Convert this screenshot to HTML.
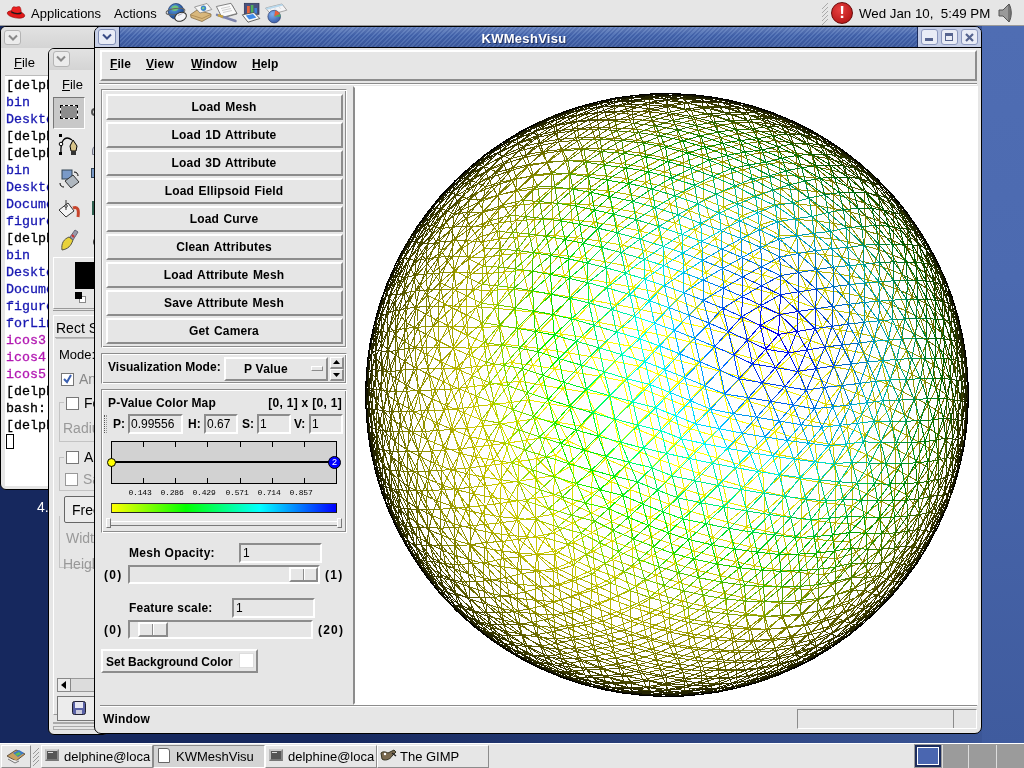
<!DOCTYPE html>
<html><head><meta charset="utf-8"><title>KWMeshVisu</title><style>
*{box-sizing:border-box;margin:0;padding:0}
html,body{width:1024px;height:768px;overflow:hidden}
body{position:relative;background:#16285e;font-family:"Liberation Sans",sans-serif;font-size:12px;color:#000}
.a{position:absolute}
.t{position:absolute;white-space:nowrap;line-height:1}
.b{font-weight:bold}
.raised{border:2px solid;border-color:#fff #8c8c8c #8c8c8c #fff;background:#e6e6e6}
.sunken{border:2px solid;border-color:#8c8c8c #fff #fff #8c8c8c;background:#e6e6e6}
.groove{border:1px solid;border-color:#8c8c8c #fff #fff #8c8c8c;box-shadow:inset 1px 1px 0 #fff, inset -1px -1px 0 #8c8c8c}
.btn{position:absolute;left:106px;width:237px;height:26px;border:2px solid;border-color:#fff #8c8c8c #8c8c8c #fff;background:#e6e6e6;text-align:center;font-weight:bold;font-size:12px;line-height:23px;letter-spacing:0.15px;word-spacing:1px;padding-right:1px}
.mono{font-family:"Liberation Mono",monospace}
</style></head><body>
<div id="w" style="position:absolute;left:0;top:0;width:1024px;height:768px;will-change:transform">
<div class="a" style="left:0;top:0;width:1024px;height:768px;background:linear-gradient(95deg,#16285e 0%,#16285e 36%,#3d5899 98%)"></div>
<div class="a" style="left:982px;top:26px;width:42px;height:718px;background:linear-gradient(180deg,#4f6db3 0%,#4c6ab0 35%,#3f5b9e 100%)"></div>
<div class="a" style="left:0;top:26px;width:110px;height:464px;background:#e6e6e6;border:1px solid #000;border-radius:6px 0 6px 6px"></div>
<div class="a" style="left:1px;top:27px;width:110px;height:21px;background:linear-gradient(180deg,#e2e2e2,#d4d4d4);border-radius:5px 0 0 0"></div>
<div class="a" style="left:4px;top:30px;width:17px;height:15px;border:1px solid #b4b4b4;border-radius:3px;background:#ececec"></div>
<svg class="a" style="left:8px;top:34px" width="10" height="8"><path d="M1 1.5L5 5.5L9 1.5" fill="none" stroke="#8a8a8a" stroke-width="2"/></svg>
<div class="t" style="left:14px;top:56px;font-size:13px"><u>F</u>ile</div>
<div class="a" style="left:5px;top:75px;width:56px;height:411px;background:#fff;border-top:1px solid #bbb"></div>

<div class="t mono" style="left:6px;top:79px;font-size:13.33px;color:#000;-webkit-text-stroke:.3px #000">[delph</div>
<div class="t mono" style="left:6px;top:96px;font-size:13.33px;color:#1818b2;-webkit-text-stroke:.3px #1818b2">bin</div>
<div class="t mono" style="left:6px;top:113px;font-size:13.33px;color:#1818b2;-webkit-text-stroke:.3px #1818b2">Deskto</div>
<div class="t mono" style="left:6px;top:130px;font-size:13.33px;color:#000;-webkit-text-stroke:.3px #000">[delph</div>
<div class="t mono" style="left:6px;top:147px;font-size:13.33px;color:#000;-webkit-text-stroke:.3px #000">[delph</div>
<div class="t mono" style="left:6px;top:164px;font-size:13.33px;color:#1818b2;-webkit-text-stroke:.3px #1818b2">bin</div>
<div class="t mono" style="left:6px;top:181px;font-size:13.33px;color:#1818b2;-webkit-text-stroke:.3px #1818b2">Deskto</div>
<div class="t mono" style="left:6px;top:198px;font-size:13.33px;color:#1818b2;-webkit-text-stroke:.3px #1818b2">Docume</div>
<div class="t mono" style="left:6px;top:215px;font-size:13.33px;color:#1818b2;-webkit-text-stroke:.3px #1818b2">figure</div>
<div class="t mono" style="left:6px;top:232px;font-size:13.33px;color:#000;-webkit-text-stroke:.3px #000">[delph</div>
<div class="t mono" style="left:6px;top:249px;font-size:13.33px;color:#1818b2;-webkit-text-stroke:.3px #1818b2">bin</div>
<div class="t mono" style="left:6px;top:266px;font-size:13.33px;color:#1818b2;-webkit-text-stroke:.3px #1818b2">Deskto</div>
<div class="t mono" style="left:6px;top:283px;font-size:13.33px;color:#1818b2;-webkit-text-stroke:.3px #1818b2">Docume</div>
<div class="t mono" style="left:6px;top:300px;font-size:13.33px;color:#1818b2;-webkit-text-stroke:.3px #1818b2">figure</div>
<div class="t mono" style="left:6px;top:317px;font-size:13.33px;color:#1818b2;-webkit-text-stroke:.3px #1818b2">forLin</div>
<div class="t mono" style="left:6px;top:334px;font-size:13.33px;color:#b218b2;-webkit-text-stroke:.3px #b218b2">icos3</div>
<div class="t mono" style="left:6px;top:351px;font-size:13.33px;color:#b218b2;-webkit-text-stroke:.3px #b218b2">icos4</div>
<div class="t mono" style="left:6px;top:368px;font-size:13.33px;color:#b218b2;-webkit-text-stroke:.3px #b218b2">icos5</div>
<div class="t mono" style="left:6px;top:385px;font-size:13.33px;color:#000;-webkit-text-stroke:.3px #000">[delph</div>
<div class="t mono" style="left:6px;top:402px;font-size:13.33px;color:#000;-webkit-text-stroke:.3px #000">bash:</div>
<div class="t mono" style="left:6px;top:419px;font-size:13.33px;color:#000;-webkit-text-stroke:.3px #000">[delph</div>
<div class="a" style="left:6px;top:434px;width:8px;height:15px;border:1px solid #000"></div>
<div class="t" style="left:37px;top:500px;font-size:14px;color:#fff">4.</div>
<div class="a" style="left:48px;top:48px;width:61px;height:687px;background:#e6e6e6;border:1px solid #000;border-radius:6px 0 6px 6px"></div>
<div class="a" style="left:49px;top:49px;width:50px;height:21px;background:linear-gradient(180deg,#e2e2e2,#d4d4d4);border-radius:5px 0 0 0"></div>
<div class="a" style="left:53px;top:51px;width:17px;height:16px;border:1px solid #b4b4b4;border-radius:3px;background:#ececec"></div>
<svg class="a" style="left:56px;top:55px" width="10" height="8"><path d="M1 1.5L5 5.5L9 1.5" fill="none" stroke="#8a8a8a" stroke-width="2"/></svg>
<div class="t" style="left:62px;top:78px;font-size:13px"><u>F</u>ile</div>
<div class="a" style="left:53px;top:97px;width:32px;height:32px;background:#c8c8c8;border:1px solid;border-color:#777 #fff #fff #777"></div>
<div class="a" style="left:60px;top:105px;width:18px;height:14px;background:#8c8c8c;border:1px dashed #000;outline:1px solid #fff;outline-offset:-1px"></div>
<div class="a" style="left:60px;top:105px;width:18px;height:14px;border:1px dashed #000"></div>

<svg class="a" style="left:56px;top:132px" width="28" height="26" viewBox="0 0 28 26"><path d="M5 22C4 8 9 3 16 8" fill="none" stroke="#000" stroke-width="1.3"/><rect x="3" y="2" width="3" height="3"/><rect x="3" y="20" width="3" height="3"/><circle cx="5" cy="12" r="1.8" fill="#fff" stroke="#000"/><path d="M14 14l3-6 4 6-1 5h-5z" fill="#d8c48a" stroke="#000"/><rect x="15" y="19" width="5" height="4" fill="#333"/></svg>
<svg class="a" style="left:57px;top:167px" width="26" height="26" viewBox="0 0 26 26"><rect x="5" y="3" width="10" height="9" fill="#7a9ac8" stroke="#345"/><path d="M8 14l8-6 6 7-8 6z" fill="#b0b8c0" stroke="#333"/><path d="M17 5c3 0 4 2 4 4M3 16c0 3 2 4 4 4" fill="none" stroke="#000"/></svg>
<svg class="a" style="left:56px;top:196px" width="26" height="26" viewBox="0 0 26 26"><path d="M3 14l9-7 6 8-8 6z" fill="#f4f4f4" stroke="#333"/><path d="M10 4v10" stroke="#333"/><circle cx="10" cy="10" r="1.3" fill="#fff" stroke="#333"/><path d="M17 12c5-2 6 2 5 9" fill="none" stroke="#c8452c" stroke-width="3"/></svg>
<svg class="a" style="left:58px;top:228px" width="24" height="26" viewBox="0 0 24 26"><path d="M4 22c-1-7 2-11 7-13l4 3c-2 6-5 9-11 10z" fill="#e8d23a" stroke="#554"/><path d="M12 9l5-7 3 2-5 8z" fill="#99a" stroke="#667"/><path d="M14 7l2 2" stroke="#c33" stroke-width="2"/></svg>
<div class="a" style="left:88px;top:98px;width:8px;height:160px;overflow:hidden"><div class="a" style="left:3px;top:10px;width:8px;height:8px;border-radius:4px;border:2px solid #555"></div><div class="a" style="left:3px;top:70px;width:8px;height:10px;background:#7a9ac8;border:1px solid #345"></div><div class="a" style="left:4px;top:48px;width:8px;height:9px;background:#c8d0dc;border:1px solid #778;border-radius:4px 0 0 0"></div><div class="a" style="left:4px;top:103px;width:6px;height:14px;background:#2f5f4f"></div><div class="a" style="left:5px;top:140px;width:8px;height:8px;border-radius:4px;background:#444"></div></div>

<div class="a" style="left:53px;top:257px;width:50px;height:52px;border:1px solid;border-color:#fff #999 #999 #fff"></div>
<div class="a" style="left:75px;top:262px;width:24px;height:27px;background:#000"></div>
<div class="a" style="left:79px;top:296px;width:7px;height:7px;background:#fff;border:1px solid #888"></div>
<div class="a" style="left:75px;top:292px;width:7px;height:7px;background:#000"></div>
<div class="a" style="left:53px;top:310px;width:50px;height:1px;background:#999"></div>
<div class="a" style="left:53px;top:315px;width:50px;height:400px;border:1px solid;border-color:#fff #999 #999 #fff"></div>
<div class="t" style="left:56px;top:321px;font-size:14px">Rect S</div>
<div class="a" style="left:55px;top:337px;width:50px;height:1px;background:#aaa"></div>
<div class="t" style="left:59px;top:348px;font-size:13px">Mode:</div>
<div class="a" style="left:61px;top:373px;width:13px;height:13px;background:#fff;border:1px solid #777"></div>
<svg class="a" style="left:62px;top:374px" width="11" height="11"><path d="M2 5l3 3 4-7" fill="none" stroke="#3a5fb0" stroke-width="2"/></svg>
<div class="t" style="left:79px;top:372px;font-size:14px;color:#888">An</div>
<div class="a" style="left:66px;top:397px;width:13px;height:13px;background:#fff;border:1px solid #777"></div>
<div class="t" style="left:84px;top:396px;font-size:14px">Fe</div>
<div class="t" style="left:63px;top:421px;font-size:14px;color:#999">Radiu</div>
<div class="a" style="left:59px;top:402px;width:50px;height:40px;border:1px solid #c4c4c4;border-right:none;border-top:none"></div><div class="a" style="left:59px;top:402px;width:5px;height:1px;background:#c4c4c4"></div>
<div class="a" style="left:59px;top:457px;width:50px;height:34px;border:1px solid #c4c4c4;border-right:none;border-top:none"></div><div class="a" style="left:59px;top:457px;width:5px;height:1px;background:#c4c4c4"></div>
<div class="a" style="left:59px;top:516px;width:50px;height:52px;border:1px solid #c4c4c4;border-right:none;border-top:none"></div>
<div class="a" style="left:56px;top:338px;width:50px;height:1px;background:#bbb"></div>
<div class="a" style="left:66px;top:451px;width:13px;height:13px;background:#fff;border:1px solid #777"></div>
<div class="t" style="left:84px;top:450px;font-size:14px">A</div>
<div class="a" style="left:65px;top:473px;width:13px;height:13px;background:#fff;border:1px solid #999"></div>
<div class="t" style="left:83px;top:472px;font-size:14px;color:#999">Sa</div>
<div class="a" style="left:64px;top:496px;width:40px;height:27px;background:#ececec;border:1px solid #666;border-radius:2px"></div>
<div class="t" style="left:72px;top:503px;font-size:14px">Free</div>
<div class="t" style="left:66px;top:531px;font-size:14px;color:#999">Widt</div>
<div class="t" style="left:63px;top:557px;font-size:14px;color:#999">Heigh</div>
<div class="a" style="left:57px;top:678px;width:50px;height:14px;background:#dcdcdc;border:1px solid #999"></div>
<div class="a" style="left:57px;top:678px;width:14px;height:14px;background:#ececec;border:1px solid #888"></div>
<svg class="a" style="left:60px;top:681px" width="8" height="8"><path d="M6 0L1 4l5 4z" fill="#000"/></svg>
<div class="a" style="left:57px;top:696px;width:50px;height:25px;background:#ececec;border:1px solid #777"></div>
<svg class="a" style="left:72px;top:701px" width="14" height="14"><rect x=".5" y=".5" width="13" height="13" rx="2" fill="#5a62a6" stroke="#223"/><rect x="3" y="1" width="8" height="6" fill="#e8e8f4"/><rect x="4" y="9" width="6" height="4" fill="#ccd"/></svg>
<div class="a" style="left:53px;top:722px;width:50px;height:2px;background:#aaa"></div><div class="a" style="left:53px;top:726px;width:50px;height:4px;border:1px solid #aaa;border-right:none"></div>

<div class="a" style="left:94px;top:26px;width:888px;height:708px;background:#e6e6e6;border:1px solid #000;border-radius:7px 7px 7px 7px"></div>
<div class="a" style="left:95px;top:27px;width:886px;height:21px;border-radius:6px 6px 0 0;background:repeating-linear-gradient(135deg,#5575b8 0,#5575b8 1.5px,#4060a8 1.5px,#4060a8 3.2px);border-bottom:1px solid #000"></div>
<div class="a" style="left:95px;top:27px;width:886px;height:21px;border-radius:6px 6px 0 0;background:linear-gradient(180deg,rgba(255,255,255,.18),rgba(255,255,255,0) 40%,rgba(0,0,30,.12))"></div>
<div class="a" style="left:95px;top:27px;width:25px;height:20px;background:#c8d0e6;border-radius:6px 0 0 0;border-right:1px solid #1c2c5c"></div>
<div class="a" style="left:98px;top:29px;width:18px;height:16px;border:1px solid #7f8db5;border-radius:3px;background:#e9ecf6"></div>
<svg class="a" style="left:102px;top:33px" width="10" height="8"><path d="M1 1.5L5 5.5L9 1.5" fill="none" stroke="#3a4c86" stroke-width="2"/></svg>
<div class="t b" style="left:424px;top:32px;width:200px;text-align:center;font-size:13px;color:#fff;text-shadow:1px 1px 0 #22315f;letter-spacing:.3px">KWMeshVisu</div>
<div class="a" style="left:917px;top:27px;width:64px;height:20px;background:#c4cde6;border-radius:0 6px 0 0;border-left:1px solid #1c2c5c"></div>

<div class="a" style="left:921px;top:29px;width:17px;height:16px;border:1px solid #8a96bd;border-radius:3px;background:#e9ecf6"></div>
<div class="a" style="left:941px;top:29px;width:17px;height:16px;border:1px solid #8a96bd;border-radius:3px;background:#e9ecf6"></div>
<div class="a" style="left:961px;top:29px;width:17px;height:16px;border:1px solid #8a96bd;border-radius:3px;background:#e9ecf6"></div>
<div class="a" style="left:925px;top:38px;width:8px;height:3px;background:#56648f"></div>
<div class="a" style="left:945px;top:33px;width:8px;height:8px;border:1px solid #56648f;border-top-width:3px"></div>
<svg class="a" style="left:965px;top:33px" width="9" height="9"><path d="M1 1l7 7M8 1l-7 7" stroke="#56648f" stroke-width="2.2"/></svg>

<div class="a" style="left:100px;top:50px;width:877px;height:31px;border:2px solid;border-color:#fff #8c8c8c #8c8c8c #fff"></div>
<div class="t b" style="left:110px;top:58px;font-size:12px;letter-spacing:.1px"><u>F</u>ile</div>
<div class="t b" style="left:146px;top:58px;font-size:12px;letter-spacing:.2px"><u>V</u>iew</div>
<div class="t b" style="left:191px;top:58px;font-size:12px;letter-spacing:0px"><u>W</u>indow</div>
<div class="t b" style="left:252px;top:58px;font-size:12px;letter-spacing:.1px"><u>H</u>elp</div>
<div class="a" style="left:99px;top:83px;width:878px;height:2px;border-top:1px solid #8c8c8c;border-bottom:1px solid #fff"></div>

<div class="a groove" style="left:101px;top:89px;width:246px;height:259px"></div>
<div class="btn" style="top:94px">Load Mesh</div>
<div class="btn" style="top:122px">Load 1D Attribute</div>
<div class="btn" style="top:150px">Load 3D Attribute</div>
<div class="btn" style="top:178px">Load Ellipsoid Field</div>
<div class="btn" style="top:206px">Load Curve</div>
<div class="btn" style="top:234px">Clean Attributes</div>
<div class="btn" style="top:262px">Load Attribute Mesh</div>
<div class="btn" style="top:290px">Save Attribute Mesh</div>
<div class="btn" style="top:318px">Get Camera</div>
<div class="a groove" style="left:101px;top:353px;width:246px;height:31px"></div>
<div class="t b" style="left:108px;top:361px;letter-spacing:.05px">Visualization Mode:</div>
<div class="a raised" style="left:224px;top:357px;width:104px;height:24px"></div>
<div class="t b" style="left:226px;top:363px;width:80px;text-align:center;letter-spacing:.2px">P Value</div>
<div class="a" style="left:311px;top:366px;width:12px;height:5px;border:1px solid;border-color:#fff #8c8c8c #8c8c8c #fff;background:#e6e6e6"></div>
<div class="a raised" style="left:330px;top:357px;width:14px;height:12px;border-width:1px 2px 2px 1px"></div>
<div class="a raised" style="left:330px;top:369px;width:14px;height:12px;border-width:1px 2px 2px 1px"></div>
<svg class="a" style="left:332px;top:359px" width="9" height="20"><path d="M4.5 1L8 5H1zM4.5 18L8 14H1z" fill="#000"/></svg>

<div class="a groove" style="left:101px;top:389px;width:246px;height:144px"></div>
<div class="t b" style="left:108px;top:397px;letter-spacing:.15px">P-Value Color Map</div>
<div class="t b" style="left:242px;top:397px;width:100px;text-align:right;letter-spacing:.3px">[0, 1] x [0, 1]</div>
<div class="a" style="left:104px;top:415px;width:3px;height:18px;border-left:1px dotted #555;border-right:1px dotted #999"></div>
<div class="t b" style="left:113px;top:418px">P:</div>
<div class="a sunken" style="left:128px;top:414px;width:55px;height:20px"></div><div class="t" style="left:131px;top:418px">0.99556</div>
<div class="t b" style="left:188px;top:418px">H:</div>
<div class="a sunken" style="left:204px;top:414px;width:34px;height:20px"></div><div class="t" style="left:207px;top:418px">0.67</div>
<div class="t b" style="left:242px;top:418px">S:</div>
<div class="a sunken" style="left:257px;top:414px;width:34px;height:20px"></div><div class="t" style="left:260px;top:418px">1</div>
<div class="t b" style="left:294px;top:418px">V:</div>
<div class="a sunken" style="left:309px;top:414px;width:34px;height:20px"></div><div class="t" style="left:312px;top:418px">1</div>
<div class="a" style="left:111px;top:441px;width:226px;height:43px;background:#d2d2d2;border:1px solid #000"></div>
<div class="a" style="left:111px;top:461px;width:226px;height:2px;background:#000"></div>

<div class="a" style="left:143px;top:442px;width:1px;height:5px;background:#000"></div><div class="a" style="left:143px;top:478px;width:1px;height:5px;background:#000"></div>
<div class="a" style="left:175px;top:442px;width:1px;height:5px;background:#000"></div><div class="a" style="left:175px;top:478px;width:1px;height:5px;background:#000"></div>
<div class="a" style="left:207px;top:442px;width:1px;height:5px;background:#000"></div><div class="a" style="left:207px;top:478px;width:1px;height:5px;background:#000"></div>
<div class="a" style="left:240px;top:442px;width:1px;height:5px;background:#000"></div><div class="a" style="left:240px;top:478px;width:1px;height:5px;background:#000"></div>
<div class="a" style="left:272px;top:442px;width:1px;height:5px;background:#000"></div><div class="a" style="left:272px;top:478px;width:1px;height:5px;background:#000"></div>
<div class="a" style="left:304px;top:442px;width:1px;height:5px;background:#000"></div><div class="a" style="left:304px;top:478px;width:1px;height:5px;background:#000"></div>
<div class="t mono" style="left:120px;top:489px;width:40px;text-align:center;font-size:8px;letter-spacing:-.2px;color:#000">0.143</div>
<div class="t mono" style="left:152px;top:489px;width:40px;text-align:center;font-size:8px;letter-spacing:-.2px;color:#000">0.286</div>
<div class="t mono" style="left:184px;top:489px;width:40px;text-align:center;font-size:8px;letter-spacing:-.2px;color:#000">0.429</div>
<div class="t mono" style="left:217px;top:489px;width:40px;text-align:center;font-size:8px;letter-spacing:-.2px;color:#000">0.571</div>
<div class="t mono" style="left:249px;top:489px;width:40px;text-align:center;font-size:8px;letter-spacing:-.2px;color:#000">0.714</div>
<div class="t mono" style="left:281px;top:489px;width:40px;text-align:center;font-size:8px;letter-spacing:-.2px;color:#000">0.857</div>
<div class="a" style="left:107px;top:458px;width:9px;height:9px;border-radius:50%;background:#ffff00;border:1px solid #000"></div>
<div class="a" style="left:328px;top:456px;width:13px;height:13px;border-radius:50%;background:#0000ff;border:1px solid #000"></div>
<div class="t" style="left:328px;top:458px;width:13px;text-align:center;font-size:9px;color:#fff">2</div>
<div class="a" style="left:111px;top:503px;width:226px;height:10px;background:linear-gradient(90deg,#ffff00 0%,#00ff00 33%,#00ffff 66%,#0000ff 100%);border:1px solid;border-color:#333 #111 #222 #443"></div>
<div class="a" style="left:107px;top:521px;width:234px;height:5px;border-top:1px solid #fff;border-bottom:1px solid #7a7a7a;background:#e6e6e6"></div>
<div class="a" style="left:106px;top:518px;width:5px;height:10px;border:1px solid;border-color:#fff #777 #777 #fff;background:#e6e6e6"></div>
<div class="a" style="left:337px;top:518px;width:5px;height:10px;border:1px solid;border-color:#fff #777 #777 #fff;background:#e6e6e6"></div>

<div class="t b" style="left:129px;top:547px;letter-spacing:.3px">Mesh Opacity:</div>
<div class="a sunken" style="left:239px;top:543px;width:83px;height:20px"></div><div class="t" style="left:243px;top:547px">1</div>
<div class="t b" style="left:104px;top:569px;letter-spacing:1.3px">(0)</div>
<div class="a sunken" style="left:128px;top:565px;width:192px;height:19px"></div>
<div class="a raised" style="left:289px;top:567px;width:29px;height:15px"></div>
<div class="a" style="left:303px;top:569px;width:2px;height:11px;border-left:1px solid #8c8c8c;border-right:1px solid #fff"></div>
<div class="t b" style="left:325px;top:569px;letter-spacing:1.3px">(1)</div>
<div class="t b" style="left:129px;top:602px;letter-spacing:.2px">Feature scale:</div>
<div class="a sunken" style="left:232px;top:598px;width:83px;height:20px"></div><div class="t" style="left:236px;top:602px">1</div>
<div class="t b" style="left:104px;top:624px;letter-spacing:1.3px">(0)</div>
<div class="a sunken" style="left:128px;top:620px;width:185px;height:19px"></div>
<div class="a raised" style="left:138px;top:622px;width:30px;height:15px"></div>
<div class="a" style="left:152px;top:624px;width:2px;height:11px;border-left:1px solid #8c8c8c;border-right:1px solid #fff"></div>
<div class="t b" style="left:318px;top:624px;letter-spacing:1.2px">(20)</div>
<div class="a raised" style="left:101px;top:649px;width:157px;height:24px"></div>
<div class="t b" style="left:106px;top:656px;letter-spacing:0px">Set Background Color</div>
<div class="a" style="left:239px;top:653px;width:15px;height:15px;background:#fff;border:1px solid #ddd"></div>

<div class="a" style="left:100px;top:705px;width:877px;height:2px;border-top:1px solid #8c8c8c;border-bottom:1px solid #fff"></div>
<div class="t b" style="left:103px;top:713px;letter-spacing:.2px">Window</div>
<div class="a" style="left:797px;top:709px;width:180px;height:20px;border:1px solid;border-color:#8c8c8c #fff #fff #8c8c8c"></div>
<div class="a" style="left:953px;top:710px;width:1px;height:18px;background:#8c8c8c"></div>

<div class="a" style="left:353px;top:86px;width:625px;height:619px;background:#fff;border:2px solid;border-color:#fff #fff #fff #8c8c8c"></div>
<svg class="a" style="left:0;top:0" width="1024" height="768" fill="none" stroke-width="1" shape-rendering="crispEdges">
<path stroke="#b6b600" d="M779 235l18.5 0.6M779 235l1.1-16.4M494.6 308.2l-18.1-1.3M626 178.6l19.4 3.7M626 178.6l-18.5 12.5M626 178.6l4.6 16.2M851.5 467.2l0.7 19.4M851.5 467.2l15.9 7.8M851.5 467.2l14.9-12.7M723.9 593.4l15.4-13.4M723.9 593.4l3 16.4M723.9 593.4l18.8 4.2M723.9 593.4l-22.5-4.8M723.9 593.4l-19.1 13.1M485.4 465.9l-15.6 1.8M485.4 465.9l-1.2 20M451.3 389.3l15.6-2.1M451.3 389.3l9-20.6M451.3 389.3l-7.7 20.7M451.3 389.3l7 19.4M451.3 389.3l-7.7-21.2M703.9 199.3l19.8-8.1M703.9 199.3l-0.4-15.8M703.9 199.3l-19.4-6.7M554.8 235.6l-19.1 0.3M554.8 235.6l-1.8-16.8M815.4 237l-17.9-1.4M815.4 237l-16.9-17.5M815.4 237l-8.1 16.1M815.4 237l9.8 17.8M780.8 203.1l17.8 16.3M780.8 203.1l-0.6 15.5M780.8 203.1l-19 5.5M834.2 273.3l-17.6-1.8M834.2 273.3l-9-18.5M834.2 273.3l8-16.1M834.2 273.3l8.8 19.7M834.2 273.3l17.4 3M863.9 353.2l-6-20.2M863.9 353.2l10.2-16.7M863.9 353.2l6.2 23.9M863.9 353.2l17.2 6.9M851 313.1l16.6 3.3M851 313.1l6.9 19.9M851 313.1l-7.9-20.2M851 313.1l9.2-16.9M852 505.5l-1 18.4M852 505.5l0.2-18.9M852 505.5l15.4-11.4M852 505.5l-16.7 17.4M852 505.5l-16-1.4M880.3 441.5l-13.9 13M880.3 441.5l-15.8-6.9M880.3 441.5l-2.2-20.1M874.8 401.1l-13.2 13.2M874.8 401.1l-16.9-7M874.8 401.1l15.6 7M874.8 401.1l3.2 20.3M874.8 401.1l-4.8-24M874.8 401.1l11.8-17M817.5 539.5l17.8-16.6M817.5 539.5l16.1 1.4M817.5 539.5l-16.9-2.1M817.5 539.5l1.2-18.3M817.5 539.5l3.8 18.1M817.5 539.5l-12.8 16.4M791.4 571.6l-3.7-18M791.4 571.6l13.4-15.7M791.4 571.6l-18.2-2.5M791.4 571.6l-14.9 15.1M754.4 565.7l3.6 18.2M761.1 600.8l-18.4-3.2M761.1 600.8l-3-16.9M596.4 585.6l-17.8 7.7M596.4 585.6l-20.1-8.3M596.4 585.6l3.1 18.5M596.4 585.6l21.4 10.1M556.6 568.1l19.6 9.3M556.6 568.1l2.1 16.4M556.6 568.1l-17.6 3.2M556.6 568.1l-19.4-13.9M639.5 604.7l3.4 16.9M639.5 604.7l-18.3 9M639.5 604.7l-21.7-8.9M639.5 604.7l-3.2-18.3M639.5 604.7l19.6-10.4M639.5 604.7l23 7.5M685.5 618.2l19.4-11.7M685.5 618.2l-23-6M685.5 618.2l-3.3-17.1M484 505.4l0.7 18.9M484 505.4l-14.9 1.7M484 505.4l-15-17.8M484 505.4l0.2-19.5M484 505.4l16.5-2M484 505.4l16.8 17.3M455.2 469.2l14.6-1.4M455.2 469.2l13.8 18.4M455.2 469.2l4.9-20.4M518.7 539.3l17.4-2.8M518.7 539.3l18.6 14.9M518.7 539.3l1.3 17.5M518.7 539.3l-16.6 2.1M518.7 539.3l-17.9-16.5M518.7 539.3l-0.8-18.9M470.6 348.2l-10.3 20.5M470.6 348.2l-6.2-21.2M470.6 348.2l-17.2-0.7M466.3 428l9.1 19.1M466.3 428l-6.2 20.8M466.3 428l-15 1.4M466.3 428l-8-19.3M487.1 273.8l3.4 17M487.1 273.8l-14.3 15.9M487.1 273.8l17.5-2M487.1 273.8l14.6-18.8M459.6 306.1l16.9 0.8M459.6 306.1l4.8 20.8M743.1 184.4l-0.3 15M743.1 184.4l-19.4 6.8M742.2 215.5l19.6-6.8M742.2 215.5l0.7-16M665 187l-19.5-4.7M665 187l-0.7-15.2M665 187l19-9.8M665 187l19.5 5.7M665 187l-14.8 12.1M665 187l5 17.5M517.4 237l18.4-1.1M517.4 237l2.4 16.3M517.4 237l-15.7 17.9M517.4 237l16.8-17.6M551.9 203l18.6 0.4M551.9 203l1.2 15.9M589.5 204.8l-1-15.7M589.5 204.8l18.1-13.7M589.5 204.8l-17.6 14.9M589.5 204.8l-19-1.3M589.5 204.8l22.8 3.1M797.5 235.6l1-16.1M797.5 235.6l-17.4-17M797.5 235.6l9.8 17.5M798.5 219.5l-18.4-0.8M780.2 218.6l-18.4-10M780.2 218.6l-19.3 6.2M832.6 239.1l-7.4 15.7M807.3 253.1l17.9 1.7M816.6 271.4l8.6-16.7M825.2 254.8l17 2.4M842.2 257.2l9.5 19.1M867.5 316.5l-9.7 16.5M867.5 316.5l6.6 20M867.5 316.5l-7.4-20.3M857.9 333l16.2 3.5M874.1 336.5l7 23.6M843 292.9l17.1 3.3M843 292.9l8.6-16.7M860.2 296.2l-8.5-19.9M851 523.9l-15.6-1M852.2 486.5l15.3 7.6M852.2 486.5l15.2-11.6M852.2 486.5l-16.1 17.6M867.5 494.1l-0.1-19.1M867.3 475l-1-20.5M867.3 475l14.3-12.9M861.6 414.4l16.5 7M866.4 454.5l-1.9-19.9M866.4 454.5l15.3 7.6M864.4 434.6l13.6-13.2M890.5 408.1l-12.4 13.3M878.1 421.4l15 6.9M870.1 377.1l16.5 7M870.1 377.1l11-17M886.6 384.1l-5.5-24.1M835.3 522.9l-1.6 18M835.3 522.9l0.7-18.8M835.3 522.9l-16.5-1.7M800.7 537.3l4.1 18.6M821.4 557.6l-16.6-1.6M787.7 553.6l17.1 2.4M787.7 553.6l-14.5 15.5M804.8 555.9l3.3 17.6M739.4 580l3.3 17.6M739.4 580l18.7 3.9M727 609.7l15.7-12.1M727 609.7l-22.1-3.3M742.7 597.6l15.4-13.7M773.2 569.1l-15.1 14.8M773.2 569.1l3.3 17.6M758.1 583.9l18.5 2.8M578.5 593.4l-2.3-16M578.5 593.4l-19.9-9M578.5 593.4l21 10.8M576.2 577.3l-17.6 7.1M558.7 584.4l-19.7-13.2M701.4 588.6l3.4 17.9M701.4 588.6l-19.3 12.5M599.5 604.2l21.7 9.5M599.5 604.2l18.3-8.4M621.2 613.6l-3.4-17.9M617.8 595.8l18.5-9.5M704.8 606.5l-22.7-5.4M659.1 594.3l3.4 17.9M659.1 594.3l23.1 6.8M662.5 612.2l19.7-11.1M484.7 524.4l16.1-1.6M469.8 467.7l-0.8 19.9M469.8 467.7l14.4 18.2M469.8 467.7l5.5-20.6M469.8 467.7l-9.7-19M469 487.6l15.2-1.7M484.2 485.9l16.2 17.5M539 571.2l-1.7-17.1M539 571.2l-19-14.5M537.2 554.2l-17.3 2.6M520 556.8l-17.9-15.4M502.1 541.3l-1.3-18.6M500.5 503.4l0.3 19.4M500.8 522.8l17.1-2.4M482 328l-5.5-21.1M482 328l-17.6-1.1M466.9 387.2l-6.6-18.6M466.9 387.2l-8.6 21.4M476.6 366.6l-16.3 2M460.3 368.7l-7-21.1M460.3 368.7l-16.7-0.5M445.7 450l14.4-1.3M475.4 447.1l-15.2 1.6M460.1 448.7l-8.8-19.4M443.7 410l7.7 19.4M443.7 410l14.6-1.3M451.3 429.3l7-20.7M458.3 408.7l16-2M490.4 290.7l-17.6-1.1M490.4 290.7l-13.9 16.2M490.4 290.7l14.2-19M472.8 289.7l3.7 17.2M476.5 306.9l-12.1 20M464.4 326.9l-11.1 20.6M606.8 175.9l0.8 15.1M761.8 208.7l-1 16.1M761.8 208.7l0.4-15.4M761.8 208.7l-18.9-9.2M762.2 193.3l-19.3 6.2M723.2 207l19.6-7.5M723.2 207l0.5-15.7M742.8 199.5l-19.1-8.2M723.7 191.2l-20.2-7.7M723.7 191.2l-0.5-15.2M645.4 182.3l18.8-10.5M645.4 182.3l-0.7-14.8M645.4 182.3l-14.8 12.5M645.4 182.3l4.7 16.8M664.3 171.8l19.7 5.4M703.5 183.5l-19.5-6.3M703.5 183.5l-19 9.2M703.5 183.5l19.7-7.5M684 177.2l0.5 15.5M504.6 271.8l15.2-18.4M504.6 271.8l-2.9-16.8M535.8 235.9l-16 17.4M535.8 235.9l17.3-17.1M535.8 235.9l-1.6-16.5M519.8 253.3l-18.1 1.6M588.5 189l19.1 2M588.5 189l-18 14.4M607.6 191l23 3.8M607.6 191l4.7 16.8M571.9 219.6l-1.4-16.2M571.9 219.6l-18.8-0.8M570.4 203.4l-17.4 15.4M553.1 218.8l-18.9 0.6M630.6 194.8l19.5 4.3"/>
<path stroke="#c8c800" d="M779 235l9.9 17.3M779 235l-12.8 10.6M779 235l-18.2-10.2M839.8 387.2l12.6-17.1M839.8 387.2l4.2 20.2M839.8 387.2l18.1 7M494.6 308.2l-12.6 19.8M494.6 308.2l5 17.9M494.6 308.2l-4.2-17.5M494.6 308.2l13.7-19.2M494.6 308.2l19.2 1.8M815.1 307.8l10.1-17.6M815.1 307.8l-8-19M815.1 307.8l18.4 2.5M851.5 467.2l-1.6-19.7M851.5 467.2l-15.5 17.8M851.5 467.2l-16.8-2.5M783.2 534.5l17.5 2.8M783.2 534.5l18.5-15.7M783.2 534.5l0-19.1M783.2 534.5l-18.1-3.5M783.2 534.5l4.5 19M783.2 534.5l-14.1 16M723.9 593.4l-3.4-17.6M554.1 532.9l1 17.9M554.1 532.9l19.2 9.6M554.1 532.9l-18.6-15.7M554.1 532.9l-18 3.5M633.2 566.7l-20.3-7.2M633.2 566.7l-18.6 10M633.2 566.7l22.7 8.5M633.2 566.7l3 19.6M485.4 465.9l15.7 17.7M485.4 465.9l16.4-2.1M485.4 465.9l6.9-20.8M485.4 465.9l-10-18.9M703.9 199.3l19.3 7.6M703.9 199.3l5.8 18.9M703.9 199.3l-14.5 11.4M554.8 235.6l-16.3 16.9M554.8 235.6l17-16M554.8 235.6l4.4 19.5M554.8 235.6l21.9 2.2M798.3 270.2l-9.3-17.9M798.3 270.2l9-17.1M798.3 270.2l18.3 1.2M798.3 270.2l8.7 18.5M798.3 270.2l-22.3-7.1M798.3 270.2l-13.1 11.3M834.2 273.3l-9.1 16.9M863.9 353.2l-11.5 16.9M863.9 353.2l-17-3.2M851 313.1l-10.4 16.7M851 313.1l-17.5-2.9M829 347l17.9 3M829 347l11.5-17.1M847.4 427.5l-3.3-20.1M847.4 427.5l14.2-13.1M847.4 427.5l17.1 7.2M847.4 427.5l2.5 20M847.4 427.5l-17.5-3M847.4 427.5l-14.6 17.3M819.3 502.2l16.6-17.2M819.3 502.2l16.8 1.9M819.3 502.2l-0.5 18.9M819.3 502.2l-17.6 16.5M819.3 502.2l-0.7-20M819.3 502.2l-18-3M817.1 461.7l17.6 2.9M716.8 557.1l19 4.7M716.8 557.1l3.7 18.7M716.8 557.1l-18.9 13.3M754.4 565.7l-15.1 14.3M754.4 565.7l-18.7-3.9M754.4 565.7l-3.7-18.9M754.4 565.7l14.6-15.2M754.4 565.7l18.7 3.4M596.4 585.6l-1.9-16.7M596.4 585.6l18.3-8.9M592.9 551.4l20 8.1M592.9 551.4l1.6 17.5M592.9 551.4l-18.4 8.8M592.9 551.4l-19.6-8.9M556.6 568.1l-1.5-17.2M556.6 568.1l17.8-7.8M678.7 582.5l-22.8-7.3M678.7 582.5l-3.9-18.9M678.7 582.5l19.1-12.2M678.7 582.5l22.7 6.1M678.7 582.5l-19.6 11.7M678.7 582.5l3.4 18.5M517.8 500.8l-16.7-17.1M517.8 500.8l0.3-19.5M517.8 500.8l17.6-2.6M517.8 500.8l17.7 16.5M517.8 500.8l-17.3 2.6M517.8 500.8l0.1 19.6M500.3 424l-8 21.1M500.3 424l-8.8-19.4M500.3 424l-17.5 2.1M470.6 348.2l11.5-20.2M470.6 348.2l17-2.1M470.6 348.2l6 18.5M483.5 385.2l-16.6 2M483.5 385.2l-6.9-18.6M483.5 385.2l10.5-20.6M483.5 385.2l17.5-2M483.5 385.2l7.9 19.4M483.5 385.2l-9.2 21.4M505.5 344.3l-17.9 1.8M505.5 344.3l-5.8-18.2M505.5 344.3l-11.5 20.4M466.3 428l8-21.3M466.3 428l16.5-1.9M742.2 215.5l18.6 9.4M742.2 215.5l-19-8.5M742.2 215.5l5.7 20.2M742.2 215.5l-13.3 11M523 270.4l-14.7 18.6M523 270.4l-18.4 1.4M523 270.4l-3.2-17M523 270.4l15.5-17.8M523 270.4l5 20.7M523 270.4l20.3 2.2M589.5 204.8l4.7 17.6M715.3 238.4l-5.5-20.1M635.4 212.3l-4.8-17.5M635.4 212.3l14.7-13.2M635.4 212.3l19.7 5M635.4 212.3l5 18.6M635.4 212.3l-23.2-4.4M635.4 212.3l-18.2 13.8M674.8 223.2l-19.7-5.9M674.8 223.2l-4.9-18.7M674.8 223.2l14.6-12.4M599.3 241l-22.5-3.2M599.3 241l-5.2-18.7M797.5 235.6l-8.6 16.7M788.9 252.2l18.4 0.9M788.9 252.2l-22.7-6.7M788.9 252.2l-12.9 10.9M807.3 253.1l9.3 18.3M825.1 290.2l-8.5-18.7M825.1 290.2l-18.1-1.5M825.1 290.2l8.3 20.1M825.1 290.2l17.9 2.8M816.6 271.4l-9.6 17.3M852.4 370.1l-5.5-20.1M852.4 370.1l-17.6-3.1M852.4 370.1l5.5 24.1M852.4 370.1l17.6 7M846.9 350l-12.1 17.1M846.9 350l11-17M846.9 350l-6.4-20.1M857.9 333l-17.4-3.1M822.4 327.2l18.1 2.6M822.4 327.2l11-17M840.5 329.9l-7.1-19.6M833.4 310.2l9.6-17.3M852.2 486.5l-16.3-1.5M844 407.3l17.6 7M844 407.3l13.9-13.2M861.6 414.4l-3.7-20.2M861.6 414.4l2.8 20.3M857.9 394.1l12.1-17.1M866.4 454.5l-16.5-7.1M864.4 434.6l-14.6 12.8M849.9 447.4l-17.1-2.7M849.9 447.4l-15.1 17.2M766.2 245.6l9.8 17.5M766.2 245.6l-5.4-20.8M766.2 245.6l-18.4-9.9M835.9 485l0.1 19.1M835.9 485l-1.2-20.4M835.9 485l-17.3-2.8M836.1 504.1l-17.3 17M800.7 537.3l18.1-16.2M800.7 537.3l1-18.6M800.7 537.3l-13 16.2M818.8 521.2l-17.1-2.4M801.7 518.8l-18.5-3.3M801.7 518.8l-0.4-19.5M832.8 444.8l2 19.9M834.7 464.6l-16.1 17.6M765.1 531l4 19.5M818.6 482.2l-17.3 17.1M787.7 553.6l-18.6-3.1M739.4 580l-3.6-18.2M739.4 580l-18.8-4.2M735.8 561.8l-15.3 14M735.8 561.8l15-15M720.5 575.8l-22.7-5.4M720.5 575.8l-19.1 12.8M750.8 546.8l18.3 3.7M769.1 550.5l4.1 18.6M553.6 514.3l-18.1 2.9M576.2 577.3l18.2-8.4M576.2 577.3l-1.8-17.1M612.9 559.5l-18.5 9.5M612.9 559.5l1.7 17.2M594.4 569l20.2 7.8M594.4 569l-20-8.7M614.6 576.7l3.2 19M614.6 576.7l21.6 9.6M555.1 550.9l19.4 9.4M555.1 550.9l18.2-8.3M555.1 550.9l-19-14.4M555.1 550.9l-17.8 3.3M574.5 560.3l-1.2-17.7M655.9 575.2l18.9-11.6M655.9 575.2l-19.7 11.1M655.9 575.2l3.2 19M674.8 563.6l23 6.8M697.9 570.3l3.6 18.2M636.2 586.3l22.8 7.9M501.1 483.7l17-2.4M501.1 483.7l0.8-19.9M501.1 483.7l-16.8 2.3M501.1 483.7l-0.6 19.7M518.1 481.3l-16.2-17.5M501.8 463.8l-9.6-18.7M535.4 498.2l0.1 19M535.5 517.3l0.5 19.2M535.5 517.3l-17.7 3.1M536 536.5l1.2 17.7M536 536.5l-18.2-16.1M500.5 503.4l17.4 17M509.3 442.8l-17 2.3M492.3 445.1l-16.9 1.9M492.3 445.1l-9.5-19.1M482 328l5.5 18.1M482 328l17.6-1.9M487.6 346.1l12.1-20M487.6 346.1l-11 20.5M487.6 346.1l6.4 18.6M499.7 326.1l14.2-16M466.9 387.2l9.7-20.6M466.9 387.2l7.4 19.4M476.6 366.6l17.4-2M475.4 447.1l7.4-21M491.4 404.6l-17.2 2M491.4 404.6l-8.6 21.4M474.3 406.6l8.5 19.4M490.4 290.7l17.9-1.8M760.8 224.8l-13 10.8M723.2 207l-13.4 11.3M723.2 207l5.7 19.5M684.5 192.7l-14.6 11.8M684.5 192.7l5 18.1M508.3 289l-3.7-17.2M508.3 289l5.5 21.1M508.3 289l19.7 2.1M535.8 235.9l2.7 16.6M519.8 253.3l18.7-0.8M538.5 252.5l4.8 20M538.5 252.5l20.7 2.6M571.9 219.6l4.9 18.1M571.9 219.6l22.3 2.7M513.8 310l14.2-19M747.9 235.6l-19-9.2M709.7 218.3l19.1 8.2M709.7 218.3l-20.3-7.5M709.7 218.3l-14.6 12M630.6 194.8l-18.3 13.1M650.1 199.1l5 18.2M650.1 199.1l19.8 5.3M655.1 217.3l-14.7 13.6M655.1 217.3l14.8-12.8M669.9 204.5l19.5 6.3M689.4 210.8l5.7 19.5M528 291l15.3-18.5M543.3 272.6l16-17.5M559.2 255.1l17.6-17.3M612.3 207.9l-18.1 14.4M612.3 207.9l5 18.2M576.8 237.8l17.4-15.4M594.2 222.3l23 3.8"/>
<path stroke="#a4a400" d="M849 541.7l15.9-10.7M849 541.7l1.9-17.8M849 541.7l-15.3-0.7M849 541.7l-12 16.8M561.3 599.9l17.3-6.5M561.3 599.9l-2.6-15.5M561.3 599.9l3.1 14.5M561.3 599.9l20.7 11.4M561.3 599.9l-16.6 5.2M561.3 599.9l-20-12.6M626 178.6l-4.3-14.9M626 178.6l-19.2-2.6M626 178.6l18.7-11.1M849 241.9l-15.7-18.5M849 241.9l-16.4-2.9M849 241.9l-6.8 15.2M849 241.9l10 18.6M883.1 320.2l-15.6-3.7M883.1 320.2l-9 16.3M883.1 320.2l7.6-15.8M883.1 320.2l-6.9-20.4M883.1 320.2l16.4 6.4M883.1 320.2l7.7 23.3M904.7 415l-14.3-6.9M904.7 415l-11.6 13.4M904.7 415l-3.1-23.9M796.3 604.1l-2.1-15.6M646.5 637l-3.6-15.4M646.5 637l19.5-8.7M486.3 542.6l-1.6-18.3M486.3 542.6l-16.2-16.8M486.3 542.6l17.3 15.9M486.3 542.6l15.8-1.3M486.3 542.6l1.6 19.4M451.3 389.3l-16.5 0.6M483 241.7l1.6 15.7M483 241.7l16.8-2.7M815.4 237l1-15.9M815.4 237l17.2 2.1M816.6 206l-0.2 15.1M816.6 206l-17.6-1.9M780.8 203.1l0.1-14.6M780.8 203.1l18.3 1M780.8 203.1l-18.6-9.9M868.1 279.9l-9.1-19.3M868.1 279.9l6.2-15.4M868.1 279.9l15 4.3M868.1 279.9l8 19.9M868.1 279.9l-7.9 16.3M868.1 279.9l-16.5-3.6M880 519.6l-13.3-6.6M881.9 482.2l13.2 6.7M881.9 482.2l-0.5 18.9M881.9 482.2l-14.5 11.9M881.9 482.2l-14.6-7.3M881.9 482.2l13.8-13.1M881.9 482.2l-0.3-20.2M852 505.5l14.6 7.4M880.3 441.5l12.8-13.2M880.3 441.5l14.7 7.2M880.3 441.5l1.4 20.5M897 367.2l4.7 23.9M897 367.2l-10.4 16.9M897 367.2l-15.9-7.1M897 367.2l-6.2-23.7M897 367.2l9.5-17M897 367.2l15 7.1M824.2 574.6l12.8-16.1M824.2 574.6l-2.8-17M824.2 574.6l-16.1-1.1M791.4 571.6l16.8 1.9M791.4 571.6l2.9 16.9M761.1 600.8l17.9 2.2M761.1 600.8l2.8 15M761.1 600.8l-15.5 12.5M761.1 600.8l15.4-14.1M729.6 624.8l-2.7-15M729.6 624.8l15.9-11.4M729.6 624.8l-22-2.6M603.1 621.2l-21.2-10M603.1 621.2l21.6 8.6M603.1 621.2l-3.6-17.1M603.1 621.2l18.1-7.6M685.5 618.2l22.2 4M685.5 618.2l2.6 15.1M685.5 618.2l-19.5 10.2M455.1 508.2l-0.5-19.3M455.1 508.2l14-1.1M455.1 508.2l15 17.6M455.2 469.2l-0.6 19.8M455.2 469.2l-13.6 1.1M455.2 469.2l-9.5-19.1M522 573.5l17-2.2M522 573.5l19.2 13.8M522 573.5l-18.3-14.9M522 573.5l-2-16.7M522 573.5l2.9 18.5M522 573.5l-16.2 4M437.4 430.6l8.3 19.4M437.4 430.6l-4.9 20.4M437.4 430.6l6.3-20.6M437.4 430.6l13.9-1.2M437.4 430.6l-9.5-20M487.1 273.8l-17.1-0.9M487.1 273.8l-2.5-16.4M454.1 272.7l15.9 0.1M459.6 306.1l13.2-16.5M459.6 306.1l-15.7-0.2M459.6 306.1l-3.2-17M459.6 306.1l-11.8 20.3M437.4 347.2l-4.7-20.7M437.4 347.2l10.4-20.7M437.4 347.2l15.9 0.4M437.4 347.2l6.2 21M437.4 347.2l-9.5 21.6M587.9 174.3l14.7-12.7M587.9 174.3l18.9 1.6M587.9 174.3l-18.6-0.5M587.9 174.3l0.6 14.7M587.9 174.3l-18.3 13.7M743.1 184.4l18.9-5.4M743.1 184.4l19.1 8.9M743.1 184.4l-0.6-14.6M743.1 184.4l-19.9-8.4M702.9 168.7l0.6 14.8M702.9 168.7l-18.9 8.4M702.9 168.7l-19.6-6.1M702.9 168.7l-0.8-13.6M702.9 168.7l19.5-6.9M702.9 168.7l20.2 7.3M663.6 157.8l0.7 14M663.6 157.8l-18.8 9.7M663.6 157.8l19.7 4.9M515.1 205.5l0.7 15.3M515.1 205.5l18-1.8M517.4 237l-17.6 1.9M517.4 237l-1.5-16.2M551.9 203l-0.6-14.9M551.9 203l17.7-15M551.9 203l-17.7 16.4M551.9 203l-18.7 0.8M798.5 219.5l17.9 1.6M798.5 219.5l0.5-15.4M833.4 223.4l-17-2.4M833.4 223.4l-0.7 15.7M816.4 221.1l16.2 18M816.4 221.1l-17.4-17M832.6 239.1l9.6 18.1M780.8 188.5l18.2 15.6M780.8 188.5l-18.8-9.6M780.8 188.5l-18.7 4.7M799 204.1l-0.1-14.3M842.2 257.2l16.9 3.4M867.5 316.5l8.6-16.7M874.1 336.5l16.6 7M859.1 260.6l-7.4 15.7M890.7 304.4l-14.6-4.6M883.1 284.2l-6.9 15.6M876.1 299.8l-16-3.6M865 530.9l1.7-18M865 530.9l-14-7.1M866.7 512.9l-15.7 11M866.7 512.9l14.8-11.7M866.7 512.9l0.8-18.8M851 523.9l-17.3 17M881.5 501.2l-14-7.1M907.1 435.4l-14-7.1M907.1 435.4l-12.1 13.4M890.5 408.1l2.6 20.2M890.5 408.1l11.2-17M890.5 408.1l-3.9-24M893.1 428.3l1.9 20.4M895.7 469.1l-0.7-20.4M895.7 469.1l-14-7.1M895 448.8l-13.3 13.3M899.5 326.6l-8.7 16.9M901.6 391.1l-15-6.9M881.1 360.1l9.7-16.5M890.8 343.5l15.7 6.7M833.7 540.9l3.3 17.6M833.7 540.9l-12.3 16.6M837 558.5l-15.6-1M810.6 589.8l-2.5-16.3M810.6 589.8l-16.3-1.3M821.4 557.6l-13.3 16M808.1 573.5l-13.9 14.9M794.3 588.4l-15.3 14.5M794.3 588.4l-17.8-1.7M748 627.8l-2.5-14.4M779 603l-15.1 12.9M779 603l-2.5-16.3M763.9 615.9l-18.3-2.5M727 609.7l18.6 3.6M727 609.7l-19.3 12.5M745.5 613.3l-2.9-15.7M578.5 593.4l3.4 17.9M558.7 584.4l-17.4 2.8M564.3 614.3l17.6-3.1M585.3 625.1l-3.4-13.9M581.9 611.2l17.6-7.1M624.7 629.9l18.2-8.3M624.7 629.9l-3.5-16.2M642.9 621.6l-21.8-8M642.9 621.6l23.1 6.8M642.9 621.6l19.5-9.5M710.2 636.6l-2.5-14.5M704.8 606.5l2.9 15.7M707.7 622.2l-19.7 11.1M688 633.3l-22-4.9M666 628.4l-3.5-16.2M544.6 605.1l-3.4-17.9M441.4 489.9l13.2-1M454.6 488.9l-13-18.7M454.6 488.9l14.5 18.2M454.6 488.9l14.4-1.3M441.6 470.2l4.1-20.2M441.6 470.2l-9.1-19.3M484.7 524.4l-15.6-17.3M484.7 524.4l-14.6 1.5M484.7 524.4l17.4 17M469.1 507.1l1 18.7M469.1 507.1l-0.1-19.5M539 571.2l2.3 16M541.2 587.3l-16.3 4.7M503.7 558.6l16.3-1.8M503.7 558.6l-1.6-17.2M503.7 558.6l-15.8 3.5M503.7 558.6l2.2 18.9M445.7 450l-13.2 0.9M445.7 450l5.6-20.7M443.7 410l-8.8-20.1M443.7 410l-15.7 0.6M472.8 289.7l-2.8-16.8M472.8 289.7l-16.5-0.5M468 256.9l2 16M468 256.9l16.6 0.6M470 272.9l14.6-15.5M470 272.9l-13.6 16.3M484.6 257.4l17.1-2.4M484.6 257.4l15.2-18.5M443.9 305.9l12.4-16.8M443.9 305.9l3.9 20.5M434.9 389.9l-6.9 20.7M434.9 389.9l8.8-21.8M434.9 389.9l-7-21.1M464.4 326.9l-16.6-0.5M432.7 326.5l15.1-0.1M447.8 326.4l5.5 21.1M453.3 347.5l-9.7 20.6M443.6 368.1l-15.7 0.6M621.7 163.7l-19.1-2M621.7 163.7l-14.9 12.2M621.7 163.7l23 3.8M621.7 163.7l18.8-10.5M602.6 161.7l4.2 14.3M606.8 175.9l-18.3 13.1M569.3 173.8l-18.1 14.3M569.3 173.8l0.2 14.2M762 179l0.1 14.3M762 179l-19.5-9.1M664.3 171.8l-19.5-4.3M664.3 171.8l19-9.1M644.7 167.5l-4.2-14.3M684 177.2l-0.7-14.5M683.3 162.7l18.9-7.5M742.5 169.8l-20.1-8M742.5 169.8l-19.4 6.2M722.4 161.8l0.8 14.2M498.5 223l1.2 15.9M498.5 223l17.4-2.2M501.7 255l-2-16M499.7 239l16.1-18.1M588.5 189l-18.9-1M551.3 188.1l18.3-0.1M551.3 188.1l-18.1 15.6M569.6 188l0.9 15.4M515.9 220.8l18.3-1.4M515.9 220.8l17.3-17.1M534.2 219.4l-1-15.7"/>
<path stroke="#929200" d="M849 541.7l7.3 10.7M429.1 471l12.3 18.9M429.1 471l12.5-0.7M429.1 471l-2 19.6M429.1 471l-10.8-19.4M429.1 471l3.4-20M849 241.9l15.5 3.6M849 241.9l1.1-15.4M780.3 174.9l0.5 13.6M780.3 174.9l18.6 14.9M780.3 174.9l18 1.1M780.3 174.9l-1-12.5M780.3 174.9l-18.3 4M780.3 174.9l-19.2-9.9M906.8 495l-11.7-6.1M904.7 415l2.4 20.4M904.7 415l12.8 6.7M904.7 415l11.1-16.7M796.3 604.1l20.7-4.1M796.3 604.1l14.3-14.3M796.3 604.1l-14.9 13.3M796.3 604.1l5.6 10.5M796.3 604.1l-17.3-1.1M646.5 637l4.8 12.1M646.5 637l22 5.7M646.5 637l-21.8-7.2M646.5 637l-17.9 5.5M486.3 542.6l-16.1 2.1M429.6 306.3l14.3-0.3M429.6 306.3l11.7-17M429.6 306.3l3.1 20.2M483 241.7l-0.7-15M483 241.7l-15.9-0.9M483 241.7l-14.9 15.2M483 241.7l15.5-18.6M551.2 174.3l-17.5 1.6M551.2 174.3l18.1-0.5M551.2 174.3l14.1-13.5M551.2 174.3l-18.5 14.9M551.2 174.3l0 13.8M701.2 142.8l20.3 6.2M701.2 142.8l-18.8 6.7M701.2 142.8l1 12.4M816.6 206l16.7 17.4M816.6 206l-17.7-16.2M816.6 206l17.3 2.5M816.6 206l-0.1-14.4M850.4 212l-0.2 14.5M879.1 249.9l-14.6-4.3M879.1 249.9l-4.9 14.6M897 289.1l-8.3-19.9M897 289.1l-6.3 15.3M897 289.1l-13.9-4.9M897 289.1l9.5 21.9M880 519.6l-15 11.4M880 519.6l1.5-18.4M880 519.6l14-12M880 519.6l-7.9 21.8M880 519.6l6.9 10.2M908.2 455.6l-1.1-20.2M908.2 455.6l10.9-13.6M908.2 455.6l-0.1 19.9M908.2 455.6l-12.6 13.5M908.2 455.6l-13.2-6.9M914.4 333.5l-14.9-6.9M914.4 333.5l-7.9-22.5M914.4 333.5l-7.9 16.7M925.3 381.5l-9.5 16.7M925.3 381.5l-13.4-7.2M862.8 562.3l-6.4-9.9M862.8 562.3l-18.7 6.7M824.2 574.6l19.9-5.6M824.2 574.6l6.7 10.4M824.2 574.6l-13.6 15.2M766 629.5l15.4-12.2M766 629.5l-18-1.8M766 629.5l-2.2-13.7M729.6 624.8l18.4 3M729.6 624.8l2.3 13.6M729.6 624.8l-19.4 11.9M690.4 646.9l-22-4.2M690.4 646.9l19.7-10.2M690.4 646.9l-2.4-13.6M567.9 627.8l-3.6-13.4M567.9 627.8l17.4-2.7M567.9 627.8l21.3 10.2M567.9 627.8l-19.9-8.8M610.9 646.7l-4.1-12.1M610.9 646.7l17.7-4.2M603.1 621.2l-17.8 3.9M603.1 621.2l3.8 13.3M528.7 609l15.9-3.9M528.7 609l19.3 9.9M528.7 609l-3.9-17.1M455.1 508.2l-13.7-18.3M455.1 508.2l-15 1M455.1 508.2l-0.5 19.3M490.7 580.3l-2.8-18.3M490.7 580.3l15.2-2.8M455.4 545.9l14.8-1.1M409 431.9l13.4-0.5M437.4 430.6l-15 0.8M454.1 272.7l13.9-15.9M454.1 272.7l2.2 16.5M454.1 272.7l-12.8 16.5M454.1 272.7l-14.8 0.2M454.1 272.7l-1.4-16.3M420 390.5l14.9-0.6M420 390.5l8 20.1M420 390.5l-6.3 20.7M420 390.5l-13.3 0.7M420 390.5l7.9-21.8M420 390.5l-6.4-21.1M437.4 347.2l-15.1 0.5M617.6 150.2l4.1 13.5M617.6 150.2l-15 11.4M617.6 150.2l-19-1.4M617.6 150.2l22.9 2.9M617.6 150.2l18.9-10M587.9 174.3l-4.2-13.6M741.5 156.4l-20-7.5M741.5 156.4l19.6 8.7M741.5 156.4l1 13.4M741.5 156.4l-19.1 5.4M663.6 157.8l18.9-8.3M663.6 157.8l-23.1-4.6M663.6 157.8l-4-13.8M515.1 205.5l-16.6 17.5M515.1 205.5l-16.8 3M515.1 205.5l0.5-14M515.1 205.5l17.6-16.3M833.4 223.4l16.8 3.1M833.4 223.4l0.6-14.9M780.8 188.5l18.1 1.3M798.9 189.8l-0.6-13.8M798.9 189.8l17.6 1.8M864.6 245.5l0.8-15.1M864.6 245.5l-14.4-19M864.6 245.5l-5.5 15M864.6 245.5l9.7 18.9M865.4 230.4l-15.2-3.9M850.2 226.6l-16.2-18M798.3 176l18.2 15.6M779.3 162.4l-18.1 2.7M833.9 208.5l-17.4-17M888.6 269.1l-14.4-4.7M888.6 269.1l-5.6 15.1M859.1 260.6l15.2 3.9M874.3 264.5l8.8 19.7M890.7 304.4l-7.6-20.1M890.7 304.4l8.8 22.3M890.7 304.4l15.7 6.7M865 530.9l-8.6 21.4M865 530.9l7.1 10.5M895.1 488.9l-13.6 12.2M895.1 488.9l-1.2 18.6M895.1 488.9l13-13.4M895.1 488.9l0.6-19.8M881.5 501.2l12.5 6.4M907.1 435.4l12 6.7M907.1 435.4l10.4-13.7M919.1 442.1l-1.6-20.4M917.5 421.7l-1.7-23.5M908.2 475.5l-12.5-6.4M899.5 326.6l6.9-15.6M899.5 326.6l7 23.6M901.6 391.1l14.2 7.2M901.6 391.1l10.4-16.8M915.9 398.2l-3.9-24M906.5 350.2l5.5 24.1M906.5 350.2l14.2 7.2M912 374.3l8.7-16.9M856.4 552.3l15.7-11M856.4 552.3l-19.3 6.2M856.4 552.3l-12.3 16.7M837 558.5l7 10.5M844.1 569l-13.2 16M844.1 569l6.1 9.8M817 599.9l13.8-14.9M817 599.9l-6.4-10.1M830.9 585l-20.3 4.8M750.1 640.6l-2.1-12.9M781.4 617.3l20.5-2.8M781.4 617.3l-2.4-14.4M781.4 617.3l-17.6-1.5M748 627.8l-16.1 10.6M748 627.8l15.8-11.9M731.9 638.4l-21.7-1.8M712.3 649.5l-2.1-12.8M651.3 649.2l17.2-6.4M651.3 649.2l-22.7-6.7M673.3 654.1l-4.9-11.3M668.5 642.7l19.5-9.5M668.5 642.7l-2.5-14.3M564.3 614.3l21 10.8M564.3 614.3l-19.7-9.2M564.3 614.3l-16.3 4.6M585.3 625.1l3.9 12.9M585.3 625.1l21.6 9.5M589.2 638l17.7-3.4M624.7 629.9l-17.8 4.7M624.7 629.9l3.9 12.6M606.9 634.6l21.8 8M710.2 636.6l-22.2-3.4M544.6 605.1l3.4 13.9M544.6 605.1l-19.7-13.2M441.4 489.9l0.2-19.6M441.4 489.9l-14.3 0.6M441.4 489.9l-1.3 19.4M470.1 525.8l-15.5 1.7M470.1 525.8l0.1 19M524.9 591.9l-19.1-14.5M524.9 591.9l-15.7 3.4M487.9 562l17.9 15.4M487.9 562l-17.7-17.2M487.9 562l-15.5 1.7M505.8 577.4l3.4 17.9M440.1 509.2l14.5 18.2M454.6 527.5l15.6 17.3M470.2 544.8l2.2 18.9M418.3 451.6l14.3-0.6M418.3 451.6l4.1-20.2M432.5 450.9l-10.2-19.6M482.2 226.7l-15.2 14.1M482.2 226.7l16.3-3.6M482.2 226.7l16.1-18.1M467 240.8l1 16M467 240.8l-14.3 15.7M468 256.9l-15.3-0.4M443.9 305.9l-2.6-16.7M443.9 305.9l-11.2 20.6M456.3 289.2l-15 0.1M441.3 289.2l-2-16.3M422.3 431.3l5.6-20.7M422.3 431.3l-8.7-20.1M427.9 410.6l-14.3 0.6M432.7 326.5l-14.3 0.6M432.7 326.5l-10.4 21.2M418.5 327.1l3.9 20.5M427.9 368.7l-5.5-21.1M427.9 368.7l-14.3 0.6M422.4 347.6l-8.8 21.8M533.7 175.9l-1 13.4M602.6 161.7l-4-12.9M602.6 161.7l-18.9-0.9M598.6 148.8l-15 11.9M569.3 173.8l14.3-13.1M569.3 173.8l-4-13M583.7 160.7l-18.3 0.1M762 179l-0.9-13.9M721.5 149l-19.4 6.2M721.5 149l0.9 12.8M759.9 152.9l1.2 12.2M761.2 165.1l-18.7 4.7M682.4 149.5l0.9 13.2M682.4 149.5l19.7 5.6M682.4 149.5l-4-13.1M682.4 149.5l-22.8-5.5M702.2 155.1l20.3 6.7M640.5 153.2l19.1-9.2M640.5 153.2l-4-12.9M659.6 144l-23-3.8M498.5 223l-0.2-14.5M498.3 208.6l17.3-17M515.6 191.5l17.1-2.3M532.7 189.3l18.5-1.1M532.7 189.3l0.4 14.5"/>
<path stroke="#242400" d="M598.6 683l16.6 5.4M598.6 683l-6.1 1.7M880.8 603.6l13.5-17.1M880.8 603.6l-0.5-4.5M880.8 603.6l13.5-12.2M880.8 603.6l-14.9 15.8M880.8 603.6l-14.8 10.9M454.4 604.7l9.5 11.9M454.4 604.7l15.3 13.9M454.4 604.7l-14.3-14.9M454.4 604.7l9.5 4.1M454.4 604.7l-8.1-13.2M600.4 103.3l-21.1 4.6M600.4 103.3l-16.3 6M600.4 103.3l21.6-2.8M600.4 103.3l1.9 3.5M757.7 108.4l4.5 3.8M834.5 146.3l-14-6M834.5 146.3l5.1 7.5M834.5 146.3l19.4 14.7M904 214.1l8.4 7.8M904 214.1l-4-9M904 214.1l11.8 17.7M904 214.1l-15.3-19.1M943.2 289.4l6.3 8.6M943.2 289.4l-0.7-11M964.6 383.1l1-14.5M964.6 383.1l-2.5-23.9M964.6 383.1l2.9 4.7M964.6 383.1l1.3 19.9M737.1 682.7l-17.5 5.7M737.1 682.7l-0.2 3.7M737.1 682.7l20.4-3.4M521 653.7l12.6 9.6M521 653.7l18.6 9.3M521 653.7l-17.9-10.5M521 653.7l-6.6-0.5M404.1 539.7l-5.9-16.2M404.1 539.7l4.6 2.5M369.5 388.1l-3 4.7M369.5 388.1l-1.1 19.1M369.5 388.1l2.5-19M369.5 388.1l-1.3-15.3M461.4 178.4l-10.7 14.6M461.4 178.4l4.6 0.6M461.4 178.4l-15.2 14.5M461.4 178.4l17.4-13.1M461.4 178.4l13.1-13.4M797.4 124.6l4.4 5M797.4 124.6l-15.2-4.5M766.3 117.4l-4.1-5.2M926.3 250.2l-10.5-18.5M926.3 250.2l-2.5-10.4M926.3 250.2l7.6 8.6M872 177.3l-18.1-16.3M872 177.3l16.7 17.7M872 177.3l4.1 9.3M872 177.3l-13.5-7.9M957.7 335.5l-0.9-14.4M957.7 335.5l4.5 9.3M957.7 335.5l4.4 23.7M957.1 452.2l5-14.5M957.1 452.2l2.7 5.2M965.7 422.9l-3.6 14.7M965.7 422.9l-2.8-5.3M965.7 422.9l0.2-19.9M906.5 568.3l0.8 5.4M906.5 568.3l12.4-13.6M947.2 496.8l-9.6 16.4M947.2 496.8l5.8-22.1M947.2 496.8l7.7-17M947.2 496.8l-7.8 22.1M947.2 496.8l0.9 5.2M929.7 540.2l-10.8 14.6M929.7 540.2l-0.8-5.2M929.7 540.2l9.7-21.3M849.9 633.7l0.6-4M632 692.5l-16.8-4M632 692.5l-0.1-3.8M632 692.5l17-0.2M666.1 690.8l-0 3.8M666.1 690.8l-17.1 1.6M666.1 690.8l18 1.7M702 692.5l17.7-4.2M702 692.5l-17.9-0.1M702 692.5l0.1-3.8M816.5 651.9l17.2-8.3M816.5 651.9l-0.5 3.9M816.5 651.9l-19.2 12M777.2 674l-19.8 5.3M777.2 674l0.4-3.9M777.2 674l20.1-10.2M558.7 671l13.7 8M558.7 671l-6.1 0.8M486 631.5l-6.2-1.6M486 631.5l-16.2-12.8M486 631.5l17.1 11.7M486 631.5l10.8 10.7M427 573.9l13.2 15.9M427 573.9l-12-16.7M427 573.9l5.7 2.1M427 573.9l-7-14.5M394 506.4l-4.5-1.6M379.6 467.7l2.4 17.8M379.6 467.7l-3.6-1.8M379.6 467.7l-6.4-20.5M368.8 426.2l-0.4-19M368.8 426.2l4.4 20.9M368.8 426.2l3.1 1.8M377 319.5l4.5-3.5M377 319.5l-1.3 15.2M377 319.5l7.8-22M375.9 350.2l-4.7 3.6M432.2 208.4l14-15.5M432.2 208.4l4-0.3M432.2 208.4l-9.4 16.1M415 241.7l-4.3-0.1M394.5 276.2l5.9-17.4M394.5 276.2l9.6-17.6M394.5 276.2l-9.7 21.3M394.5 276.2l-4.7 3.3M497.5 153.7l-4.9-1.1M527.3 130.9l15.4-9M527.3 130.9l20.1-8M527.3 130.9l5 1.5M527.3 130.9l-15.3 10.7M527.3 130.9l-19.9 10.1M568.2 116.6l-5.1-1.9M643.8 99.6l-21.8 0.9M643.8 99.6l-5-2.8M643.8 99.6l17.1-2.9M678 95.4l4.9 3.2M678 95.4l-17.1 1.4M678 95.4l22.8 2.7M723.3 102.8l17.4 2M723.3 102.8l21.8 6.4M723.3 102.8l-22.6-4.7M723.3 102.8l-4.8-3.6M816.4 134.8l-14.6-5.2M816.4 134.8l4.1 5.5M801.8 129.5l18.7 10.7M801.8 129.5l-19.6-9.4M820.5 140.2l19.2 13.6M762.2 112.2l20 7.9M762.2 112.2l15.6 3.6M762.2 112.2l-21.6-7.3M762.2 112.2l-17.2-3M782.2 120.1l-4.4-4.3M949.5 297.9l-7-19.5M949.5 297.9l1.9 14.2M949.5 297.9l7.3 23.1M942.6 278.4l-7.1-8.9M942.6 278.4l-8.7-19.5M912.4 221.8l3.4 9.9M900 205.1l-11.3-10.1M935.4 269.5l-1.5-10.6M915.8 231.7l8 8.1M839.6 153.8l14.2 7.2M892.1 205.1l-3.4-10.1M853.9 161l4.6 8.4M888.7 195l-12.6-8.4M951.4 312.2l5.4 8.9M956.8 321l5.4 23.7M965.7 368.6l-3.5-23.9M965.7 368.6l-3.5-9.5M962.2 344.7l-0.1 14.4M962.2 397.6l3.8 5.4M963.9 442.7l-1.8-5M962.1 437.7l-2.3 19.7M962.1 437.7l0.8-20.1M959.8 457.4l-6.7 17.4M959.8 457.4l-4.9 22.4M962.9 417.6l3-14.6M894.4 586.5l-0 4.8M894.4 586.5l12.9-12.8M937.6 513.2l1.7 5.7M953 474.7l1.8 5M907.3 573.7l11.6-19M918.9 554.7l10-19.8M928.9 534.9l10.5-16M866 619.3l0-4.8M866 619.3l-15.4 10.4M866 614.5l-15.5 15.2M615.2 688.5l16.7 0.3M615.2 688.5l-22.7-3.7M615.2 688.5l-6 1.3M631.9 688.8l17.1 3.6M666.1 694.5l-17.1-2.1M666.1 694.5l18-2.1M649 692.4l-0 2.8M719.7 688.4l-0.5 2.8M719.7 688.4l17.2-2M719.7 688.4l-17.6 0.4M736.9 686.4l20.6-7.1M684.1 695.2l0-2.8M684.1 692.4l18-3.7M850.5 629.7l-16.8 9.1M850.5 629.7l-16.8 13.9M833.7 638.8l-0 4.8M815.9 655.8l-18.6 8.1M757.5 679.3l20.2-9.1M797.3 659.1l-0 4.8M777.6 670.2l19.7-6.3M592.5 684.8l-14-7.1M592.5 684.8l-20.1-5.8M578.4 677.7l-6.1 1.3M572.4 679l-19.8-7.2M533.6 663.4l19 8.5M533.6 663.4l6-0.3M552.6 671.8l-13.1-8.8M463.9 616.6l5.8 2.1M479.8 629.9l-10.1-11.3M469.7 618.6l-5.8-9.9M503.1 643.2l-6.3-1M503.1 643.2l11.3 10M394.5 521.6l3.6 1.9M394.5 521.6l-5.1-16.7M440.2 589.8l6.1 1.8M440.2 589.8l-7.5-13.8M414.9 557.2l5.1 2.3M414.9 557.2l-6.3-15M382 485.5l-6-19.6M382 485.5l7.4 19.3M382 485.5l4.1 1.8M376 465.9l-2.8-18.8M398.2 523.5l-8.7-18.6M398.2 523.5l10.5 18.7M389.4 504.9l-3.3-17.6M420 559.5l-11.3-17.2M370.6 445.1l2.7 2M366.5 392.8l1.9 14.4M368.4 407.2l3.5 20.8M368.4 407.2l3.6 1.7M381.5 316l-5.9 18.6M381.5 316l3.2-18.5M375.7 334.7l-3.7 3.7M375.7 334.7l-4.5 19.1M372 338.4l-0.8 15.3M372 369.1l-0.8-15.3M372 369.1l-3.8 3.7M371.2 353.8l-3 19.1M450.7 193l-4.5-0.1M419.4 224.9l-8.6 16.7M419.4 224.9l3.4-0.4M446.2 192.9l-10 15.3M390.3 294.3l-5.5 3.2M400.3 258.8l3.8-0.2M400.3 258.8l10.5-17.2M404.1 258.6l6.7-17M410.8 241.6l12-17.1M436.2 208.2l-13.4 16.3M384.8 297.5l5-18M373.2 447.1l4.1 1.7M373.2 447.1l-1.3-19.1M478.8 165.3l-4.3-0.3M478.8 165.3l13.8-12.7M579.3 107.9l-16.1 6.8M579.3 107.9l4.9 1.4M563.2 114.7l20.9-5.4M563.2 114.7l-20.5 7.2M563.2 114.7l-15.8 8.2M542.7 121.9l4.7 1M474.5 165l18.1-12.4M512 141.6l-4.5-0.6M512 141.6l-19.4 10.9M507.5 141l-14.9 11.6M617 98.8l4.9 1.8M621.9 100.6l16.8-3.7M621.9 100.6l-19.6 6.3M638.7 96.9l22.1-0.1M682.9 98.5l-22-1.8M682.9 98.5l17.8-0.4M660.9 96.8l-5-2.2M740.7 104.9l4.4 4.3M705.6 102.3l-4.9-4.1M700.7 98.1l17.8 1.1"/>
<path stroke="#373700" d="M598.6 683l16.6 0.7M598.6 683l-6.1-6M598.6 683l-20.1-5.3M387.8 313l-6.3 3M387.8 313l2.5-18.7M904 214.1l2.5 10.1M904 214.1l-11.8-9M943.2 289.4l-7.8-19.9M943.2 289.4l-7.6-8.1M943.2 289.4l8.2 22.8M943.2 289.4l1.1 14.1M964.6 383.1l-4.2-8.9M964.6 383.1l-2.5 14.5M926.3 528.7l-9.1 20.3M926.3 528.7l11.4-15.6M926.3 528.7l2.6 6.2M737.1 682.7l-0.2-5.5M737.1 682.7l-17.4 0.9M737.1 682.7l20.4-8.2M521 653.7l12.7 1.9M521 653.7l-6.5-8.3M369.5 388.1l2.5 20.8M369.5 388.1l4.2 0.9M537.9 135.2l-5.6-2.8M687.7 103.2l-4.9-4.7M687.7 103.2l-22-2.7M687.7 103.2l17.9-1M805.5 135.8l-19.3-9.9M805.5 135.8l-3.7-6.2M805.5 135.8l15 4.5M805.5 135.8l19.5 12.8M766.3 117.4l19.9 8.5M766.3 117.4l3.6 6.5M766.3 117.4l15.9 2.7M766.3 117.4l-17.4-2.4M766.3 117.4l-21.3-8.2M926.3 250.2l9.2 19.2M926.3 250.2l1 11.4M926.3 250.2l-8.7-7.8M843.6 163l-18.6-14.4M843.6 163l-4-9.2M843.6 163l14.8 6.4M878.8 197.3l13.3 7.7M878.8 197.3l-2.7-10.7M957.7 335.5l-6.3-23.3M957.7 335.5l-6.1-8.9M957.7 335.5l-0.7 14.9M958.3 412.1l3.9-14.5M958.3 412.1l0.2 20.1M958.3 412.1l4.6 5.5M957.1 452.2l-4.5-5.5M957.1 452.2l1.4-19.9M957.1 452.2l-7.7 17.1M957.1 452.2l-4 22.6M906.5 568.3l-12.1 18.2M906.5 568.3l-13.3 13.1M906.5 568.3l-1.7-5.8M906.5 568.3l10.7-19.3M878.8 593.5l1.5 5.5M947.2 496.8l-2.9-5.2M849.9 624.1l15-14.7M849.9 624.1l16.1-9.6M849.9 624.1l0.6 5.6M849.9 624.1l-16.2 14.7M666.1 690.8l-17.1-3.2M666.1 690.8l0-5.7M666.1 690.8l18-3.1M632 683l-0.1 5.7M702 683.1l0.1 5.7M816.5 651.9l-0.5-5.6M816.5 651.9l17.3-13.1M816.5 651.9l-19.1 7.2M777.3 664.4l-19.8 10.1M777.3 664.4l20-5.4M777.3 664.4l0.4 5.7M558.7 671l19.7 6.7M558.7 671l-19.2-8M558.7 671l13.7 0.3M558.7 671l-6.1-6.9M486 631.5l-6.1-9.4M486 631.5l10.8 2.9M474.7 611.5l5.2 10.6M474.7 611.5l-10.7-2.7M394 506.4l4.2 17.1M394 506.4l-7.9-19.2M394 506.4l-2.4-17.8M394 506.4l9.6 19.1M394 506.4l6.3 1.5M379.6 467.7l5 1.4M379.6 467.7l6.5 19.6M379.6 467.7l-2.3-18.9M439.5 577.2l6.8 14.4M439.5 577.2l-6.9-1.2M414.6 544l11.9 17M414.6 544l5.4 15.5M414.6 544l-5.9-1.7M414.6 544l-11-18.4M375.9 350.2l-0.2-15.5M375.9 350.2l5.3-18.7M375.9 350.2l-3.9 18.9M375.9 350.2l5.4 0.8M375.9 350.2l0.8 19.8M471.5 180.6l-5.5-1.6M441.5 208.9l9.3-15.9M441.5 208.9l-5.2-0.7M441.5 208.9l-13.8 15.9M415 241.7l5.6 0.9M415 241.7l-5.8 17.5M415 241.7l-10.9 16.9M415 241.7l7.8-17.2M415 241.7l12.6-16.8M394.5 276.2l4.6 0.3M394.5 276.2l-4.2 18.1M376.4 429.6l0.9 19.2M376.4 429.6l-4.5-1.6M376.4 429.6l-4.4-20.7M497.5 153.7l19.7-10M497.5 153.7l5.9 2M497.5 153.7l-13.4 12.9M497.5 153.7l-18.6 11.6M497.5 153.7l14.5-12M568.2 116.6l15.9-7.3M568.2 116.6l-15.4 8.7M568.2 116.6l-20.8 6.3M568.2 116.6l18-3M568.2 116.6l2.2 5.3M643.8 99.6l22 0.9M643.8 99.6l-19.7 5.3M643.8 99.6l2.5 5.2M723.3 102.8l4.1 4.9M723.3 102.8l-17.7-0.6M604.7 112.1l-2.3-5.3M789.6 132.9l-3.4-7M786.2 125.9l-16.3-2M786.2 125.9l15.6 3.7M786.2 125.9l-4-5.8M820.5 140.2l4.6 8.4M935.4 269.5l-8.1-7.9M935.4 269.5l0.2 11.8M927.3 261.6l8.3 19.7M927.3 261.6l-9.8-19.2M906.5 224.2l11 18.2M906.5 224.2l9.3 7.6M906.5 224.2l-14.4-19.1M917.5 242.4l-1.8-10.7M825 148.6l14.6 5.2M839.6 153.8l18.8 15.5M892.1 205.1l1.7 10.7M892.1 205.1l-16-18.5M861.9 179.4l14.2 7.2M861.9 179.4l-3.4-10.1M876.1 186.6l-17.7-17.2M951.4 312.2l-7.1-8.6M951.4 312.2l0.2 14.5M962.1 359.2l-1.7 15.1M962.1 359.2l-5.1-8.8M944.3 303.5l7.3 23.1M960.5 374.2l-3 14.5M960.5 374.2l1.7 23.4M960.5 374.2l-3.5-23.9M957.4 388.8l4.7 8.8M962.2 397.6l0.8 20M951.6 326.6l5.4 23.7M952.6 446.7l5.8-14.4M958.4 432.2l3.7 5.4M958.4 432.2l4.5-14.7M894.4 586.5l-1.1-5.1M894.4 586.5l-14 12.5M893.2 581.4l-12.9 17.6M893.2 581.4l11.5-18.9M880.3 599l-15.4 10.3M880.3 599l-14.3 15.5M904.8 562.5l12.4-13.5M917.2 549l1.7 5.7M917.2 549l11.7-14.1M933.8 507.7l3.8 5.5M949.3 469.3l-5 22.4M949.3 469.3l3.7 5.5M937.6 513.2l6.7-21.5M937.6 513.2l-8.8 21.8M944.3 491.7l8.7-16.9M864.9 609.4l1.1 5.1M832.7 632.3l1 6.5M615.2 688.5l0-4.8M631.9 688.8l-16.7-5M631.9 688.8l17.1-1.1M615.2 683.7l-22.7-6.7M649 692.4l0-4.8M719.7 688.4l0-4.8M736.9 677.2l-17.2 6.4M736.9 677.2l20.6-2.7M719.7 683.6l-17.6 5.2M684.1 692.4l0-4.8M702.1 688.8l-18-1.1M816 646.3l17.7-7.5M816 646.3l-18.7 12.8M757.5 674.5l-0 4.8M757.5 674.5l20.1-4.3M797.3 659.1l-19.7 11.1M592.5 677.1l-14 0.6M578.4 677.7l-6-6.4M539.5 663l13.1 1.1M539.5 663l-5.9-7.4M469.7 618.6l10.1 3.5M503.1 643.2l11.4 2.2M503.1 643.2l-6.3-8.8M572.4 671.3l-19.8-7.2M552.7 664.1l-19-8.5M533.6 655.6l-19.2-10.2M479.8 622.1l-15.9-13.3M479.8 622.1l17 12.3M463.9 608.8l-17.6-17.2M463.9 608.8l-7.6-13.7M514.4 645.4l-17.6-11M398.2 523.5l5.4 2M384.6 469.1l1.5 18.2M384.6 469.1l-7.3-20.3M386.1 487.3l5.5 1.4M446.3 591.6l-13.7-15.5M446.3 591.6l10.1 3.5M432.6 576l-6.2-15M432.6 576l-12.6-16.6M426.4 561l-6.5-1.5M408.7 542.2l-5.1-16.7M403.6 525.5l-3.3-17.6M381.5 316l-0.4 15.4M381.5 316l8.7-21.7M375.7 334.7l5.5-3.2M372 369.1l1.7 19.9M372 369.1l4.7 0.9M450.7 193l5.2 1.3M450.7 193l15.2-14M450.7 193l-14.5 15.2M456 194.2l10-15.3M466 179l18.1-12.4M466 179l12.9-13.7M399.1 276.5l-8.8 17.8M399.1 276.5l10.2-17.4M399.1 276.5l5-17.9M409.3 259.2l-5.2-0.6M436.2 208.2l-8.6 16.7M422.8 224.5l4.8 0.3M382.8 450.1l-5.4-1.3M377.3 448.8l-5.4-20.8M371.9 428l0.1-19.1M372 408.9l1.7-19.9M372 408.9l5.2 0.9M373.7 389l3-19M517.2 143.6l15.1-11.2M517.2 143.6l-5.2-2M484 166.5l-5.2-1.3M584.1 109.3l2.1 4.3M584.1 109.3l18.2-2.4M552.8 125.3l-5.4-2.4M552.8 125.3l-20.5 7.1M547.4 122.9l-15.1 9.5M532.3 132.4l-20.3 9.2M621.9 100.6l2.1 4.3M682.9 98.5l-17.1 2M682.9 98.5l22.7 3.7M660.9 96.8l4.9 3.7M665.8 100.5l-19.5 4.3M749 114.9l-3.9-5.7M749 114.9l-21.6-7.2M745 109.2l-17.7-1.5M709.6 107.7l17.8-0M709.6 107.7l-4-5.4M727.4 107.7l-21.8-5.4M586.2 113.6l16.1-6.8M602.3 106.8l21.7-1.9M624.1 104.9l22.2-0.1"/>
<path stroke="#000000" d="M373.8 463.7l2.2 9.8M373.8 463.7l-3.2-13.9M960.6 462.2l-0.9 4.4M960.6 462.2l3.3-14.7M960.6 462.2l-5.8 22.4M814.4 658l18.2-11.4M814.4 658l-18.2 8.9M666.1 696.3l17.1-0.3M666.1 696.3l-22.8-0.8M407.8 242.3l-2.6 3.3M519.6 132l3.5-1.2M519.6 132l19.1-9.7M519.6 132l-15.9 9.7M667.9 93.7l5 0.1M825.4 138.7l5 3.2M859.4 162.9l-11.9-9.1M859.4 162.9l6.9 6.5M940.1 268.2l-4.2-9.4M940.1 268.2l4.5 9.2M894.6 197.2l13.1 16.2M919.5 230.5l-11.9-17.1M919.5 230.5l11 18.5M965.3 354.3l-1.8-14.1M965.3 354.3l1 4.6M968.5 392.4l-0.9-19.1M968.5 392.4l-0.6 15.3M878.7 609.6l1.6-2.5M878.7 609.6l14.4-15.4M878.7 609.6l-13.9 12.6M906.4 577.9l-13.3 16.4M906.4 577.9l10.6-14.6M906.4 577.9l-1.7 2.3M947.1 506.4l7.7-21.8M947.1 506.4l-7.8 17.3M947.1 506.4l1-4.5M736.2 688.3l-17.9 3.8M736.2 688.3l19.9-5.3M586.7 685.1l-5.4-1.1M620.6 692.8l5.6 0.6M547.1 671.3l14.3 6.1M547.1 671.3l-5.6-2.2M474.6 627.1l16.6 12.7M474.6 627.1l-18.3-16.4M508.6 651.3l-17.4-11.5M508.6 651.3l13.5 7.9M386.2 502.8l-4.3-9.6M414.5 559.5l-5.9-9.5M414.5 559.5l5.5 7.7M439.4 592.8l-6.8-8.9M439.4 592.8l6.8 6.6M439.4 592.8l16.9 17.9M365.5 397.6l0.9 14.4M365.5 397.6l0.6-20M368.4 357.6l1.7-15M368.4 357.6l-1 4.6M455.3 180.4l2.6-1.5M455.3 180.4l-12.2 13.4M455.3 180.4l16.1-14.5M386.9 283.6l9.6-21.1M558.7 114.2l-1.3-0M488.7 152.7l-2.7 1.2M633.9 95.6l-18.2 2.3M633.9 95.6l-1-0M633.9 95.6l17-1.7M597.8 101.7l1.1-0.1M713.4 97.2l-22.7-2.7M713.4 97.2l17.1 3.1M713.4 97.2l22.4 4.7M772.6 112.6l-19.9-6.7M772.6 112.6l19.9 8.3M752.7 106l-16.9-4.1M847.5 153.9l-4.7-3.7M842.8 150.2l-12.5-8.4M830.4 141.8l-18.5-11.1M792.5 120.9l19.4 9.8M952.1 296.8l6 19.6M952.1 296.8l-4.1-9.5M958.1 316.4l5.4 23.7M935.9 258.8l-5.4-9.8M944.6 277.4l3.4 9.9M925.4 240l5.1 9M877.7 179.4l-11.4-10M877.7 179.4l6.2 7.3M960.8 330.4l2.6 9.7M966.2 358.9l1.4 14.4M963.9 442.7l-0 4.8M963.9 447.4l2.8-19.7M967.9 407.7l-1.2 20.1M967.9 407.7l-0 4.8M917.1 563.3l1.8-3.8M928.8 544.4l10.5-20.7M937.6 527.5l1.8-3.8M864.8 622.3l-16.8 13.8M864.8 622.3l-2.2 1.9M830.3 648.3l2.4-1.7M848 636.1l-15.4 10.5M795.3 667.7l1-0.8M718.3 692.1l0.9-1M718.3 692.1l-17.2 2.3M683.1 696.1l18-1.7M683.1 696.1l0.9-0.9M756.1 683l20.6-7.2M756.1 683l0.9-0.9M603.5 689.7l-22.2-5.6M603.5 689.7l22.7 3.7M581.3 684l-14.7-5.2M626.2 693.4l17.1 2.1M566.6 678.9l-5.3-1.5M527.5 662l-5.4-2.7M527.5 662l14 7.1M375.9 473.6l3.4 9.9M381.9 493.2l-2.6-9.8M381.9 493.2l7.4 19.4M389.4 512.6l8.7 18.6M398.1 531.2l10.5 18.8M432.6 583.8l-6.2-7.3M419.9 567.3l6.4 9.3M370.5 449.9l0-4.8M370.5 449.9l-2.8-18.8M366.4 411.9l-0 4.8M370.1 342.6l4.2-19.1M374.3 323.4l4.9-18M366.2 377.5l1.2-15.3M440.8 195.7l-11.5 14.1M440.8 195.7l2.2-1.9M429.3 209.8l-12.4 16.9M416.9 226.7l-11.7 18.9M396.4 262.5l8.7-16.9M381 301.2l-1.9 4.2M538.7 122.3l18.6-8.1M471.4 165.8l14.6-11.9M486 153.9l17.7-12.2M615.7 97.9l-16.8 3.7M598.9 101.6l-21 5.4M650.9 93.9l22.1-0.2M690.8 94.4l-17.8-0.7M690.8 94.4l5 1M730.5 100.3l5.3 1.5"/>
<path stroke="#121200" d="M373.8 463.7l5.6 19.7M373.8 463.7l2.2 2.1M373.8 463.7l-3.2-18.6M880.8 603.6l-0.5 3.5M454.4 604.7l-8.2-5.3M600.4 103.3l16.6-4.6M600.4 103.3l-1.5-1.7M757.7 108.4l15 4.3M757.7 108.4l-5-2.4M757.7 108.4l20.2 7.4M757.7 108.4l-21.9-6.6M757.7 108.4l-17-3.5M834.5 146.3l-18.2-11.5M834.5 146.3l13 7.6M834.5 146.3l-4.1-4.5M960.6 462.2l3.3-19.5M960.6 462.2l-0.9-4.8M960.6 462.2l-5.8 17.6M814.4 658l1.5-2.2M666.1 696.3l0-1.8M666.1 696.3l-17.1-1.2M666.1 696.3l18-1.1M404.1 539.7l-9.6-18.2M404.1 539.7l-6-8.5M404.1 539.7l4.5 10.3M404.1 539.7l10.8 17.5M461.4 178.4l-3.6 0.5M407.8 242.3l11.6-17.4M407.8 242.3l9.1-15.6M407.8 242.3l-7.5 16.5M407.8 242.3l3-0.7M407.8 242.3l-11.4 20.2M797.4 124.6l18.9 10.2M797.4 124.6l-19.6-8.8M797.4 124.6l-4.9-3.6M797.4 124.6l14.5 6.2M940.1 268.2l7.9 19.1M940.1 268.2l2.5 10.2M940.1 268.2l-9.6-19.2M940.1 268.2l-6.2-9.3M954.5 307l-2.4-10.2M954.5 307l3.6 9.5M954.5 307l-4.9-9M954.5 307l-6.5-19.7M954.5 307l6.4 23.4M954.5 307l2.3 14.1M894.6 197.2l5.4 7.8M894.6 197.2l-10.6-10.6M919.5 230.5l-7.1-8.7M919.5 230.5l4.2 9.4M872 177.3l-5.7-7.9M872 177.3l12 9.3M965.3 354.3l-4.4-23.9M965.3 354.3l0.4 14.3M965.3 354.3l-3.1-9.5M965.3 354.3l2.3 19M968.5 392.4l-1-4.7M965.7 422.9l-1.8 19.8M965.7 422.9l2.2-15.2M965.7 422.9l1 4.9M906.4 577.9l-12.1 13.4M906.4 577.9l0.8-4.2M906.4 577.9l12.4-18.4M929.7 540.2l-0.9 4.3M929.7 540.2l-10.8 19.4M929.7 540.2l9.6-16.4M849.9 633.7l16.1-14.4M849.9 633.7l14.9-11.4M849.9 633.7l-1.8 2.4M849.9 633.7l-17.2 12.9M849.9 633.7l-16.2 9.9M632 692.5l17 2.6M632 692.5l-22.8-2.7M632 692.5l-5.8 0.9M736.2 688.3l-17 2.9M736.2 688.3l0.7-1.9M736.2 688.3l20.8-6.2M702 692.5l17.3-1.4M702 692.5l-0.8 1.8M702 692.5l-17.9 2.7M777.2 674l19-7.1M777.2 674l-0.6 1.8M777.2 674l-20.2 8M586.7 685.1l5.8-0.3M586.7 685.1l22.5 4.7M586.7 685.1l16.8 4.6M586.7 685.1l-14.3-6.1M586.7 685.1l-20-6.2M547.1 671.3l-13.5-7.9M547.1 671.3l5.5 0.6M547.1 671.3l19.6 7.6M547.1 671.3l-19.6-9.3M474.6 627.1l-10.7-10.5M474.6 627.1l5.2 2.8M508.6 651.3l-11.9-9.2M508.6 651.3l5.8 1.9M508.6 651.3l18.9 10.7M386.2 502.8l-6.9-19.3M386.2 502.8l8.3 18.8M386.2 502.8l3.1 9.8M386.2 502.8l-4.3-17.2M386.2 502.8l3.2 2.1M427 573.9l5.6 9.9M427 573.9l-7-6.7M368.8 426.2l1.8 18.9M368.8 426.2l-1 4.9M368.8 426.2l-2.4-14.3M365.5 397.6l1-4.7M377 319.5l-5.1 18.9M377 319.5l-2.7 3.9M377 319.5l4-18.3M368.4 357.6l3.6-19.2M368.4 357.6l2.8-3.8M368.4 357.6l-0.2 15.2M368.4 357.6l-2.2 19.9M432.2 208.4l-12.8 16.5M432.2 208.4l-2.9 1.4M432.2 208.4l10.8-14.7M386.9 283.6l2.9-4.1M386.9 283.6l-5.8 17.7M558.7 114.2l20.6-6.3M558.7 114.2l4.5 0.5M558.7 114.2l-16 7.7M558.7 114.2l-19.9 8.1M558.7 114.2l19.3-7.2M527.3 130.9l-4.2-0.1M488.7 152.7l-14.1 12.2M488.7 152.7l-17.3 13.1M488.7 152.7l15-11M488.7 152.7l18.8-11.7M488.7 152.7l3.9-0.2M633.9 95.6l-16.8 3.1M633.9 95.6l4.9 1.2M633.9 95.6l22-1.1M713.4 97.2l-17.7-1.7M713.4 97.2l5.1 2M678 95.4l-22.1-0.8M678 95.4l-5-1.6M678 95.4l17.8 0.1M772.6 112.6l5.2 3.1M816.4 134.8l14 7.1M816.4 134.8l-4.5-4M777.8 115.8l14.7 5.2M847.5 153.9l-17.1-12M847.5 153.9l6.3 7.1M847.5 153.9l18.8 15.5M958.1 316.4l2.8 14M949.5 297.9l-1.5-10.6M948 287.3l-5.4-8.9M912.4 221.8l-4.7-8.4M912.4 221.8l-12.4-16.8M912.4 221.8l11.4 18M907.6 213.4l-7.6-8.4M900 205.1l-16-18.5M930.5 248.9l-6.8-9.1M930.5 248.9l3.4 9.9M923.7 239.8l10.1 19M853.9 161l12.5 8.4M866.3 169.4l17.6 17.2M884 186.6l4.8 8.4M960.8 330.4l-4.1-9.4M960.8 330.4l1.4 14.3M965.7 368.6l1.9 19.1M965.7 368.6l2 4.7M967.5 387.7l0.1-14.4M967.5 387.7l-1.6 15.3M967.5 387.7l0.3 20M963.9 442.7l-4.2 14.7M963.9 442.7l2.7-14.9M965.9 403l2 4.7M880.3 607.1l12.9-12.8M880.3 607.1l14-15.8M880.3 607.1l-14.3 12.2M880.3 607.1l-15.5 15.2M893.2 594.3l1.2-3M894.3 591.3l13-17.6M954.9 479.8l-0 4.8M954.9 479.8l-6.8 22.2M907.3 573.7l11.6-14.1M928.8 544.4l-9.9 15.1M918.9 559.6l0-4.8M954.8 484.6l-6.7 17.4M939.4 518.9l-0 4.8M939.4 518.9l8.7-16.9M939.3 523.7l8.8-21.8M866 619.3l-1.1 2.9M832.7 646.6l1-3M832.7 646.6l-16.7 9.2M666.1 694.5l-17.1 0.6M666.1 694.5l18 0.7M649 695.1l-22.8-1.7M649 695.1l-5.7 0.4M719.2 691.1l17.7-4.8M719.2 691.1l-18.1 3.3M736.9 686.4l20.1-4.3M701.2 694.4l-17.1 0.8M833.7 643.6l-17.8 12.2M815.9 655.8l-19.7 11.1M796.3 666.9l-19.6 8.9M796.3 666.9l1-3M776.6 675.8l-19.6 6.3M757 682.1l0.5-2.8M592.5 684.8l16.7 5M609.1 689.8l-5.7-0.1M609.1 689.8l17 3.6M572.4 679l-5.8-0.1M533.6 663.4l-19.2-10.2M533.6 663.4l-6.1-1.4M552.6 671.8l14 7.1M463.9 616.6l15.9 13.3M463.9 616.6l-17.6-17.2M463.9 616.6l-7.6-5.9M479.8 629.9l11.4 9.9M479.8 629.9l17 12.3M491.2 639.8l5.6 2.4M496.7 642.2l17.6 11M514.4 653.2l13.1 8.8M379.3 483.5l2.7 2.1M379.3 483.5l-3.3-17.6M394.5 521.6l-5.1-9M394.5 521.6l3.6 9.7M440.2 589.8l-7.6-6M440.2 589.8l6.1 9.6M432.6 583.8l13.7 15.5M432.6 583.8l-12.6-16.6M446.2 599.4l10 11.3M408.6 550l11.3 17.2M408.6 550l6.3 7.2M419.9 567.3l-5-10M376 465.9l-5.4-20.8M370.6 445.1l-2.8-14M367.8 431.1l-1.4-19.2M366.5 392.8l-0.1 19.1M366.5 392.8l1.6-20M366.5 392.8l-0.4-15.3M366.4 411.9l2-4.7M370.1 342.6l1.9-4.2M372 338.4l2.3-15M374.3 323.4l6.8-22.2M368.2 372.8l-2 4.7M419.4 224.9l9.9-15.1M419.4 224.9l-2.5 1.8M429.3 209.8l13.7-16M457.8 178.9l-14.8 14.9M457.8 178.9l-11.6 14M457.8 178.9l16.7-13.9M457.8 178.9l13.5-13M443 193.8l3.2-0.9M400.3 258.8l-3.9 3.7M400.3 258.8l-10.5 20.7M384.8 297.5l-3.7 3.7M396.4 262.5l-6.6 17M389.8 279.5l-8.7 21.7M579.3 107.9l19.6-6.3M579.3 107.9l-1.3-0.9M523.1 130.8l19.6-8.9M523.1 130.8l15.6-8.5M523.1 130.8l-19.4 10.9M523.1 130.8l-15.6 10.2M542.7 121.9l-4 0.4M474.5 165l-3.2 0.9M503.7 141.7l3.8-0.7M617 98.8l-1.3-0.9M617 98.8l-18.1 2.8M617 98.8l21.7-1.9M650.9 93.9l5 0.6M735.8 101.8l4.9 3M735.8 101.8l-17.3-2.6M638.7 96.9l17.1-2.3M655.9 94.6l17.1-0.8M673 93.8l22.8 1.7M740.7 104.9l-22.2-5.6M695.8 95.5l5 2.6M695.8 95.5l22.7 3.7"/>
<path stroke="#5b5b00" d="M485.3 186.8l-7.4-3.6M485.3 186.8l12-14.6M773 131.6l2.6 9M773 131.6l20 11.3M773 131.6l-20.7-9.7M773 131.6l-17.2 0.4M905.2 260.5l1.9-13.1M946.4 440.8l6.6-14.3M946.4 440.8l0.8-23M946.4 440.8l-8-6.1M946.4 440.8l-8 14.1M946.4 440.8l-2.5 22.8M848 185.9l-17.3-15.7M848 185.9l-1.6-12.2M848 185.9l16.1 5.1M939.1 348.4l3.2-15.3M939.1 348.4l8.6 8.4M872.8 579.6l3.5 7.4M872.8 579.6l15.1-11.5M872.8 579.6l-13.2 16.5M814.5 639l-3.5-7M814.5 639l-19.1 5.2M814.5 639l15.9-13.1M666.2 677.5l-17.1 3.4M666.2 677.5l18 3.5M666.2 677.5l17.1-4.8M666.2 677.5l-22.8-3.9M666.2 677.5l-5-8.1M499.7 613l-13-0.1M499.7 613l4.1 12M430.2 545.2l-8.4-0.2M430.2 545.2l3.9 16.5M430.2 545.2l-11.8-17.8M430.2 545.2l15.3 18.7M390.9 470.2l7.8 19.6M390.9 470.2l7.7 0.7M390.9 470.2l-1.1-19.3M427.4 244.2l12.9-15.6M427.4 244.2l-11.8 16.3M427.4 244.2l11.7-2.1M427.4 244.2l-1.3 14.6M610.4 127.9l-3.1-8.7M879.2 221.1l14.9 6.6M879.2 221.1l0.5-12.4M812.3 155.8l-19.2-12.9M812.3 155.8l18.3 14.3M812.3 155.8l-2.9-10.9M812.3 155.8l16.2 2.9M926.7 273.8l-10.2-6.9M926.7 273.8l-0 14.5M907.5 235.3l-0.4 12.1M925.3 303.3l1.4-15M925.3 303.3l10 7.2M944 318.1l-1.7 15M944 318.1l-8.7-7.6M946.2 394.6l6.8 8.8M946.2 394.6l1 23.2M946.2 394.6l-2.7-23.2M946.2 394.6l5-14.6M901.9 555.8l-14 12.3M901.9 555.8l-4-7.9M901.9 555.8l9.4-20.9M919.1 513.1l10.9-13.4M919.1 513.1l4.2 8.1M919.1 513.1l-7.8 21.8M939.7 485.9l-4.6-8.4M939.7 485.9l-9.6 13.9M775.5 647.9l19.9-3.7M775.5 647.9l-19.3 12M775.5 647.9l1.2 9.1M845.5 611.5l14.1-15.4M845.5 611.5l17.3-8.4M845.5 611.5l2.7 6.8M845.5 611.5l-15.1 14.3M845.5 611.5l-18.8 6.9M700.3 666.6l1 9.1M736.3 670l-17.9-1M736.3 670l-1.1-8.9M736.3 670l-17 7.2M736.3 670l19.9-10.2M620.7 667.9l22.6 5.7M620.7 667.9l5.6 8.2M620.7 667.9l-17.1 1.6M586.8 669.8l-5.3-8.6M586.8 669.8l16.8-0.3M547.2 655.9l14.3-1.5M547.2 655.9l-5.5-10M508.7 635.8l-4.9-10.8M508.7 635.8l13.5 0.2M407.9 508.9l-9.2-19.1M407.9 508.9l-1-18.5M407.9 508.9l8.8 0.6M407.9 508.9l10.5 18.5M462.2 581.6l5.6 15.6M462.2 581.6l-12-1.6M462.2 581.6l-16.7-17.6M454.3 213.8l7.9-17.3M454.3 213.8l15-13.9M454.3 213.8l-14 14.8M454.3 213.8l-6.9-2.9M405.1 277.5l-0.5 15.3M405.1 277.5l9.7-2.1M390.2 431.4l1.8-19.7M390.2 431.4l-0.4 19.5M390.2 431.4l-7.6-0.8M390.2 431.4l-6.4-20.7M379.4 389.9l7.2 0.9M388.1 351.9l-1-19.6M388.1 351.9l2.7 19.9M388.1 351.9l-5 19M388.1 351.9l7.8-21.9M388.1 351.9l9.6-1.9M405.5 308.6l-9.7 2M405.5 308.6l-0.9-15.8M510.1 158.8l-12.8 13.5M510.1 158.8l-19.9 10.2M510.1 158.8l13.6-12.4M510.1 158.8l2.9 9.1M510.1 158.8l16.1-4.2M731.2 114l3.6 9.1M543 151.6l-2.9-9M573.2 128.8l-17.9 2.5M573.2 128.8l15.5-9M573.2 128.8l18.4-1.1M573.2 128.8l3.1 9M573.2 128.8l-15.4 10.7M648.8 111.8l-19.3 7.1M648.8 111.8l-22.2-0.7M648.8 111.8l3.4 9.1M648.8 111.8l23 2.8M694.8 119.3l-3.5-9M694.8 119.3l18.3-3.6M694.8 119.3l-23-4.7M892.9 240.3l14.2 7.2M892.9 240.3l1.3-12.7M864.2 202.9l15.5 5.7M864.2 202.9l-0.2-12M775.7 140.7l17.4 2.3M795.4 152.8l-2.3-9.8M793.1 142.9l16.3 2M830.6 170.1l15.7 3.6M830.6 170.1l-2.2-11.5M916.5 266.9l1.2-12.7M916.5 266.9l-9.4-19.4M916.5 266.9l10.1 21.4M917.8 254.2l-10.7-6.7M907.1 247.5l-13-19.9M846.4 173.7l17.7 17.2M894.1 227.6l-14.5-19M879.7 208.6l-15.6-17.7M916 281.6l10.7 6.7M926.7 288.3l8.6 22.2M926.7 288.3l9.5 7.3M942.2 333.1l-6.9-22.6M942.2 333.1l-9.2-7.4M942.2 333.1l5.4 23.7M942.2 333.1l8.1 8.5M935.3 310.5l-2.3 15.1M935.3 310.5l0.9-14.9M953 426.5l-5.9-8.8M953 403.4l-5.8 14.4M953 403.4l-1.8-23.4M947.1 417.8l-8.7 16.9M943.5 371.4l7.7 8.6M943.5 371.4l4.2-14.6M951.2 380l-3.5-23.2M938.4 454.9l-3.3 22.6M938.4 454.9l5.5 8.7M914.7 542.7l-3.4-7.7M876.3 587l11.6-18.9M876.3 587l-16.7 9.1M876.3 587l-13.5 16.1M891.1 575.2l-3.2-7M887.9 568.2l10-20.3M935.1 477.5l8.8-13.9M935.1 477.5l-10.2 13.7M935.1 477.5l-5 22.3M924.9 491.2l5.1 8.6M930 499.8l-6.7 21.5M923.4 521.2l-12 13.7M897.9 547.9l13.4-13M911.3 534.9l-4.8-8.4M811.1 632l-15.7 12.2M811.1 632l19.4-6.2M795.4 644.2l-18.7 12.8M795.4 644.2l0.9 8.4M859.6 596.1l3.1 7.1M848.1 618.4l-17.7 7.5M830.4 625.9l-3.7-7.4M649.1 681l-5.7-7.3M649.1 681l-22.8-4.8M718.4 669l-17.2 6.7M718.4 669l0.8 8.2M684.1 681l17.1-5.3M684.1 681l-0.9-8.3M701.3 675.7l-18-3M701.3 675.7l18 1.5M756.2 659.8l0.9 8.2M756.2 659.8l20.5-2.9M609.2 677.3l-5.6-7.8M643.4 673.6l-17.1 2.5M626.3 676.2l-22.7-6.7M581.4 661.1l22.2 8.4M581.4 661.1l-19.9-6.7M581.4 661.1l-14.7 2.3M603.6 669.5l-5.2-9.1M561.5 654.4l5.2 9.1M561.5 654.4l-19.9-8.5M517.8 624.3l-14.1 0.6M517.8 624.3l4.4 11.6M486.6 612.9l17.1 12.1M486.6 612.9l-6.3-15M486.6 612.9l-18.8-15.7M503.7 625l18.5 11M541.6 645.9l-19.4-9.9M541.6 645.9l-14.1 0.6M522.2 636l5.3 10.5M421.7 545l-3.3-17.6M434.1 561.7l11.3 2.2M398.7 489.8l8.2 0.6M398.7 489.8l-0.1-18.8M406.9 490.4l-8.3-19.4M398.6 470.9l-8.7-20M427.7 527.7l-9.3-0.4M416.7 509.5l1.7 17.9M418.4 527.4l-8-0.5M480.3 597.9l-12.5-0.8M467.8 597.2l-17.6-17.2M450.2 580l-4.7-16M477.9 183.2l-15.7 13.3M477.9 183.2l-8.6 16.7M477.9 183.2l19.4-10.9M477.9 183.2l12.3-14.3M462.2 196.5l7.1 3.3M440.3 228.6l7-17.7M440.3 228.6l-6.6-2.6M440.3 228.6l-1.2 13.5M415.7 260.5l-0.9 14.8M415.7 260.5l10.5-1.8M392 411.7l-5.4-20.8M392 411.7l-8.1-0.9M398 451.5l-8.2-0.6M389.9 451l-7.3-20.3M387.1 332.3l8.7-21.7M387.1 332.3l8.8-2.2M390.8 371.8l-7.7-0.9M390.8 371.8l-4.2 19.1M383 370.9l3.5 20M386.5 390.9l-2.7 19.8M382.6 430.6l1.3-19.9M395.8 310.6l8.8-17.8M395.8 310.6l0 19.5M404.6 292.8l10.2-17.4M414.8 275.4l11.3-16.6M497.3 172.3l-7.1-3.3M497.3 172.3l15.7-4.4M523.7 146.4l2.5 8.2M523.7 146.4l16.4-3.8M752.4 122l3.4 10M752.4 122l-17.6 1.1M526.2 154.6l13.8-12M540 142.6l15.3-11.2M540 142.6l17.8-3M555.3 131.3l2.5 8.2M607.4 119.2l-18.6 0.6M607.4 119.2l-15.7 8.5M607.4 119.2l22.2-0.2M607.4 119.2l19.3-8.1M588.7 119.8l2.9 7.9M755.8 132l-21-8.9M629.5 118.9l-2.9-7.9M668.3 106.5l3.6 8.1M734.8 123.1l-21.7-7.3M691.4 110.3l21.8 5.4M691.4 110.3l-19.5 4.3M713.2 115.8l3.4 10M652.2 120.9l19.7-6.3"/>
<path stroke="#6d6d00" d="M485.3 186.8l-16 13M485.3 186.8l-1.9 12.4M485.3 186.8l15.4-4.7M905.2 260.5l-12.3-20.2M905.2 260.5l-12.5-5.7M905.2 260.5l11.3 6.3M905.2 260.5l10.8 21M905.2 260.5l-3.4 13.9M733.8 650.5l1.5 10.6M848 185.9l1.7 12.6M848 185.9l16.2 17M848 185.9l-15.7-4.4M939.1 348.4l-6.1-22.7M939.1 348.4l4.4 23M939.1 348.4l-11.5-7.6M939.1 348.4l-6 16.5M872.8 579.6l10.7-19.7M872.8 579.6l-4.5-8.3M872.8 579.6l-17.4 8M576.5 651.2l4.9 9.9M576.5 651.2l21.9 9.2M576.5 651.2l17-1.6M576.5 651.2l-4.5-11.1M576.5 651.2l-15 3.2M576.5 651.2l-20.2-7.7M499.7 613l18.2 11.4M499.7 613l14.1-1.3M499.7 613l-5.1-15.7M499.7 613l-19.3-15M430.2 545.2l-2.5-17.4M430.2 545.2l11.9 0.9M395.2 391.9l-3.2 19.8M395.2 391.9l6.1 20.1M395.2 391.9l-4.4-20M395.2 391.9l-8.6-1M395.2 391.9l6-21.8M610.4 127.9l-15.4 9.7M610.4 127.9l3.4 10.4M610.4 127.9l-18.8-0.2M610.4 127.9l19.1-9M610.4 127.9l22.5 1.1M879.2 221.1l13.7 19.3M879.2 221.1l0.5 14M879.2 221.1l-13.9-5M879.2 221.1l-15-18.2M777.8 151l-2.1-10.3M777.8 151l17.6 1.8M777.8 151l-19.6-9.1M815.7 178.2l-1.3-11.7M812.3 155.8l-16.9-3.1M812.3 155.8l2 10.6M925.3 303.3l-9.3-21.7M925.3 303.3l7.7 22.3M925.3 303.3l-13.3-7.5M925.3 303.3l-4.7 14.8M946.2 394.6l-7.8 16.9M946.2 394.6l-9.6-6.6M928.8 428.3l9.6 6.4M928.8 428.3l9.6-16.8M929.1 468.6l0.5-20M929.1 468.6l9.3-13.8M929.1 468.6l-10.5 13.4M929.1 468.6l6 8.8M929.1 468.6l-4.2 22.5M892.7 539.2l-9.3 20.8M892.7 539.2l5.2 8.7M892.7 539.2l13.8-12.7M919.1 513.1l-5.5-8.7M919.1 513.1l5.8-21.9M919.1 513.1l-12.6 13.4M836.8 594.4l4.8 9.1M775.5 647.9l-20.6 2.1M775.5 647.9l-4.5-8.5M775.5 647.9l16-11.4M806.9 623.9l4.2 8.2M806.9 623.9l-15.4 12.6M806.9 623.9l19.8-5.4M845.5 611.5l-3.9-8M700.3 666.6l16.9-7.4M700.3 666.6l18.1 2.4M700.3 666.6l-17 6.1M700.3 666.6l-4.9-9.2M700.3 666.6l-22-2.5M620.7 667.9l-22.3-7.5M620.7 667.9l17.7-3.3M620.7 667.9l-5-9.9M656.2 660l22.1 4.2M656.2 660l5 9.5M656.2 660l-17.8 4.7M536.7 634.5l-18.9-10.2M536.7 634.5l-4.3-12.2M536.7 634.5l15.2-2.6M536.7 634.5l19.6 9M536.7 634.5l4.9 11.3M536.7 634.5l-14.5 1.4M407.5 471.3l8.9 19.3M407.5 471.3l-0.6 19.1M407.5 471.3l-8.9-0.4M407.5 471.3l0-19.6M407.5 471.3l-9.5-19.8M426.7 509.5l-10.2-18.8M426.7 509.5l1 18.3M426.7 509.5l-10-0M462.2 581.6l18.1 16.4M462.2 581.6l-4.1-17.2M462.2 581.6l13.6-0M454.3 213.8l13.4-1.2M454.3 213.8l-1.5 13.2M390.2 431.4l8.7 0.3M390.2 431.4l7.8 20.1M452.4 240.9l-13.2 1.1M452.4 240.9l0.4-14M405.5 308.6l9.7-17.6M405.5 308.6l11.3-1.4M405.5 308.6l-9.6 21.4M405.5 308.6l0.9 19.7M426.1 274l-10.9 17M426.1 274l-11.3 1.4M426.1 274l0.1-15.3M426.1 274l12.6-16.9M409 348.4l-11.3 1.6M516.8 178.5l-3.9-10.6M543 151.6l3.7 10.6M543 151.6l-13.4 12.9M543 151.6l-16.8 3M543 151.6l18.2-2.1M543 151.6l14.8-12.1M579.9 148.6l-3.7-10.7M738 134l17.8-2M738 134l20.1 7.8M738 134l-3.2-10.9M738 134l-21.4-8.2M655.7 131.8l-3.5-11M694.8 119.3l21.7 6.5M694.8 119.3l3.3 10.8M694.8 119.3l-19.6 5.3M892.9 240.3l-13.2-5.3M892.9 240.3l-0.2 14.5M849.6 198.4l15.6 17.7M849.6 198.4l14.5 4.4M849.6 198.4l-17.4-17M865.3 216.1l-1.1-13.2M775.7 140.7l19.7 12.1M775.7 140.7l-19.9-8.7M775.7 140.7l-17.5 1.1M795.4 152.8l1.8 11.1M795.4 152.8l19 13.7M797.1 163.8l17.2 2.6M830.6 170.1l-16.3-3.7M830.6 170.1l1.6 11.3M814.4 166.4l17.9 15M916.5 266.9l-0.5 14.7M916 281.6l-14.2-7.2M916 281.6l-4 14.3M933 325.7l-12.4-7.5M933 325.7l-5.4 15.1M947.1 417.8l-8.7-6.3M943.5 371.4l-10.4-6.6M943.5 371.4l-6.9 16.6M938.4 434.7l-8.8 13.9M938.4 434.7l-0 20.2M938.4 434.7l-0-23.2M929.6 448.6l8.8 6.3M918.6 482l-5 22.3M918.6 482l6.4 9.1M938.4 411.5l-1.8-23.5M933.1 364.8l3.5 23.2M883.4 560l-5.2-8.9M883.4 560l-15.2 11.4M883.4 560l4.5 8.2M883.4 560l14.5-12M868.2 571.4l-12.9 16.3M900.5 517.5l6 9M913.6 504.4l11.3-13.2M913.6 504.4l-7.1 22.1M897.9 547.9l8.6-21.4M855.4 587.7l4.2 8.4M855.4 587.7l-13.8 15.9M754.9 650l16.1-10.6M754.9 650l-19.7 11.1M754.9 650l1.3 9.8M771 639.3l20.5-2.9M811.1 632l-19.6 4.4M811.1 632l15.6-13.6M791.5 636.5l3.9 7.7M859.6 596.1l-18 7.4M822.2 609.7l4.5 8.7M822.2 609.7l19.4-6.2M826.7 618.4l14.9-14.9M717.2 659.2l1.3 9.8M717.2 659.2l18.1 1.9M718.4 669l16.8-7.9M735.3 661.1l20.9-1.2M683.3 672.7l-5-8.6M683.3 672.7l-22.1-3.3M643.4 673.6l17.8-4.2M643.4 673.6l-5-9M581.4 661.1l17-0.7M598.4 660.4l-4.9-10.8M598.4 660.4l17.3-2.4M678.3 664.2l-17.1 5.3M661.2 669.5l-22.8-4.8M572 640.1l-15.6 3.4M638.4 664.7l-22.7-6.7M561.5 654.4l-5.2-10.9M517.8 624.3l14.6-2M517.8 624.3l-4.1-12.7M552 631.9l4.4 11.6M556.3 643.5l-14.7 2.3M416.5 490.7l-9.6-0.3M416.5 490.7l0.2 18.8M406.9 490.4l9.8 19.1M398.6 470.9l-0.6-19.4M427.7 527.7l-11-18.3M427.7 527.7l14.4 18.3M427.7 527.7l12.7 0.4M494.6 597.3l-14.3 0.6M442.1 546.1l3.4 17.9M442.1 546.1l16 18.3M480.3 597.9l-4.5-16.4M445.4 563.9l12.7 0.4M458.1 564.3l17.7 17.2M469.3 199.8l-1.6 12.7M469.3 199.8l14-0.6M440.3 228.6l12.5-1.6M407.6 451.7l-8.6-20M407.6 451.7l-9.5-0.2M392 411.7l6.9 20.1M392 411.7l9.3 0.2M398.9 431.7l2.3-19.8M398.9 431.7l-0.9 19.8M390.8 371.8l10.4-1.7M390.8 371.8l6.9-21.8M467.7 212.5l15.7-13.3M467.7 212.5l-14.8 14.4M483.4 199.2l17.3-17M439.2 242.1l13.7-15.1M439.2 242.1l-13.1 16.7M439.2 242.1l-0.5 15M452.8 227l14-0.6M404.6 292.8l10.5-1.7M427.2 289.9l-12.1 1.2M415.2 291l1.6 16.1M415.2 291l-0.4-15.7M416.8 307.2l-10.4 21.1M426.1 258.8l12.5-1.6M395.9 330l1.8 20M395.9 330l10.6-1.7M401.2 370.1l-3.5-20M397.7 350l8.7-21.7M497.3 172.3l3.4 9.9M500.7 182.2l12.3-14.3M513 167.9l16.6-3.4M513 167.9l13.2-13.3M529.6 164.5l-3.4-9.9M595 137.6l-3.4-9.9M595 137.6l-18.7 0.3M591.6 127.7l-15.4 10.2M561.2 149.4l15.1-11.6M561.2 149.4l-3.4-9.9M576.3 137.8l-18.5 1.7M755.8 132l2.3 9.8M719.8 137.6l-3.2-11.8M629.5 118.9l3.4 10.1M629.5 118.9l22.7 2M632.9 129l19.3-8.1M734.8 123.1l-18.2 2.8M716.6 125.8l-18.4 4.4M698.1 130.2l-22.8-5.5M652.2 120.9l23.1 3.8M675.3 124.7l-3.4-10.1"/>
<path stroke="#eded00" d="M555.5 455.5l18.2 9.1M555.5 455.5l12.8-14.6M555.5 455.5l-1.2 20M555.5 455.5l-9.9-18.3M708.5 516.8l-4.6-21.3M708.5 516.8l-19.4-6M708.5 516.8l19.2 5.4M708.5 516.8l18.5-14.6M708.5 516.8l-18.7 13.8M725.4 281.4l23.4 5.6M725.4 281.4l-14.3 13.1M725.4 281.4l8.7 19M725.4 281.4l-19.7-8.7M758 360.1l-7.6-20.2M758 360.1l-22.2-6.3M758 360.1l21.6 6.5M758 360.1l15.1-13.5M758 360.1l-16.6 17M758 360.1l6.4 23.7M630.6 489.7l-5.8-22.9M630.6 489.7l-19.3-8M630.6 489.7l19.4 7.5M630.6 489.7l14.5-14.8M630.6 489.7l-19.8 11.9M630.6 489.7l0.4 20.2M779.7 454.9l16.3-16.6M779.7 454.9l-17 16.3M779.7 454.9l1.8 20.6M779.7 454.9l-21.9-6.2M779.7 454.9l-4.4-23.5M576.5 318.6l7.6 19M576.5 318.6l22.2 3.8M576.5 318.6l-21.6-3.4M576.5 318.6l-15.2 15.3M576.5 318.6l-6.4-21.9M576.5 318.6l16.6-18.1M645.6 250.5l5.3 20.5M742.5 320l8 19.9M742.5 320l-14.5 13.7M742.5 320l-22.8-6.2M742.5 320l-8.4-19.5M742.5 320l14.8-13.6M742.5 320l23 6.4M696.6 308.1l8.4 19.6M696.6 308.1l-14.6 14M696.6 308.1l14.5-13.6M696.6 308.1l23.1 5.7M696.6 308.1l-20.1-8.2M696.6 308.1l-5.4-22.1M787.8 333.3l6.7 19.9M787.8 333.3l-14.6 13.3M787.8 333.3l-22.3-6.9M800.6 373.4l-20.9-6.7M800.6 373.4l-6.1-20.1M800.6 373.4l-14.8 17.1M592.3 473.4l-18.6-8.8M592.3 473.4l-5.7-23.5M592.3 473.4l13.3-14.8M592.3 473.4l19 8.4M592.3 473.4l-19.6 11.2M592.3 473.4l-0.7 20M581.5 426.1l5.1 23.8M581.5 426.1l-13.3 14.8M581.5 426.1l13.7-15M581.5 426.1l18.7 8.8M581.5 426.1l-23-3.6M581.5 426.1l-9.5-18.7M699.1 473.5l4.8 22M699.1 473.5l-14.7 15.7M699.1 473.5l23.1 7M699.1 473.5l18.2-15.4M669.6 504.3l14.8-15.2M669.6 504.3l19.5 6.5M669.6 504.3l-19.5-7M669.6 504.3l-4.9-22M669.6 504.3l0.7 20M669.6 504.3l-19.1 13M745 487l1 20.3M745 487l-18.1 15.2M745 487l17.6-15.8M745 487l19 4.6M745 487l-22.8-6.5M745 487l-4.7-22.2M735.2 442.2l22.5 6.5M735.2 442.2l5.1 22.6M735.2 442.2l-17.9 15.8M735.2 442.2l17.8-17.2M770.2 407.7l-5.8-23.8M770.2 407.7l15.6-17.2M770.2 407.7l21 6.9M770.2 407.7l5.1 23.7M770.2 407.7l-17.2 17.4M770.2 407.7l-22.7-6.7M591.4 512.9l0.3-19.5M591.4 512.9l19.4-11.2M631.5 529.6l-0.6-19.6M631.5 529.6l19-12.3M536.2 418.6l9.3 18.5M536.2 418.6l22.3 3.8M536.2 418.6l13.1-15M563 388.6l22.8 3.7M563 388.6l9 18.8M563 388.6l-13.7 15M563 388.6l-22.2-3.7M563 388.6l14.3-15.9M563 388.6l-8.4-19.6M621.4 326.7l-14.8 15M621.4 326.7l-22.6-4.3M621.4 326.7l17.4-17.5M621.4 326.7l-5.7-22.1M592.1 356.9l-8-19.3M592.1 356.9l14.5-15.2M592.1 356.9l-14.8 15.8M592.1 356.9l-23-3.9M546.8 349.5l-14 15.8M546.8 349.5l-6.7-18.7M546.8 349.5l14.6-15.6M546.8 349.5l22.3 3.6M546.8 349.5l7.8 19.5M685.7 264.6l19.9 8.1M685.7 264.6l5.5 21.4M685.7 264.6l-14.7 13.5M685.7 264.6l-20-7.4M656.3 292.2l20.2 7.7M656.3 292.2l5.5 21.9M656.3 292.2l-5.4-21.3M656.3 292.2l14.7-14.1M656.3 292.2l-17.6 17M656.3 292.2l-23.1-4.9M610.3 283.1l17.5-16.7M610.3 283.1l22.9 4.2M610.3 283.1l5.4 21.5M610.3 283.1l-17.1 17.5M610.3 283.1l-23.3-4.2M748.7 287l-14.6 13.5M748.7 287l8.5 19.4M705 327.8l23 6M705 327.8l14.7-13.9M682 322.2l-5.5-22.2M750.5 339.9l-22.5-6.2M750.5 339.9l-14.6 13.9M750.5 339.9l22.7 6.7M750.5 339.9l15-13.5M728 333.7l7.8 20.1M728 333.7l-8.3-19.9M711.1 294.5l8.6 19.3M711.1 294.5l23 5.9M711.1 294.5l-5.5-21.8M711.1 294.5l-19.9-8.5M719.7 313.8l14.4-13.3M734.1 300.5l23.2 5.9M779.6 366.7l14.8-13.4M779.6 366.7l-6.5-20.1M779.6 366.7l-15.2 17.2M779.6 366.7l6.1 23.8M794.5 353.2l-21.3-6.6M773.2 346.6l-7.7-20.2M757.3 306.4l8.2 20M757.3 306.4l22.7 6.7M765.4 326.4l14.5-13.4M573.7 464.6l13-14.7M573.7 464.6l-5.4-23.7M573.7 464.6l-19.4 10.9M573.7 464.6l-1 20M586.7 449.9l-18.4-9M586.7 449.9l19 8.7M586.7 449.9l13.6-15M568.3 440.9l-22.7-3.7M568.3 440.9l-9.8-18.4M624.8 466.9l-19.1-8.3M624.8 466.9l-13.5 14.9M624.8 466.9l20.3 8M605.7 458.6l5.7 23.2M605.7 458.6l-5.4-23.7M611.3 481.8l-19.7 11.6M611.3 481.8l-0.5 19.9M595.2 411.1l-23.2-3.7M703.9 495.4l-19.5-6.3M703.9 495.4l-14.8 15.4M703.9 495.4l23 6.8M703.9 495.4l18.4-14.9M684.4 489.1l4.7 21.7M684.4 489.1l-4.9-22.4M684.4 489.1l-19.8-6.9M689.1 510.8l-18.8 13.5M689.1 510.8l0.7 19.8M650 497.3l14.6-15M650 497.3l-4.9-22.4M650 497.3l-19.1 12.7M650 497.3l0.5 20.1M664.6 482.3l-19.5-7.3M796 438.3l-4.7-23.7M796 438.3l-20.7-6.8M727.7 522.1l-0.7-19.9M746 507.2l-19.1-5M726.9 502.2l-4.7-21.7M762.6 471.2l1.4 20.4M762.6 471.2l18.8 4.4M762.6 471.2l-4.9-22.4M762.6 471.2l-22.3-6.4M741.4 377.1l23.1 6.8M722.3 480.5l18.1-15.7M722.3 480.5l-4.9-22.5M757.7 448.7l-17.4 16.1M757.7 448.7l17.6-17.3M757.7 448.7l-4.7-23.7M740.3 464.8l-23-6.8M806.5 397.4l-20.8-6.9M806.5 397.4l-15.3 17.2M764.4 383.9l21.3 6.6M764.4 383.9l-16.9 17.1M785.8 390.5l5.5 24.1M791.3 414.6l-16 16.8M775.3 431.4l-22.3-6.4M753 425.1l-5.5-24.1M554.3 475.5l18.4 9M572.7 484.6l19 8.8M572.3 504.3l19.4-10.9M591.7 493.4l19.1 8.3M610.8 501.7l20.2 8.3M610.8 501.7l0.5 19.9M670.2 524.3l19.5 6.3M670.2 524.3l-19.7-6.9M631 510l19.5 7.4M631 510l-19.7 11.6M650.5 517.3l0.7 19.6M545.6 437.2l12.9-14.7M527.5 400l21.8 3.6M527.5 400l13.3-15.1M558.5 422.4l13.5-15.1M558.5 422.4l-9.2-18.8M585.8 392.3l-13.8 15.1M585.8 392.3l-8.5-19.6M572 407.4l-22.7-3.7M549.3 403.6l-8.5-18.7M540.8 384.9l-8-19.6M540.8 384.9l13.8-15.9M584.1 337.6l22.5 4.1M584.1 337.6l14.6-15.2M584.1 337.6l-22.7-3.7M584.1 337.6l-15 15.5M606.6 341.7l-7.8-19.3M598.7 322.4l16.9-17.8M598.7 322.4l-5.6-21.9M600.5 376.4l-23.2-3.7M532.8 365.3l21.8 3.6M554.9 315.3l6.5 18.6M540.1 330.8l21.3 3.1M561.4 333.9l7.7 19.2M577.3 372.7l-8.2-19.6M577.3 372.7l-22.7-3.7M569.1 353.1l-14.5 15.9M676.5 299.9l-14.7 14.2M676.5 299.9l14.7-13.9M676.5 299.9l-5.5-21.8M661.8 314.1l-23-4.9M705.6 272.7l-14.4 13.3M691.2 286l-20.2-7.9M650.9 271l20.1 7.2M650.9 271l14.7-13.8M650.9 271l-23.1-4.6M650.9 271l-17.7 16.3M671 278.1l-5.4-20.9M570.1 296.7l23.1 3.8M638.7 309.2l-5.5-21.9M638.7 309.2l-23.1-4.6M627.8 266.3l5.4 21M633.2 287.3l-17.5 17.3M615.7 304.6l-22.5-4.1M593.2 300.5l-6.1-21.6"/>
<path stroke="#dbdb00" d="M555.5 455.5l-18.5 3.1M839.8 387.2l-5-20.1M839.8 387.2l-19.2-6.9M839.8 387.2l-13.7 17.1M708.5 516.8l4.3 20.6M815.1 307.8l7.3 19.5M815.1 307.8l-21.3-7.6M815.1 307.8l-13.3 12.6M725.4 281.4l14-12.6M725.4 281.4l-4.9-22M779.7 454.9l19.1 3.6M554.1 532.9l18.3-9.6M554.1 532.9l-0.5-18.6M633.2 566.7l18.8-11.1M633.2 566.7l-0.9-18.2M519.5 381.3l-10.1 21.4M519.5 381.3l8.1 18.7M519.5 381.3l-7.3-18.6M519.5 381.3l-18.4 1.9M519.5 381.3l21.3 3.6M519.5 381.3l13.3-16M645.6 250.5l14.6-14.1M645.6 250.5l-5.2-19.6M645.6 250.5l20 6.7M645.6 250.5l-17.8 15.9M645.6 250.5l-23.3-5.2M829 347l5.8 20M829 347l-6.6-19.8M829 347l-13.8 13.1M829 347l-20.2-7M753 256.9l13.2-11.3M753 256.9l23 6.2M753 256.9l9.5 17.9M753 256.9l-13.6 12M753 256.9l-5.1-21.2M753 256.9l-18.7-9.6M771.6 293.3l-22.8-6.3M771.6 293.3l-9-18.5M771.6 293.3l13.6-11.8M771.6 293.3l22.2 6.9M771.6 293.3l-14.3 13.1M771.6 293.3l8.4 19.8M787.8 333.3l14-13M787.8 333.3l21.1 6.7M787.8 333.3l-7.8-20.2M800.6 373.4l14.6-13.3M800.6 373.4l20.1 6.8M800.6 373.4l6 24M811.5 421.4l14.6-17.1M811.5 421.4l18.3 3.1M811.5 421.4l3.1 20.3M811.5 421.4l-15.5 16.9M811.5 421.4l-5-24M811.5 421.4l-20.3-6.8M817.1 461.7l-18.4-3.2M817.1 461.7l-2.4-20.1M817.1 461.7l15.7-17M817.1 461.7l1.5 20.5M817.1 461.7l-16.8 17.3M746.6 526.9l-18.9-4.8M746.6 526.9l-0.6-19.7M746.6 526.9l18.3-15.2M746.6 526.9l18.5 4.1M746.6 526.9l-14.7 15.5M746.6 526.9l4.2 19.9M782.6 495.7l0.6 19.7M782.6 495.7l-17.7 15.9M782.6 495.7l-18.6-4.2M782.6 495.7l-1.2-20.2M782.6 495.7l17.7-16.7M782.6 495.7l18.7 3.5M716.8 557.1l-4-19.7M716.8 557.1l15.1-14.7M716.8 557.1l-22.9-6.2M553.7 495.2l0.6-19.6M553.7 495.2l19-10.6M553.7 495.2l18.6 9.1M553.7 495.2l-0.1 19.2M553.7 495.2l-17.8-16.6M553.7 495.2l-18.3 3.1M591.4 512.9l-18.9 10.5M591.4 512.9l-19.1-8.6M591.4 512.9l0.6 19.6M591.4 512.9l19.9 8.7M592.9 551.4l-1-18.9M592.9 551.4l19.1-10.4M631.5 529.6l19.6 7.3M631.5 529.6l0.7 19M631.5 529.6l-19.5 11.4M631.5 529.6l-20.2-8M670.9 543.6l-0.7-19.3M670.9 543.6l18.9-13M670.9 543.6l-18.9 12.1M670.9 543.6l-19.7-6.6M670.9 543.6l23.1 7.3M670.9 543.6l3.9 20M519 461.4l17.9-2.8M519 461.4l16.9 17.2M519 461.4l-1 19.9M519 461.4l-17.2 2.5M519 461.4l8.1-21.2M519 461.4l-9.8-18.6M536.2 418.6l-9.1 21.5M536.2 418.6l-18.3 2.7M536.2 418.6l-8.7-18.6M500.3 424l9.1-21.3M500.3 424l17.6-2.6M500.3 424l9 18.8M505.5 344.3l6.6 18.4M505.5 344.3l13.8-16.1M505.5 344.3l20.2 2.5M546.8 349.5l-21.1-2.8M534 312.4l-14.6 15.8M534 312.4l-20.1-2.4M534 312.4l20.9 2.9M534 312.4l6.1 18.4M534 312.4l-6-21.4M534 312.4l14.8-18.8M715.3 238.4l13.6-11.9M715.3 238.4l19 8.9M715.3 238.4l5.2 21.1M715.3 238.4l-20.1-8M715.3 238.4l-14.7 12.8M674.8 223.2l-14.6 13.3M674.8 223.2l20.3 7.2M674.8 223.2l5.5 20.2M685.7 264.6l-5.4-21.2M685.7 264.6l14.9-13.5M564.3 275.5l5.8 21.2M564.3 275.5l-15.6 18.1M564.3 275.5l-21.1-3M564.3 275.5l-5.1-20.4M564.3 275.5l22.7 3.4M564.3 275.5l17.2-17.7M610.3 283.1l-5.7-21.5M599.3 241l17.9-14.9M599.3 241l23 4.2M599.3 241l5.3 20.6M599.3 241l-17.8 16.8M807 288.7l-21.8-7.3M807 288.7l-13.3 11.5M834.8 367l-19.6-6.9M834.8 367l-14.1 13.2M822.4 327.2l-20.6-6.9M822.4 327.2l-13.6 12.8M844 407.3l-17.9-3.1M844 407.3l-14.2 17.1M776 263.1l-13.5 11.7M776 263.1l9.2 18.3M748.7 287l13.8-12.2M748.7 287l-9.4-18.1M762.5 274.8l-23.2-5.9M762.5 274.8l22.7 6.7M739.4 268.9l-5.1-21.6M739.4 268.9l-18.9-9.4M785.2 281.5l8.5 18.8M793.7 300.2l8 20.1M793.7 300.2l-13.8 12.9M815.2 360.1l5.5 20.1M815.2 360.1l-6.3-20.1M815.2 360.1l-20.7-6.9M820.7 380.2l5.5 24.1M820.7 380.2l-14.2 17.1M801.8 320.3l7.1 19.6M801.8 320.3l-21.8-7.3M808.8 340l-14.3 13.3M826.2 404.3l3.7 20.2M826.2 404.3l-19.6-6.9M829.9 424.5l-15.2 17.2M829.9 424.5l2.9 20.3M798.7 458.5l16-16.8M798.7 458.5l-2.7-20.2M798.7 458.5l-17.3 17.1M798.7 458.5l1.6 20.5M814.7 441.6l-18.7-3.4M814.7 441.6l18.1 3.1M727.7 522.1l18.3-14.9M727.7 522.1l-14.9 15.2M727.7 522.1l4.2 20.2M746 507.2l18.9 4.5M746 507.2l18-15.6M783.2 515.4l-18.3-3.8M783.2 515.4l-18.1 15.6M783.2 515.4l18.1-16.2M764.9 511.7l0.2 19.4M764.9 511.7l-0.8-20.1M765.1 531l-14.3 15.7M764 491.6l17.4-16.1M781.4 475.5l18.9 3.5M818.6 482.2l-18.3-3.2M800.3 479l1 20.3M712.8 537.4l19.1 5M712.8 537.4l-23-6.8M712.8 537.4l-18.8 13.5M731.9 542.4l3.9 19.4M731.9 542.4l18.9 4.4M554.3 475.5l-17.4-17M554.3 475.5l-18.4 3M572.7 484.6l-0.4 19.7M572.4 523.3l-0.1-19M572.4 523.3l-18.8-9M572.4 523.3l0.8 19.2M572.4 523.3l19.5 9.2M572.3 504.3l-18.7 10.1M553.6 514.3l-18.2-16.1M612.9 559.5l19.4-10.9M612.9 559.5l-0.9-18.5M573.2 542.6l18.7-10.1M670.2 524.3l-19.1 12.7M689.7 530.6l4.2 20.3M652 555.6l-0.8-18.7M652 555.6l-19.7-7.1M652 555.6l3.9 19.6M652 555.6l22.8 7.9M651.2 536.9l-18.9 11.6M632.3 548.6l-20.3-7.6M591.9 532.5l20.1 8.5M591.9 532.5l19.4-10.9M612 541l-0.7-19.4M693.9 550.8l-19.1 12.7M693.9 550.8l3.9 19.5M537 458.6l-1 20M537 458.6l8.6-21.4M537 458.6l-9.8-18.4M535.9 478.5l-17.9 2.8M535.9 478.5l-0.5 19.7M518.1 481.3l17.4 17M501.8 463.8l7.4-21M545.6 437.2l-18.4 3M527.2 440.1l-9.3-18.8M527.2 440.1l-17.9 2.7M509.3 402.7l8.5 18.7M509.3 402.7l18.2-2.7M509.3 402.7l-8.3-19.5M509.3 402.7l-17.9 1.9M517.9 421.4l9.6-21.4M517.9 421.4l-8.6 21.4M499.7 326.1l19.7 2.1M512.1 362.7l-18.1 1.9M512.1 362.7l-11.1 20.5M512.1 362.7l20.7 2.6M512.1 362.7l13.6-16M494 364.7l7.1 18.6M501.1 383.2l-9.6 21.4M519.3 328.2l-5.5-18.1M519.3 328.2l6.3 18.6M519.3 328.2l20.7 2.6M532.8 365.3l-7.1-18.6M525.7 346.7l14.4-15.9M554.9 315.3l-14.9 15.5M554.9 315.3l15.2-18.5M554.9 315.3l-6.1-21.6M747.9 235.6l-13.6 11.6M728.9 226.5l5.4 20.8M734.3 247.3l-13.8 12.2M720.5 259.5l-14.9 13.3M720.5 259.5l-19.9-8.3M660.2 236.4l-5.1-19.1M660.2 236.4l-19.8-5.5M660.2 236.4l5.4 20.8M660.2 236.4l20.1 7M640.4 230.9l-23.2-4.8M640.4 230.9l-18.1 14.4M705.6 272.7l-5.1-21.6M665.6 257.2l14.7-13.8M695.1 230.3l-14.8 13.1M695.1 230.3l5.4 20.8M680.3 243.4l20.3 7.7M528 291l20.8 2.6M570.1 296.7l-21.3-3.1M570.1 296.7l16.9-17.8M548.8 293.6l-5.5-21.1M559.2 255.1l22.3 2.7M627.8 266.3l-5.5-21.1M627.8 266.3l-23.2-4.8M576.8 237.8l4.8 20M617.2 226.1l5.1 19.1M622.3 245.2l-17.7 16.3M587.1 278.9l17.6-17.3M587.1 278.9l-5.5-21.1M604.6 261.6l-23.1-3.8"/>
<path stroke="#494900" d="M773 131.6l16.6 1.3M773 131.6l-3.1-7.8M946.4 440.8l6.2 5.9M387.8 313l-6.7 18.4M387.8 313l8-18M387.8 313l-0.7 19.2M387.8 313l8-2.5M926.3 528.7l-11.5 13.9M926.3 528.7l7.5-21.1M926.3 528.7l-2.9-7.5M814.5 639l18.2-6.7M814.5 639l1.5 7.3M814.5 639l-18.2 13.6M666.2 677.5l-0 7.6M390.9 470.2l-6.3-1.1M390.9 470.2l0.6 18.4M390.9 470.2l-8.2-20.1M427.4 244.2l6.3-18.2M427.4 244.2l-6.8-1.7M537.9 135.2l-20.7 8.4M537.9 135.2l-14.3 11.2M537.9 135.2l14.9-9.9M537.9 135.2l2.1 7.4M537.9 135.2l17.4-3.9M687.7 103.2l21.9 4.5M687.7 103.2l-19.4 3.3M687.7 103.2l3.6 7.1M805.5 135.8l-15.8-2.9M805.5 135.8l3.9 9.2M926.7 273.8l-8.9-19.6M926.7 273.8l0.6-12.2M926.7 273.8l8.9 7.5M926.7 273.8l9.5 21.8M907.5 235.3l10.2 18.9M907.5 235.3l-1-11.2M907.5 235.3l10 7.1M907.5 235.3l-13.4-7.7M907.5 235.3l-13.7-19.6M843.6 163l2.8 10.7M843.6 163l-15.1-4.3M843.6 163l18.3 16.4M878.8 197.3l15.1 18.4M878.8 197.3l0.9 11.3M878.8 197.3l-14.8-6.4M878.8 197.3l-16.9-17.9M944 318.1l-7.8-22.5M944 318.1l0.3-14.6M944 318.1l7.6 8.5M944 318.1l6.3 23.5M958.3 412.1l-5.3 14.4M958.3 412.1l-5.3-8.7M958.3 412.1l-0.8-23.4M954.8 365.4l5.7 8.8M954.8 365.4l2.6 23.3M954.8 365.4l-3.6 14.5M954.8 365.4l-7.1-8.6M954.8 365.4l-4.5-23.8M954.8 365.4l2.2-15.1M901.9 555.8l12.8-13.2M901.9 555.8l2.9 6.6M901.9 555.8l-10.9 19.4M878.8 593.5l14.4-12.1M878.8 593.5l-2.5-6.5M878.8 593.5l12.3-18.3M878.8 593.5l-13.9 15.9M878.8 593.5l-16.1 9.7M939.7 485.9l4.2-22.3M939.7 485.9l-5.9 21.8M939.7 485.9l9.7-16.6M939.7 485.9l4.6 5.8M849.9 624.1l-17.2 8.2M849.9 624.1l-1.8-5.7M632 683l-16.8 0.7M632 683l17-2.1M632 683l17 4.6M632 683l-22.8-5.7M632 683l-5.8-6.9M702 683.1l-17.9-2M702 683.1l-0.7-7.3M702 683.1l17.3-5.8M702 683.1l17.7 0.5M702 683.1l-17.9 4.6M736.3 670l0.6 7.2M736.3 670l20.8-1.9M777.3 664.4l-20.2 3.6M777.3 664.4l-0.6-7.4M777.3 664.4l19-11.9M586.8 669.8l22.4 7.6M586.8 669.8l5.7 7.3M586.8 669.8l-14.3 1.5M586.8 669.8l-20-6.3M547.2 655.9l19.6 7.6M547.2 655.9l5.5 8.2M547.2 655.9l-13.5-0.2M547.2 655.9l-19.6-9.4M508.7 635.8l5.7 9.6M508.7 635.8l-11.9-1.4M508.7 635.8l-17.4-11.6M508.7 635.8l18.9 10.7M474.7 611.5l11.9 1.4M474.7 611.5l16.6 12.7M474.7 611.5l-18.3-16.5M474.7 611.5l-6.9-14.3M439.5 577.2l-13.1-16.2M439.5 577.2l-5.4-15.5M439.5 577.2l16.9 17.8M439.5 577.2l10.7 2.8M414.6 544l7.2 1M414.6 544l-4.2-17.1M407.9 508.9l2.5 18M407.9 508.9l-7.7-0.9M471.5 180.6l6.4 2.6M471.5 180.6l-9.2 16M471.5 180.6l-15.5 13.7M471.5 180.6l18.7-11.6M471.5 180.6l12.6-14M441.5 208.9l14.5-14.6M441.5 208.9l5.9 2M441.5 208.9l-7.8 17.1M405.1 277.5l-9.3 17.5M405.1 277.5l-6-1M405.1 277.5l4.2-18.3M405.1 277.5l10.6-17M376.4 429.6l6.3 20.5M376.4 429.6l6.1 1M376.4 429.6l0.7-19.8M379.4 389.9l-5.7-0.9M379.4 389.9l-2.7-20M379.4 389.9l3.7-19.1M379.4 389.9l4.5 20.8M379.4 389.9l-2.2 19.9M388.1 351.9l-6.8-1M510.1 158.8l-6.7-3.1M731.2 114l17.8 1M731.2 114l21.2 8M731.2 114l-21.6-6.3M731.2 114l-3.8-6.3M731.2 114l-18 1.8M573.2 128.8l-2.8-7M604.7 112.1l-18.4 1.5M604.7 112.1l2.7 7M604.7 112.1l-15.9 7.7M604.7 112.1l19.4-7.2M604.7 112.1l22-1.1M648.8 111.8l-2.6-7M648.8 111.8l19.4-5.2M789.6 132.9l-19.7-9M789.6 132.9l3.4 10M789.6 132.9l19.7 12M769.9 123.9l-21-8.9M769.9 123.9l-17.5-1.9M917.8 254.2l9.5 7.4M917.8 254.2l-0.3-11.8M935.6 281.3l0.6 14.3M935.6 281.3l8.7 22.2M906.5 224.2l-12.6-8.4M809.4 144.9l19.1 13.7M809.4 144.9l15.7 3.7M846.4 173.7l-17.9-15M846.4 173.7l15.5 5.7M828.5 158.7l-3.4-10M894.1 227.6l-0.3-11.9M893.9 215.8l-14.2-7.2M864 190.9l-2.2-11.5M936.2 295.6l8.1 7.9M953 426.5l-0-23.2M953 426.5l-0.4 20.1M953 426.5l5.4 5.7M953 403.4l4.5-14.6M957.4 388.8l-6.3-8.8M947.7 356.8l2.7-15.2M951.6 326.6l-1.3 15M950.3 341.6l6.7 8.7M952.6 446.7l-8.7 16.9M952.6 446.7l-3.3 22.6M893.2 581.4l-2.2-6.1M914.7 542.7l-9.9 19.8M914.7 542.7l2.4 6.3M914.7 542.7l8.6-21.4M904.8 562.5l-13.7 12.8M876.3 587l14.8-11.8M943.9 463.6l5.5 5.7M933.8 507.7l-3.8-7.9M933.8 507.7l-10.4 13.6M933.8 507.7l10.5-16M864.9 609.4l-2.1-6.2M864.9 609.4l-16.7 9M862.8 603.2l-14.6 15.2M832.7 632.3l15.4-13.9M832.7 632.3l-2.3-6.4M832.7 632.3l-16.7 14M615.2 683.7l-6-6.4M649.1 681l-0 6.6M649.1 681l17.1 4.1M649 687.6l17.1-2.5M666.1 685.1l18-4.1M666.1 685.1l18 2.6M684.1 681l-0 6.6M736.9 677.2l-17.7 0M736.9 677.2l20.1-9.1M719.3 677.2l0.4 6.4M816 646.3l-19.6 6.3M757.5 674.5l-0.4-6.4M757.1 668.1l19.7-11.1M776.7 657l19.6-4.4M796.3 652.6l1 6.5M609.2 677.3l-16.7-0.3M609.2 677.3l17.1-1.2M592.5 677.1l-20.1-5.8M572.4 671.3l-5.7-7.8M566.7 663.5l-14 0.6M533.6 655.6l-6.1-9.2M479.8 622.1l11.4 2.1M514.4 645.4l13.1 1.1M496.8 634.4l-5.5-10.2M486.6 612.9l4.6 11.3M491.2 624.2l12.5 0.8M384.6 469.1l7 19.5M384.6 469.1l-1.8-19M391.6 488.6l7.2 1.2M391.6 488.6l8.7 19.3M421.7 545l4.7 16M421.7 545l12.4 16.7M421.7 545l-11.4-18.1M426.4 561l7.7 0.7M434.1 561.7l16 18.2M398.7 489.8l1.5 18.2M403.6 525.5l6.8 1.3M410.4 526.9l-10.1-18.9M456.4 595l11.4 2.1M456.4 595l-6.2-15.1M381.2 331.5l0.1 19.5M381.2 331.5l5.9 0.8M462.2 196.5l-6.3-2.3M462.2 196.5l-14.9 14.4M456 194.2l-8.6 16.7M447.4 210.9l-13.7 15.1M433.7 226l-13.1 16.6M433.7 226l-6.1-1.2M395.8 295l3.3-18.5M395.8 295l-5.5-0.7M395.8 295l0 15.5M395.8 295l8.8-2.2M420.6 242.5l-11.3 16.6M420.6 242.5l-4.9 18M420.6 242.5l7-17.7M409.3 259.2l6.4 1.4M382.8 450.1l7.1 0.9M382.8 450.1l-0.2-19.5M381.2 350.9l5.9-18.6M381.2 350.9l-4.5 19M381.2 350.9l1.8 19.9M373.7 389l3.5 20.8M376.7 370l6.3 0.9M382.6 430.6l-5.4-20.8M383.9 410.7l-6.7-0.9M490.2 168.9l13.2-13.3M490.2 168.9l-6.2-2.4M517.2 143.6l-13.8 12M517.2 143.6l6.5 2.8M503.4 155.6l20.3-9.2M503.4 155.6l-19.4 10.9M552.8 125.3l2.5 6.1M552.8 125.3l17.6-3.4M665.8 100.5l2.5 6M749 114.9l3.4 7M709.6 107.7l-18.2 2.6M709.6 107.7l3.6 8.1M586.2 113.6l-15.8 8.2M586.2 113.6l2.5 6.2M555.3 131.3l15.1-9.5M570.4 121.9l18.3-2.1M624.1 104.9l2.6 6.2M626.6 111.1l19.6-6.3M646.2 104.8l22 1.7M668.3 106.5l23.1 3.8"/>
<path stroke="#ffff00" d="M667.3 336.5l23 5.5M667.3 336.5l14.7-14.4M667.3 336.5l-14.7 14.6M667.3 336.5l5.5 22.8M667.3 336.5l-23-5.1M667.3 336.5l-5.5-22.4M689 428.3l-14.6 15.8M689 428.3l5.2 22.8M689 428.3l-5.3-23M689 428.3l-20-7.9M689 428.3l17.8-17M689 428.3l23.3 7.1M609.2 396l-14 15.1M609.2 396l4.9 23.8M609.2 396l19.7 8.2M609.2 396l14.3-15.1M609.2 396l-23.4-3.7M609.2 396l-8.7-19.6M713.2 347.7l-22.9-5.8M713.2 347.7l-8.2-20M713.2 347.7l14.8-14M713.2 347.7l22.6 6.1M713.2 347.7l-17.4 17.1M713.2 347.7l5.7 23.1M619.3 443.5l5.5 23.3M619.3 443.5l-13.6 15.1M619.3 443.5l-19-8.6M619.3 443.5l-5.2-23.7M619.3 443.5l20.1 8.2M619.3 443.5l14.7-15.5M699.1 473.5l-19.7-6.7M699.1 473.5l-5-22.4M659.7 459.7l14.6-15.6M659.7 459.7l19.7 7.1M659.7 459.7l4.9 22.6M659.7 459.7l-14.6 15.2M659.7 459.7l-20.3-7.9M659.7 459.7l-5.4-23.5M638 366l14.6-14.8M638 366l20.1 8.1M638 366l5.4 23.1M638 366l-14.5 15M638 366l-8.4-19.8M638 366l-23.1-4.6M648.9 412.3l-19.9-8.1M648.9 412.3l-5.5-23.2M648.9 412.3l14.7-15M648.9 412.3l20 8M648.9 412.3l5.4 23.8M648.9 412.3l-14.9 15.7M678.3 382.2l-20.2-8.2M678.3 382.2l-5.5-23M678.3 382.2l5.4 23M678.3 382.2l-14.7 15.1M678.3 382.2l17.6-17.3M678.3 382.2l23.1 6M724.2 394.2l-17.5 17.1M724.2 394.2l-22.9-6M724.2 394.2l-5.3-23.3M724.2 394.2l17.1-17.1M724.2 394.2l5.7 24.1M724.2 394.2l23.3 6.8M735.2 442.2l-23-6.8M735.2 442.2l-5.3-23.9M621.4 326.7l22.9 4.7M621.4 326.7l8.2 19.5M592.1 356.9l22.8 4.4M592.1 356.9l8.4 19.5M690.3 342l14.7-14.2M690.3 342l-8.3-19.8M690.3 342l-17.5 17.3M690.3 342l5.5 22.9M705 327.8l-23-5.6M682 322.2l-20.2-8M735.8 353.8l-16.9 17.1M735.8 353.8l5.5 23.3M624.8 466.9l14.6-15.1M595.2 411.1l5 23.8M595.2 411.1l18.9 8.8M595.2 411.1l-9.4-18.8M600.2 434.9l13.8-15M614.1 419.9l14.9-15.7M614.1 419.9l19.9 8.2M674.3 444.1l5.1 22.7M674.3 444.1l19.8 7M674.3 444.1l-5.4-23.7M674.3 444.1l-20.1-8M679.4 466.8l14.7-15.7M679.4 466.8l-14.8 15.5M694.1 451.1l23.2 7M694.1 451.1l18.1-15.7M645.1 474.9l-5.7-23.2M652.6 351.2l5.5 22.9M652.6 351.2l20.2 8.1M652.6 351.2l-8.3-19.7M652.6 351.2l-23-4.9M658.1 374.1l14.7-14.8M658.1 374.1l-14.7 15.1M658.1 374.1l5.5 23.2M672.8 359.3l23 5.6M628.9 404.2l14.4-15.1M628.9 404.2l-5.5-23.2M628.9 404.2l5.1 23.8M643.4 389.2l-19.9-8.2M643.4 389.2l20.2 8.1M623.5 381l-8.6-19.6M623.5 381l-23-4.5M683.7 405.3l-20.1-8M683.7 405.3l-14.7 15.1M683.7 405.3l23.1 6M683.7 405.3l17.7-17.1M663.6 397.3l5.4 23.1M668.9 420.4l-14.7 15.8M639.4 451.7l14.8-15.6M639.4 451.7l-5.4-23.7M654.3 436.1l-20.3-8.1M695.8 364.9l5.5 23.3M695.8 364.9l23.1 6M706.7 411.3l-5.4-23.1M706.7 411.3l5.5 24.1M706.7 411.3l23.2 7M701.4 388.2l17.5-17.3M718.9 370.9l22.5 6.2M741.4 377.1l6.1 23.9M717.3 458l-5.1-22.7M712.2 435.4l17.7-17.1M729.9 418.3l23.1 6.8M729.9 418.3l17.6-17.3M585.8 392.3l14.7-15.9M644.3 331.4l-14.7 14.8M644.3 331.4l17.5-17.3M644.3 331.4l-5.5-22.2M629.6 346.2l-23-4.5M629.6 346.2l-14.7 15.1M606.6 341.7l8.3 19.7M614.9 361.4l-14.4 15.1"/>
<path stroke="#7f8000" d="M733.8 650.5l21.1-0.5M733.8 650.5l16.3-9.9M733.8 650.5l-16.6 8.7M733.8 650.5l-1.9-12.1M733.8 650.5l-21.5-1M429.1 471l-11.4 0.4M906.8 495l-12.9 12.5M906.8 495l11.7-13M906.8 495l1.3-19.5M906.8 495l-6.3 22.5M906.8 495l6.8 9.3M395.2 391.9l11.5-0.7M429.6 306.3l-2.4-16.4M429.6 306.3l-12.8 0.9M429.6 306.3l-11.2 20.9M551.2 174.3l-4.5-12.1M701.2 142.8l18.6-5.2M701.2 142.8l-22.7-6.3M701.2 142.8l-3.1-12.6M850.4 212l-0.7-13.6M850.4 212l14.9 4.1M850.4 212l15 18.4M850.4 212l-16.4-3.5M850.4 212l-16.8-17.6M879.1 249.9l0.6-14.8M879.1 249.9l13.6 5M879.1 249.9l-13.8-19.4M879.1 249.9l9.5 19.3M777.8 151l19.4 12.9M777.8 151l1.6 11.4M777.8 151l-17.8 2M815.7 178.2l-17.3-2.2M815.7 178.2l-18.6-14.3M815.7 178.2l16.6 3.3M815.7 178.2l17.9 16.3M815.7 178.2l0.9 13.4M897 289.1l4.8-14.6M897 289.1l15 6.8M928.8 428.3l0.8 20.3M928.8 428.3l-9.6 13.8M928.8 428.3l-11.2-6.6M928.8 428.3l-0.9-23.4M908.2 455.6l11.2 6.7M929.1 468.6l-9.6-6.3M914.4 333.5l6.3-15.3M914.4 333.5l13.2 7.3M914.4 333.5l6.3 23.9M925.3 381.5l7.8-16.7M925.3 381.5l11.3 6.5M925.3 381.5l2.5 23.4M925.3 381.5l-4.6-24.1M862.8 562.3l9.3-20.9M862.8 562.3l15.5-11.1M862.8 562.3l5.5 9.1M862.8 562.3l-12.6 16.5M892.7 539.2l-14.5 11.9M892.7 539.2l-5.8-9.5M892.7 539.2l7.8-21.7M836.8 594.4l-19.7 5.5M836.8 594.4l-5.9-9.5M836.8 594.4l13.5-15.6M836.8 594.4l18.6-6.8M836.8 594.4l-14.5 15.3M806.9 623.9l-20.1 3.6M806.9 623.9l-4.9-9.3M806.9 623.9l15.4-14.2M766 629.5l5 9.8M766 629.5l-15.9 11.1M766 629.5l20.8-2.1M690.4 646.9l21.8 2.6M690.4 646.9l5 10.6M690.4 646.9l-17.1 7.2M656.2 660l-4.9-10.8M656.2 660l17.1-5.9M656.2 660l-22.8-5.8M567.9 627.8l4.1 12.3M567.9 627.8l-16 4.1M610.9 646.7l-17.4 2.9M610.9 646.7l-21.7-8.7M610.9 646.7l22.5 7.5M610.9 646.7l4.8 11.3M528.7 609l3.7 13.3M528.7 609l-15 2.6M528.7 609l-19.5-13.8M407.5 471.3l10.2 0M426.7 509.5l0.5-19M426.7 509.5l13.4-0.3M426.7 509.5l13.7 18.6M490.7 580.3l18.6 15M490.7 580.3l3.9 17M490.7 580.3l-18.3-16.6M490.7 580.3l-14.9 1.3M455.4 545.9l-13.4 0.1M455.4 545.9l-15.1-17.8M455.4 545.9l-0.8-18.4M455.4 545.9l16.9 17.7M455.4 545.9l2.7 18.4M409 431.9l9.3 19.7M409 431.9l-1.4 19.9M409 431.9l-10-0.1M409 431.9l-7.7-20M409 431.9l4.7-20.6M452.4 240.9l14.5-14.6M452.4 240.9l14.6-0.1M452.4 240.9l-13.8 16.2M452.4 240.9l0.3 15.5M482.3 212.5l-14.7 0M482.3 212.5l1-13.3M482.3 212.5l-0.1 14.2M482.3 212.5l-15.5 13.8M482.3 212.5l16.7-17.7M482.3 212.5l16-3.9M426.1 274l1.2 15.9M426.1 274l13.3-1M409 348.4l-7.8 21.6M409 348.4l-2.5-20.1M409 348.4l9.5-21.3M409 348.4l13.4-0.8M409 348.4l4.6 20.9M516.8 178.5l-16.2 3.7M516.8 178.5l12.7-14M516.8 178.5l16.9-2.6M516.8 178.5l-17.8 16.3M516.8 178.5l-1.2 13M617.6 150.2l-3.8-12M579.9 148.6l15.1-11M579.9 148.6l18.7 0.2M579.9 148.6l3.7 12.2M579.9 148.6l-14.6 12.3M579.9 148.6l-18.8 0.9M738 134l1.9 10.6M738 134l-18.2 3.6M741.5 156.4l-1.6-11.8M741.5 156.4l18.4-3.5M655.7 131.8l22.8 4.6M655.7 131.8l3.9 12.2M655.7 131.8l-19.1 8.4M655.7 131.8l-22.7-2.9M655.7 131.8l19.6-7.2M879.7 235l13 19.8M879.7 235l-14.5-18.9M879.7 235l-14.3-4.6M892.7 254.9l-4.1 14.3M892.7 254.9l9.1 19.6M849.6 198.4l-16.1-4M865.3 216.1l0.1 14.3M798.3 176l-1.2-12.2M798.3 176l-19-13.6M797.1 163.8l-17.8-1.5M779.3 162.4l-19.4-9.5M832.3 181.5l1.3 13M833.9 208.5l-0.4-14.1M833.6 194.4l-17-2.9M888.6 269.1l13.2 5.3M901.8 274.4l10.2 21.4M893.9 507.6l-7.1 22.1M893.9 507.6l6.6 10M929.6 448.6l-10.5-6.5M929.6 448.6l-10.2 13.7M919.1 442.1l0.3 20.3M917.5 421.7l10.4-16.8M918.6 482l0.9-19.7M918.6 482l-10.4-6.5M919.5 462.3l-11.3 13.2M912 295.9l-5.5 15.1M912 295.9l8.7 22.3M906.4 311l14.2 7.2M920.6 318.2l7 22.6M927.6 340.8l5.5 24.1M927.6 340.8l-6.9 16.6M938.4 411.5l-10.5-6.6M933.1 364.8l-12.4-7.5M936.6 388l-8.7 16.9M927.9 404.9l-12-6.7M872 541.4l6.2 9.7M872 541.4l14.8-11.7M878.3 551.1l-10 20.3M878.3 551.1l8.6-21.4M868.2 571.4l-18 7.4M886.9 529.7l13.7-12.2M900.5 517.5l13.1-13.2M817 599.9l-15.1 14.6M817 599.9l5.2 9.8M830.9 585l19.3-6.2M850.2 578.8l5.2 8.9M754.9 650l-4.8-9.4M771 639.3l-20.9 1.3M771 639.3l15.8-11.9M750.1 640.6l-18.2-2.2M791.5 636.5l-4.7-9M781.4 617.3l5.4 10.1M786.8 627.4l15.1-12.9M801.9 614.5l20.3-4.8M717.2 659.2l-4.9-9.7M717.2 659.2l-21.7-1.8M731.9 638.4l-19.7 11.1M712.3 649.5l-16.8 8M695.4 657.4l-22.1-3.4M695.4 657.4l-17.1 6.7M651.3 649.2l22 4.9M651.3 649.2l-17.9 5M673.3 654.1l4.9 10.1M593.5 649.6l-4.3-11.6M593.5 649.6l-21.5-9.5M593.5 649.6l22.2 8.4M589.2 638l-17.2 2.1M572 640.1l-20-8.2M628.6 642.5l4.8 11.7M638.4 664.7l-4.9-10.5M633.5 654.2l-17.8 3.8M548 619l-15.6 3.4M548 619l3.9 12.9M532.4 622.3l-18.7-10.7M532.4 622.3l19.6 9.5M513.7 611.7l-4.5-16.4M513.7 611.7l-19.2-14.4M417.7 471.3l-1.3 19.3M417.7 471.3l9.4 19.2M417.7 471.3l0.5-19.7M417.7 471.3l-10.2-19.6M416.5 490.7l10.7-0.1M427.2 490.5l13 18.7M509.2 595.3l-14.6 2M494.6 597.3l-18.8-15.7M440.1 509.2l0.2 18.9M442.1 546.1l-1.7-17.9M440.4 528.1l14.3-0.6M472.4 563.7l-14.3 0.6M472.4 563.7l3.4 17.9M418.3 451.6l-10.7 0.2M401.2 411.9l12.4-0.7M401.2 411.9l5.5-20.7M467.7 212.5l-0.8 13.8M483.4 199.2l15.7-4.4M482.2 226.7l-15.3-0.4M466.9 226.3l0.1 14.5M427.2 289.9l-10.4 17.3M427.2 289.9l14.1-0.6M427.2 289.9l12.1-16.9M416.8 307.2l1.7 20M438.6 257.1l0.7 15.9M438.6 257.1l14.1-0.6M439.3 273l13.4-16.5M413.7 411.2l-7-20.1M406.7 391.2l-5.5-21.1M406.7 391.2l6.9-21.8M401.2 370.1l12.4-0.7M406.4 328.3l12-1.2M500.7 182.2l-1.6 12.7M546.7 162.2l-17.2 2.3M546.7 162.2l-13 13.7M546.7 162.2l18.6-1.4M546.7 162.2l14.5-12.8M529.6 164.5l4.2 11.4M533.7 175.9l-18.1 15.6M595 137.6l3.6 11.2M595 137.6l18.9 0.7M598.6 148.8l15.2-10.5M613.9 138.3l22.7 2M613.9 138.3l19.1-9.3M565.3 160.8l-4.2-11.4M758.1 141.8l-18.2 2.8M758.1 141.8l1.8 11.1M721.5 149l18.4-4.4M721.5 149l-1.7-11.4M739.9 144.6l-20.2-7M739.9 144.6l20 8.3M719.8 137.6l-21.6-7.4M678.5 136.4l-18.9 7.6M678.5 136.4l19.6-6.3M678.5 136.4l-3.2-11.8M636.6 140.2l-3.6-11.3M499 194.8l-0.7 13.7M499 194.8l16.6-3.3"/>
<path stroke="#0500ed" d="M778.5 334.5l1.2-20M778.5 334.5l9.9 18.3M778.5 334.5l-12.8 14.6M778.5 334.5l-18.2-9.1"/>
<path stroke="#0400db" d="M778.5 334.5l18.5-3.1"/>
<path stroke="#373700" d="M735.4 107l20.1 5.3M735.4 107l-16.6-0.7M796.1 654.8l5.6 2.8M646.3 686.8l-17.9 1M646.3 686.8l22 2.7M646.3 686.8l4.9 4.7M390.8 500.6l7.6 8.1M390.8 500.6l7.8 19.9M390.8 500.6l-8.2-22.8M390.8 500.6l-1.1-14.1M430 575.9l-2.5-10.1M430 575.9l11.8 9M369.4 406.9l2.5-14.5M369.4 406.9l4.2 8.9M407.7 261.3l9.1-20.3M407.7 261.3l-11.4 15.6M407.7 261.3l-2.6-6.2M596.9 107.3l17.4-0.9M596.9 107.3l0.2 5.5M596.9 107.3l-20.4 8.2M892.5 581.1l-9.3 15.9M892.5 581.1l13.8-15.9M892.5 581.1l5.2 0.7M862.5 609.4l5.5 1.6M939.5 513.8l4.2-18.1M939.5 513.8l-4.6-0.3M919 548.3l10.9-16.9M919 548.3l5.8-17.5M919 548.3l-5.6-0.9M919 548.3l-12.6 16.8M919 548.3l-7.8 17.2M836.5 636.3l18.6-11.6M836.5 636.3l13.4-12.9M836.5 636.3l-5.9-2M836.5 636.3l-19.7 10M836.5 636.3l-14.5 12M765.8 673.4l-15.9 7.3M765.8 673.4l20.8-6.3M765.8 673.4l15.4-8.7M765.8 673.4l-18 3M765.8 673.4l-2.2-5.3M729.3 677.9l2.3 5.3M610.7 687.2l17.7 0.6M610.7 687.2l-4.1-4.9M567.7 672.6l17.4 2.4M567.7 672.6l-3.6-6.5M567.7 672.6l21.3 8.2M567.7 672.6l-19.9-8.5M567.7 672.6l-15.9-2.7M690.2 690.4l-22-0.9M690.2 690.4l19.7-5.3M690.2 690.4l-2.5-5.2M528.5 654.2l19.3 9.9M528.5 654.2l-15-4.5M528.5 654.2l3.7 6.2M528.5 654.2l-19.5-12.8M407.7 539.8l8.7 7.8M407.7 539.8l-1-11.4M407.7 539.8l-9.2-19.2M490.4 627l4 9.2M490.4 627l18.6 14.4M490.4 627l-14.8-6.4M455.2 592.7l-13.3-7.7M455.2 592.7l2.7 10.7M376.3 454.5l6.3 23.3M376.3 454.5l0.7-14.9M376.3 454.5l6.1 8.9M375.7 377.9l-3.9 14.5M375.7 377.9l-0.2-20.1M375.7 377.9l-4.6-5.5M455.2 196.5l-1.5-5.5M427.5 221.7l13.3-13.1M427.5 221.7l12.1-18.2M427.5 221.7l-10.7 19.3M427.5 221.7l1.7 5.8M376.9 337.8l-1.4 19.9M376.9 337.8l4.5 5.5M376.9 337.8l7.7-17.1M376.9 337.8l4-22.6M386.8 293.2l2.9 5.2M484.1 165.9l-16.1 9.6M484.1 165.9l-15 14.7M484.1 165.9l-0.6-5.6M484.1 165.9l16.2-14.7M667.9 99.2l-0 5.7M667.9 99.2l17.1 3.2M667.9 99.2l-18 3.1M632 106.9l-0.1-5.7M517.5 138.1l-17.3 13.1M517.5 138.1l0.5 5.6M517.5 138.1l19.1-7.2M556.7 125.6l19.8-10.1M556.7 125.6l-0.4-5.7M556.7 125.6l-20 5.4M868 611l10-15.3M868 611l15.2-14M868 611l-12.9 13.7M868 611l-18.1 12.4M878 595.8l5.2 1.3M883.3 597l14.5-15.2M934.9 513.5l-5 17.9M934.9 513.5l-10.2 17.4M929.9 531.4l-5.2-0.6M906.4 565.2l4.8 0.3M906.4 565.2l-8.6 16.7M855.2 624.7l-5.2-1.3M816.8 646.4l-15.1 11.2M816.8 646.4l5.2 2M749.9 680.7l-18.2 2.4M749.9 680.7l-2.1-4.3M801.7 657.6l-15.1 9.5M801.7 657.6l-20.5 7.1M801.7 657.6l20.3-9.2M786.6 667.1l-5.4-2.4M731.7 683.2l16.1-6.8M731.7 683.2l-21.7 1.9M585 675.1l21.6 7.2M585 675.1l3.9 5.7M564.1 666.1l-16.3-2M628.4 687.7l-21.8-5.4M628.4 687.7l-4-5.4M628.4 687.7l22.7 3.7M606.6 682.3l17.8-0M606.6 682.3l-17.7-1.5M712.1 689.4l-2.1-4.3M668.2 689.5l4.9 3.7M668.2 689.5l-17.1 2M668.2 689.5l19.5-4.3M709.9 685.1l-22.2 0.1M547.8 664.1l-3.4-7M547.8 664.1l4 5.8M547.8 664.1l-15.6-3.7M513.5 649.8l-4.6-8.4M418.2 558.3l-1.8-10.7M418.2 558.3l9.3 7.6M416.5 547.6l11 18.2M416.5 547.6l-9.8-19.2M427.5 565.8l14.4 19.1M398.4 508.7l8.3 19.7M398.4 508.7l0.2 11.8M406.7 528.4l-8.1-7.9M494.4 636.2l14.6 5.2M494.4 636.2l-18.8-15.5M440.1 574.2l1.7 10.7M441.9 584.9l16 18.5M475.6 620.6l-17.7-17.2M475.6 620.6l-3.4-10.1M457.9 603.4l14.2 7.2M371.9 430.8l1.7-15.1M371.9 430.8l5.1 8.8M382.6 477.8l7.1 8.6M382.6 477.8l-0.2-14.5M371.8 392.4l4.7 8.8M371.8 392.4l1.7 23.4M371.8 392.4l-0.8-20M376.6 401.2l-3 14.5M373.5 415.8l3.5 23.9M389.7 486.5l-7.3-23.1M377 439.7l5.4 23.7M400.2 282.3l-3.8-5.5M453.7 191l-12.9 17.6M453.7 191l-14 12.5M453.7 191l14.3-15.5M453.7 191l15.4-10.3M440.8 208.6l-1.1-5.1M440.8 208.6l-11.5 18.9M416.8 241l12.4-13.5M416.8 241l-11.7 14.1M416.8 241l-1.7-5.7M375.6 357.8l5.8-14.4M375.6 357.8l-4.5 14.7M375.6 357.8l-3.7-5.4M384.7 320.7l-3.7-5.5M384.7 320.7l5-22.4M381 315.3l8.7-16.9M389.7 298.3l6.7-21.5M396.4 276.8l8.8-21.8M718.8 106.3l-16.7-5M718.8 106.3l0-4.8M468 175.5l1.1 5.1M501.3 157.7l-1-6.5M702.1 101.2l-17.1 1.1M685 102.4l0-4.8M614.3 106.4l-17.2 6.4M614.3 106.4l0-4.8M614.3 106.4l17.6-5.2M597.1 112.8l-20.6 2.7M649.9 102.3l-18-1.1M649.9 102.3l0-4.8M500.3 151.2l17.7-7.5M518 143.7l18.7-12.8M576.5 110.7l-0 4.8M576.5 115.5l-20.1 4.3M556.4 119.8l-19.7 11.1"/>
<path stroke="#313700" d="M735.4 107l6.1 6M775.3 119l-19.7-6.7M775.3 119l19.2 8M958.1 439.8l0.2 15.5M702 107l0.1-5.7M755.6 112.3l-14 0.6M741.5 112.9l-22.7-6.7M952.5 474l-8.7 21.7M943.7 495.7l-8.8 17.8"/>
<path stroke="#242400" d="M735.4 107l6.1-1.7M735.4 107l-16.6-5.4M733.6 686.7l16.3-6M733.6 686.7l21.1-4.6M733.6 686.7l-1.9-3.5M733.6 686.7l-21.6 2.8M453.2 186.4l0.5 4.5M453.2 186.4l-13.5 17.1M453.2 186.4l-13.5 12.2M453.2 186.4l14.8-10.9M453.2 186.4l14.9-15.8M872.6 611.6l-4.6-0.6M872.6 611.6l10.7-14.6M872.6 611.6l15.2-14.5M872.6 611.6l-17.4 13.1M872.6 611.6l-13.1 13.4M576.3 681.6l-4.5-3.8M499.5 643.7l14 6M499.5 643.7l-5.1-7.5M499.5 643.7l-19.4-14.7M390.8 500.6l0.7 11M390.8 500.6l-6.3-8.6M430 575.9l-11.8-17.7M430 575.9l4 9M430 575.9l-8.4-7.8M430 575.9l15.3 19.1M369.4 406.9l2.5 23.9M369.4 406.9l-1 14.5M369.4 406.9l-2.9-4.7M369.4 406.9l-1.3-19.9M596.9 107.3l0.2-3.7M596.9 107.3l17.5-5.7M596.9 107.3l-20.4 3.4M957 470.5l1.3-15.2M957 470.5l-4.5 3.5M957 470.5l-7.8 22M939.5 513.8l-9.6 17.6M939.5 513.8l-5.9 17.4M939.5 513.8l9.7-21.3M939.5 513.8l4.7-3.3M919 548.3l4.3 0.1M901.8 581.6l-14 15.5M901.8 581.6l9.4-16.1M901.8 581.6l-4 0.3M836.5 636.3l4.9 1.1M765.8 673.4l5.1 1.9M806.7 659.1l-5-1.5M806.7 659.1l-20.1 8M806.7 659.1l-15.4 9M806.7 659.1l19.9-10.1M806.7 659.1l15.3-10.7M610.7 687.2l-21.8-6.4M610.7 687.2l-17.4-2M610.7 687.2l4.8 3.6M610.7 687.2l22.6 4.7M567.7 672.6l4.1 5.2M656 694.6l17.1-1.4M656 694.6l-4.9-3.2M656 694.6l-22.8-2.7M690.2 690.4l5 2.8M690.2 690.4l21.8-0.9M690.2 690.4l-17.1 2.9M536.6 665.4l15.2 4.5M536.6 665.4l-4.4-5M407.7 539.8l10.5 18.5M407.7 539.8l-7.6-8.6M407.7 539.8l2.5 10.4M462 612.7l-16.7-17.7M462 612.7l18.1 16.3M462 612.7l13.5 7.9M462 612.7l-4.1-9.3M376.3 454.5l-4.4-23.7M376.3 454.5l-4.5-9.3M376.3 454.5l0.9 14.4M427.5 221.7l-0.8-5.4M427.5 221.7l-12.4 13.6M368.3 367.1l-0.2 19.9M368.3 367.1l2.8 5.3M368.3 367.1l3.6-14.7M376.9 337.8l-2.7-5.2M376.9 337.8l-5 14.5M386.8 293.2l-7.7 17M386.8 293.2l-5.8 22.1M386.8 293.2l9.6-16.4M386.8 293.2l-0.9-5.2M386.8 293.2l7.8-22.1M404.3 249.8l0.8 5.2M404.3 249.8l10.8-14.6M404.3 249.8l-9.7 21.3M484.1 156.3l-0.6 4M667.9 99.2l17.1-1.6M667.9 99.2l0-3.8M667.9 99.2l-18-1.7M702 97.5l0.1 3.8M702 97.5l16.8 4M702 97.5l-17 0.2M632 97.5l-17.7 4.2M632 97.5l-0.1 3.8M632 97.5l17.9 0.1M517.5 138.1l0.5-3.9M517.5 138.1l-17.2 8.3M517.5 138.1l19.2-12M556.8 116l19.8-5.3M556.8 116l-20.1 10.2M556.8 116l-0.4 3.9M755.6 112.3l-14-7.1M755.6 112.3l6.1-1.3M741.5 105.2l20.1 5.8M741.5 105.2l-22.7-3.7M761.6 111l19.8 7.2M781.4 118.2l19 8.5M958.3 455.3l4.5-19.1M958.3 455.3l3.7-3.7M952.5 474l-3.2 18.5M965.8 417.2l-3 19.1M962.8 436.2l-0.8 15.3M883.3 597l4.5 0.1M943.7 495.7l5.5-3.2M923.2 548.4l6.7-17M923.2 548.4l10.5-17.2M923.2 548.4l-8.6 16.7M923.2 548.4l-12 17.1M929.9 531.4l3.8-0.2M887.8 597.1l10-15.3M914.6 565.1l-3.4 0.4M911.2 565.5l-13.4 16.3M949.2 492.5l-5 18M855.2 624.7l4.3 0.3M855.2 624.7l-13.8 12.7M859.5 625l-18.1 12.4M749.9 680.7l20.9-5.4M749.9 680.7l4.9 1.4M770.8 675.3l-16.1 6.8M770.8 675.3l15.8-8.2M770.8 675.3l20.5-7.2M786.6 667.1l4.7 1M841.4 637.4l-14.9 11.6M841.4 637.4l-19.4 10.9M826.5 649l-4.5-0.6M717 691.2l-4.9-1.8M731.7 683.2l-19.6 6.3M628.4 687.7l4.9 4.1M571.8 677.8l17.2 3M571.8 677.8l21.6 7.3M571.8 677.8l-15.6-3.6M571.8 677.8l-20-7.9M589 680.8l4.4 4.3M695.3 693.1l16.8-3.7M695.3 693.1l-22.1 0.1M678.1 695.4l-5-2.2M673.1 693.2l-22-1.8M651.1 691.5l-17.8 0.4M615.5 690.8l17.8 1.1M556.2 674.2l-4.4-4.3M551.8 669.9l-19.6-9.4M513.5 649.8l18.7 10.7M513.5 649.8l4.1 5.5M513.5 649.8l-19.2-13.6M532.2 660.5l-14.6-5.2M391.4 511.6l-7-19.5M391.4 511.6l7.1 8.9M391.4 511.6l8.7 19.5M384.5 492.1l-7.3-23.1M384.5 492.1l-1.9-14.2M418.2 558.3l3.4 9.9M418.2 558.3l-8-8.1M398.6 520.5l1.5 10.6M434 584.9l11.3 10.1M494.4 636.2l-14.2-7.2M445.3 595l-3.4-10.1M445.3 595l12.6 8.4M480.1 629l-4.6-8.4M371.9 430.8l-0.1 14.4M371.9 430.8l-3.5-9.5M371.8 445.3l-3.5-23.9M371.8 445.3l5.4 23.7M377.2 469l5.4 8.9M371.8 392.4l-3.8-5.4M439.6 203.5l0-4.8M439.6 203.5l-12.9 12.8M368.1 387l3-14.6M371.1 372.4l0.8-20.1M374.2 332.6l-2.3 19.7M374.2 332.6l4.9-22.4M374.2 332.6l6.7-17.4M371.9 352.3l-1.8-5M379.1 310.2l1.8 5M396.4 276.8l-1.7-5.7M426.7 216.3l-11.6 19M405.1 255.1l10-19.8M405.1 255.1l-10.5 16M468 175.5l0-4.8M468 175.5l15.5-15.2M468 170.7l15.4-10.4M702.1 101.2l16.7 0.3M702.1 101.2l-17.1-3.6M718.8 101.5l6-1.3M685 94.9l-0 2.8M685 97.6l-17.1-2.1M667.9 95.5l-18 2.1M649.9 94.8l-0 2.8M597.1 103.6l17.2-2M597.1 103.6l-20.6 7.1M614.8 98.9l-0.5 2.8M614.3 101.6l17.6-0.4M631.9 101.2l18-3.7M483.5 160.3l16.8-13.9M483.5 160.3l16.8-9.1M518.1 134.2l18.6-8.1M500.3 146.4l-0 4.8M576.5 110.7l-20.2 9.1M536.7 126.1l19.7-6.3M536.7 126.1l-0 4.8"/>
<path stroke="#101200" d="M960.2 326.3l-2.2-2.1M929.9 250.3l6 8.5M929.9 250.3l-4.5-10.3M947.8 287.2l6.9 19.3M947.8 287.2l-8.3-18.8M947.8 287.2l-3.1-9.8M907 216.1l-5.6-9.9M907 216.1l7 6.7M965.2 363.8l-1.8-18.9M965.2 363.8l1-4.9M965.2 363.8l2.4 14.3M958 324.1l-3.3-17.6M958 324.1l5.4 20.8M939.5 268.4l-3.6-9.7M939.5 268.4l5.1 9M919.1 232.8l-5-10M919.1 232.8l6.3 7.2M854.2 160.1l15.9 13.3M870.1 173.4l17.6 17.2M887.8 190.6l13.7 15.5M965.6 382.8l2-4.7"/>
<path stroke="#121200" d="M960.2 326.3l-5.6-19.7M960.2 326.3l3.2 18.6M733.6 686.7l1.5 1.7M733.6 686.7l-16.6 4.6M453.2 186.4l0.5-3.5M926.2 547.7l-3 0.7M926.2 547.7l7.5-16.5M926.2 547.7l-9.1 15.6M926.2 547.7l-11.6 17.4M926.2 547.7l11.4-20.2M872.6 611.6l3.6-0.5M576.3 681.6l21.9 6.6M576.3 681.6l5 2.4M576.3 681.6l17 3.5M576.3 681.6l-15-4.3M576.3 681.6l-20.2-7.4M499.5 643.7l4.1 4.5M499.5 643.7l-13-7.6M499.5 643.7l18.2 11.5M373.4 327.8l0.9 4.8M373.4 327.8l-3.3 19.5M373.4 327.8l5.8-17.6M519.6 132l-1.5 2.2M667.9 93.7l17.1 1.2M667.9 93.7l-0 1.8M667.9 93.7l-18 1.1M747.3 104.9l-5.8 0.3M747.3 104.9l14.3 6.1M747.3 104.9l20 6.2M747.3 104.9l-22.5-4.7M747.3 104.9l-16.8-4.6M786.9 118.7l-19.6-7.6M786.9 118.7l-5.5-0.6M786.9 118.7l13.5 7.9M786.9 118.7l19.6 9.3M825.4 138.7l-5.8-1.9M825.4 138.7l11.9 9.2M825.4 138.7l-18.9-10.7M859.4 162.9l-5.2-2.8M859.4 162.9l10.7 10.5M968.5 392.4l-1 4.7M965.6 432.4l0.2-15.2M965.6 432.4l-2.8 3.8M965.6 432.4l-3.6 19.2M965.6 432.4l2.2-19.9M957 470.5l2.7-3.9M957 470.5l5.1-18.9M957 470.5l-4 18.3M901.8 581.6l-10.8 14.7M901.8 581.6l2.9-1.4M901.8 581.6l12.8-16.5M947.1 506.4l5.8-17.7M947.1 506.4l-2.9 4.1M845.3 637.3l-15 11M845.3 637.3l17.3-13.1M845.3 637.3l14.1-12.2M845.3 637.3l-3.9 0.2M845.3 637.3l-18.8 11.7M806.7 659.1l4.2 0.1M775.3 675.8l-4.5-0.5M775.3 675.8l-20.6 6.3M775.3 675.8l19.9-8.1M775.3 675.8l16-7.7M775.3 675.8l-19.3 7.2M700.1 694.4l16.8-3.1M700.1 694.4l-4.9-1.2M700.1 694.4l-22 1.1M620.6 692.8l-5.1-2M620.6 692.8l17.7 1.7M656 694.6l5 1.6M656 694.6l22.1 0.8M656 694.6l-17.8-0.1M536.6 665.4l19.6 8.8M536.6 665.4l-18.9-10.2M536.6 665.4l-14.5-6.2M536.6 665.4l4.9 3.6M379.5 483l-3.6-9.5M379.5 483l2.4 10.2M379.5 483l6.5 19.7M379.5 483l4.9 9M379.5 483l-6.4-23.4M379.5 483l-2.3-14.1M393.9 521.8l-2.5-10.2M393.9 521.8l-7.9-19.1M393.9 521.8l6.2 9.3M393.9 521.8l9.6 19.2M414.5 559.5l7.1 8.7M414.5 559.5l-4.2-9.4M439.4 592.8l-5.4-7.8M439.4 592.8l10.6 10.6M462 612.7l-12-9.3M462 612.7l5.7 7.9M368.7 435.7l4.4 23.9M368.7 435.7l3.1 9.5M368.7 435.7l-0.4-14.3M368.7 435.7l-2.3-19M365.5 397.6l1 4.7M368.3 367.1l1.8-19.8M368.3 367.1l-1-4.9M368.3 367.1l-2.2 15.2M427.6 212.1l12.1-13.4M427.6 212.1l-0.8 4.2M427.6 212.1l-12.4 18.4M404.3 249.8l10.8-19.4M404.3 249.8l0.9-4.3M404.3 249.8l-9.6 16.4M484.1 156.3l-14.9 11.4M484.1 156.3l-16.1 14.4M484.1 156.3l17.2-12.9M484.1 156.3l1.8-2.4M484.1 156.3l16.2-9.9M702 97.5l-17-2.6M702 97.5l22.8 2.7M702 97.5l5.8-0.9M632 97.5l17.9-2.7M632 97.5l0.8-1.8M632 97.5l-17.3 1.4M597.8 101.7l-0.7 1.9M597.8 101.7l17-2.9M597.8 101.7l-20.8 6.2M556.8 116l20.2-8M556.8 116l0.6-1.8M556.8 116l-19 7.1M741.5 105.2l-16.7-5M761.6 111l5.8 0.1M767.4 111.1l14 7.1M800.4 126.6l19.2 10.2M800.4 126.6l6.1 1.4M854.2 160.1l-17-12.3M854.2 160.1l-11.4-9.9M870.1 173.4l7.6 5.9M819.6 136.8l17.6 11M819.6 136.8l-13.1-8.8M837.3 147.8l5.6 2.4M887.8 190.6l-10-11.3M901.4 206.2l12.6 16.6M914.1 222.7l11.3 17.2M963.4 344.9l2.8 14M966.2 358.9l1.4 19.2M967.6 378.1l-0.1 19.1M967.5 397.2l-1.6 20M967.5 397.2l0.4 15.3M965.8 417.2l2-4.7M959.7 466.6l2.3-15M959.7 466.6l-6.8 22.2M962 451.6l1.9-4.2M933.7 531.2l10.5-20.7M933.7 531.2l3.9-3.7M887.8 597.1l3.2-0.9M887.8 597.1l-11.6 14M891 596.2l-14.8 14.9M891 596.2l13.7-16M876.2 611.1l-13.5 13M876.2 611.1l-16.7 13.9M917.1 563.3l-2.5 1.8M904.7 580.2l9.9-15.1M949.2 492.5l3.7-3.7M953 488.8l-8.7 21.7M944.2 510.5l-6.6 17M830.3 648.3l-19.4 10.9M830.3 648.3l-3.8 0.7M862.6 624.2l-3.2 0.9M754.7 682.1l-19.6 6.3M754.7 682.1l1.3 0.9M795.3 667.7l-4 0.4M795.3 667.7l15.6-8.5M791.3 668.1l19.6-8.9M810.9 659.2l15.6-10.2M735.1 688.4l-18.1 2.8M718.3 692.1l-1.3-0.9M717 691.2l-21.7 1.9M683.1 696.1l-5-0.6M598.2 688.2l-4.9-3M598.2 688.2l17.3 2.6M593.3 685.1l22.2 5.6M695.3 693.1l-17.1 2.3M661 696.2l17.1-0.8M661 696.2l-22.8-1.7M615.5 690.8l22.7 3.7M633.3 691.9l5 2.6M561.4 677.4l-5.2-3.1M503.6 648.2l-17.1-12M503.6 648.2l14 7.1M486.5 636.1l-18.8-15.5M486.5 636.1l-6.3-7.1M556.2 674.2l-14.7-5.2M517.6 655.2l4.5 4M375.9 473.6l-2.8-14M391.4 511.6l-5.4-8.9M386 502.7l-1.5-10.6M434 584.9l-7.6-8.4M434 584.9l-12.4-16.8M434 584.9l16 18.5M426.4 576.6l-4.7-8.4M421.6 568.2l-11.4-18M400.1 531.1l10.1 19M400.1 531.1l3.4 9.9M410.3 550.2l-6.8-9.1M445.3 595l4.8 8.4M450 603.4l17.6 17.2M467.7 620.6l12.5 8.4M373.2 459.6l-1.4-14.3M373.2 459.6l4.1 9.4M368.3 421.4l-2-4.7M368.3 421.4l-1.9-19.1M366.4 416.7l0.1-14.4M366.5 402.3l1.6-15.3M366.5 402.3l-0.3-20M368.1 387l-2-4.7M374.2 332.6l-4.2 14.7M370.1 347.3l-2.7 14.9M439.7 198.7l1.2-3M439.7 198.7l14-15.8M439.7 198.7l-13 17.6M440.8 195.7l12.9-12.8M453.7 182.9l15.5-15.2M453.7 182.9l14.3-12.2M379.1 310.2l0-4.8M379.1 310.2l6.8-22.2M379.2 305.4l6.7-17.4M426.7 216.3l-11.6 14.1M415.1 235.3l0-4.8M415.1 230.4l-9.9 15.1M385.9 288l8.8-21.8M385.9 288l8.7-16.9M394.7 266.3l-0 4.8M469.2 167.7l-1.1 2.9M501.3 143.4l16.7-9.2M501.3 143.4l-1 3M685 94.9l-17.1 0.6M685 94.9l5.7-0.4M685 94.9l22.8 1.7M667.9 95.5l-18-0.7M649.9 94.8l-17.1 0.8M632.8 95.6l-18.1 3.3M597.1 103.6l17.7-4.8M597.1 103.6l-20.1 4.3M518.1 134.2l-17.8 12.2M518.1 134.2l19.7-11.1M576.5 110.7l0.5-2.8M577 107.9l-19.6 6.3M557.4 114.2l-19.6 8.9M537.7 123.1l-1 3M724.9 100.2l-17-3.6M724.9 100.2l5.7 0.1"/>
<path stroke="#000000" d="M960.2 326.3l-2.2-9.8M960.2 326.3l3.2 13.9M926.2 547.7l2.6-3.3M814.4 658l15.9-9.7M814.4 658l-19.1 9.7M814.4 658l-3.5 1.2M666.1 696.3l-5-0.1M373.4 327.8l-3.3 14.7M373.4 327.8l0.9-4.4M373.4 327.8l5.8-22.4M519.6 132l-18.2 11.4M519.6 132l18.2-8.9M667.9 93.7l-17.1 0.3M667.9 93.7l22.8 0.8M947.8 287.2l4.3 9.6M747.3 104.9l5.4 1.1M786.9 118.7l-14.3-6.1M786.9 118.7l5.6 2.2M825.4 138.7l17.4 11.5M825.4 138.7l-13.5-7.9M859.4 162.9l-16.6-12.7M859.4 162.9l18.3 16.4M894.6 197.2l-6.8-6.6M894.6 197.2l6.8 8.9M894.6 197.2l-16.9-17.9M919.5 230.5l-5.5-7.7M919.5 230.5l5.9 9.5M968.5 392.4l-0.9-14.4M968.5 392.4l-0.6 20M965.6 432.4l-1.7 15M965.6 432.4l1-4.6M878.7 609.6l12.2-13.4M878.7 609.6l-2.6 1.5M878.7 609.6l-16.1 14.5M947.1 506.4l-9.6 21.1M845.3 637.3l2.7-1.2M775.3 675.8l1.3 0M736.2 688.3l-1.1 0.1M700.1 694.4l18.2-2.3M700.1 694.4l-17 1.7M700.1 694.4l1 0M620.6 692.8l-22.4-4.7M620.6 692.8l-17.1-3.1M620.6 692.8l22.7 2.7M474.6 627.1l11.9 9.1M474.6 627.1l-6.9-6.5M508.6 651.3l-5-3.2M393.9 521.8l-4.5-9.2M393.9 521.8l4.2 9.4M414.5 559.5l11.9 17.1M414.5 559.5l-11-18.5M439.4 592.8l-13.1-16.2M368.7 435.7l1.8 14.1M368.7 435.7l-1-4.6M365.5 397.6l0.9 19.1M365.5 397.6l0.6-15.3M427.6 212.1l13.3-16.4M427.6 212.1l1.7-2.3M427.6 212.1l-10.6 14.6M455.3 180.4l-14.4 15.4M455.3 180.4l-1.6 2.5M455.3 180.4l13.9-12.6M386.9 283.6l-7.7 21.8M386.9 283.6l-1 4.5M386.9 283.6l7.8-17.3M597.8 101.7l17.9-3.8M597.8 101.7l-19.9 5.3M713.4 97.2l-5.6-0.6M954.7 306.5l-2.6-9.8M954.7 306.5l3.4 9.9M772.6 112.6l-5.3-1.5M767.4 111.1l-14.7-5.2M752.7 106l-22.2-5.6M792.5 120.9l14 7.1M811.9 130.7l-5.4-2.7M952.1 296.8l-7.4-19.4M935.9 258.8l8.7 18.6M935.9 258.8l-10.5-18.8M901.4 206.2l6.2 7.3M907.6 213.4l6.4 9.3M963.5 340.1l-0 4.8M963.5 340.1l2.8 18.8M967.6 373.3l-0 4.8M959.7 466.6l4.2-19.1M959.7 466.6l-4.9 18M966.7 427.8l1.2-15.3M893.2 594.3l-2.2 1.9M893.2 594.3l11.5-14.1M917.1 563.3l-12.4 16.9M917.1 563.3l11.7-18.9M928.8 544.4l8.7-16.9M954.8 484.6l-1.9 4.2M830.3 648.3l17.7-12.2M848 636.1l14.6-11.9M795.3 667.7l-18.6 8.1M735.1 688.4l-16.8 3.7M735.1 688.4l21-5.4M683.1 696.1l-22.1 0.2M598.2 688.2l5.3 1.5M598.2 688.2l-16.9-4.1M581.3 684l-19.9-6.7M643.2 695.6l17.8 0.7M643.2 695.6l-5-1M561.4 677.4l-19.9-8.3M503.6 648.2l-12.5-8.4M503.6 648.2l18.5 11.1M491.2 639.8l-4.7-3.7M522.1 659.3l19.4 9.8M375.9 473.6l6 19.6M375.9 473.6l-5.4-23.7M381.9 493.2l4.1 9.5M386 502.7l3.4 9.9M398.1 531.2l5.4 9.8M408.6 550l-5.1-9M456.3 610.6l-6.2-7.3M456.3 610.6l11.4 10M370.5 449.9l2.6 9.7M367.8 431.1l-1.4-14.4M370.1 342.6l-0 4.8M370.1 342.6l-2.8 19.7M366.2 377.5l-0 4.8M367.3 362.2l-1.2 20.1M416.9 226.7l-1.8 3.8M396.4 262.5l-1.8 3.8M405.2 245.6l-10.5 20.7M538.7 122.3l-1 0.8M469.2 167.7l2.2-1.9M469.2 167.7l16.8-13.8M501.3 143.4l-15.4 10.5M501.3 143.4l2.4-1.7M615.7 97.9l17.2-2.3M615.7 97.9l-0.9 1M649.9 94.8l0.9-0.9M632.8 95.6l18-1.7M577.9 107l-0.9 0.9M577.9 107l-20.6 7.2M690.8 94.4l17.1 2.1M707.8 96.6l22.7 3.7"/>
<path stroke="#616d00" d="M848.7 603.2l1.9-12.4M817.2 611.5l3.9 10.6M633.7 123.4l-18.1-2.4M850.6 590.8l14-0.6M850.6 590.8l-17.3 17M563 150.7l16.1-10.6M579.1 140l19.7-11.1M598.7 128.9l16.8-7.9"/>
<path stroke="#6d6d00" d="M848.7 603.2l16-13M848.7 603.2l-15.4 4.7M428.8 529.5l12.5 5.7M428.8 529.5l12.3 20.2M428.8 529.5l-11.3-6.3M428.8 529.5l3.4-13.9M428.8 529.5l-10.8-21M723.6 662.1l18.8 0.2M723.6 662.1l-3.4-10.4M723.6 662.1l15.4-9.7M723.6 662.1l-19.1 9M723.6 662.1l-22.5-1.1M486 604.1l15.7 4.4M486 604.1l-16.2-17M486 604.1l-1.7-12.6M394.9 441.6l-4.4-23M394.9 441.6l6.1 22.7M394.9 441.6l11.5 7.6M394.9 441.6l6-16.5M461.2 210.4l4.5 8.3M461.2 210.4l-10.7 19.7M461.2 210.4l17.4-8M791 638.4l16.8-3M791 638.4l13.4-12.9M791 638.4l-3.7-10.6M791 638.4l-14.8 12.1M791 638.4l-18.2 2.1M754.1 641.4l3.7 10.7M556.2 639l2.1 10.3M556.2 639l19.6 9.1M556.2 639l-17.6-1.8M596 656l-20.1-7.8M596 656l-17.8 2M596 656l3.2 10.9M596 656l21.4 8.2M639.2 670.7l-3.3-10.8M639.2 670.7l-21.7-6.5M639.2 670.7l19.6-5.3M678.3 658.2l3.5 11M521.7 634.2l16.9 3.1M521.7 634.2l-2-10.6M518.3 611.8l1.3 11.7M454.8 568.9l-0.5-14M454.8 568.9l-13.7-19.3M454.8 568.9l15 18.2M454.8 568.9l13.9 5M387.8 395.4l7.8-16.9M387.8 395.4l9.6 6.6M408.7 486.7l9.3 21.7M408.7 486.7l-7.7-22.3M408.7 486.7l13.3 7.5M408.7 486.7l4.7-14.8M404.9 321.4l-9.3 13.8M404.9 321.4l-0.5 20M404.9 321.4l10.5-13.4M404.9 321.4l-6-8.8M404.9 321.4l4.2-22.5M405.2 361.7l-9.6-6.4M405.2 361.7l-9.6 16.8M441.3 250.8l9.3-20.8M441.3 250.8l-13.8 12.7M441.3 250.8l-5.2-8.7M414.9 276.9l-5.8 21.9M414.9 276.9l5.5 8.7M414.9 276.9l12.6-13.4M497.2 195.6l-4.8-9.1M488.5 178.5l3.9 8M527.1 166.1l15.4-12.6M527.1 166.1l-4.2-8.2M527.1 166.1l-19.8 5.4M558.5 142.1l4.5 8.5M558.5 142.1l20.6-2.1M558.5 142.1l-16 11.4M836.7 617.7l-3.4-9.9M833.3 607.8l-12.3 14.3M821 622.1l-13.2 13.3M821 622.1l-16.6 3.4M807.8 635.4l-3.4-9.9M742.4 662.3l-3.4-9.9M742.4 662.3l15.4-10.2M739 652.4l18.7-0.3M776.2 650.5l-18.5 1.7M776.2 650.5l-3.4-9.9M757.7 652.2l15.1-11.6M558.3 649.3l17.5-1.1M558.3 649.3l19.9 8.7M558.3 649.3l-19.7-12.1M575.9 648.2l2.3 9.8M614.2 652.4l3.2 11.8M704.5 671.1l-3.4-10.1M704.5 671.1l-22.7-2M599.2 666.9l18.2-2.8M635.9 659.8l-18.4 4.4M635.9 659.8l22.8 5.5M701.1 661l-19.3 8.1M662.1 675.4l-3.4-10.1M658.7 665.3l23.1 3.8M538.6 637.2l-19-13.7M538.6 637.2l-1.8-11.1M501.7 608.5l17.9 15M501.7 608.5l1.6 11.3M501.7 608.5l-17.4-17M519.6 623.6l-16.3-3.7M519.6 623.6l17.2 2.6M441.3 535.1l-0.2 14.5M454.3 555l-13.2-5.3M469.8 587.1l-1.1-13.2M469.8 587.1l14.5 4.4M468.7 573.9l15.6 17.7M417.5 523.1l0.5-14.7M432.2 515.6l-14.2-7.2M386.9 372.2l8.7 6.3M390.5 418.6l6.9-16.6M390.5 418.6l10.4 6.6M418 508.4l4-14.3M401 464.3l5.4-15.1M401 464.3l12.4 7.5M395.6 335.1l8.8 6.3M395.6 335.1l-0 20.2M404.4 341.4l-8.8 13.9M395.6 355.3l0 23.2M415.4 308l-6.4-9.1M415.4 308l5-22.3M395.6 378.5l1.8 23.5M397.4 402l3.5 23.2M433.5 272.5l-6-9M465.8 218.6l-15.2 11.4M465.8 218.6l12.9-16.3M455.7 238.9l-5.2-8.9M450.6 230l-4.5-8.2M450.6 230l-14.5 12M409.1 298.8l11.3-13.2M420.4 285.6l7.1-22.1M427.4 263.5l8.6-21.4M478.6 202.3l-4.2-8.4M478.6 202.3l13.8-15.9M474.4 193.9l18-7.4M563 150.7l-20.5 2.9M579.1 140l-1.3-9.8M538.6 145.8l3.9 7.7M542.5 153.5l-19.6 4.4M522.9 158l-15.6 13.6M492.4 186.5l14.9-14.9M492.4 186.5l19.4-6.2M507.3 171.6l4.5 8.7M598.7 128.9l-20.9 1.2"/>
<path stroke="#5b5b00" d="M848.7 603.2l7.4 3.6M848.7 603.2l-12 14.6M561 658.4l20.7 9.7M561 658.4l-2.6-9M561 658.4l17.2-0.4M561 658.4l-20-11.3M428.8 529.5l-1.9 13.1M387.6 349.2l-0.8 23M387.6 349.2l-6.6 14.3M387.6 349.2l8-14.1M387.6 349.2l8 6.1M387.6 349.2l2.5-22.8M723.6 662.1l3.1 8.7M486 604.1l17.3 15.7M486 604.1l1.6 12.2M486 604.1l-16.1-5.1M394.9 441.6l-8.6-8.4M394.9 441.6l-3.2 15.3M461.2 210.4l-15.1 11.5M461.2 210.4l-3.5-7.4M461.2 210.4l13.2-16.5M519.5 151l-15.9 13.1M519.5 151l19.1-5.2M519.5 151l3.5 7M823.9 631.2l19.9-10.2M823.9 631.2l12.8-13.5M823.9 631.2l-13.6 12.4M823.9 631.2l-2.9-9.1M823.9 631.2l-16.1 4.2M791 638.4l2.9 9M760.8 661.2l-18.4 1.1M760.8 661.2l-15.5 9M760.8 661.2l17.9-2.5M760.8 661.2l15.4-10.7M760.8 661.2l-3.1-9M602.8 676l-3.6-9.1M685.2 678.2l22.2 0.7M685.2 678.2l19.3-7.1M685.2 678.2l-23-2.8M685.2 678.2l-3.4-9.1M639.2 670.7l-18.3 3.6M639.2 670.7l3.5 9M639.2 670.7l23 4.7M521.7 634.2l19.2 12.9M521.7 634.2l-18.3-14.3M521.7 634.2l2.9 10.9M521.7 634.2l-16.2-2.9M454.8 568.9l-14.9-6.6M454.8 568.9l-0.5 12.4M426.5 554.7l0.4-12.1M407.3 516.2l10.2 6.9M407.3 516.2l0-14.5M387.8 395.4l-1-23.2M387.8 395.4l-6.8-8.8M387.8 395.4l-5 14.6M387.8 395.4l2.7 23.2M390 471.9l8.7 7.6M390 471.9l1.7-15M408.7 486.7l-1.4 15M408.7 486.7l-10-7.2M394.3 304.1l4.6 8.4M394.3 304.1l9.6-13.9M414.9 276.9l-4.2-8.1M414.9 276.9l-10.9 13.4M414.9 276.9l7.8-21.8M432.1 234.2l14-12.3M432.1 234.2l-9.4 20.9M432.1 234.2l4 7.9M488.5 178.5l15.1-14.3M488.5 178.5l-2.7-6.8M488.5 178.5l-17.3 8.4M488.5 178.5l-14.1 15.4M488.5 178.5l18.8-6.9M558.5 142.1l-19.9 3.7M558.5 142.1l19.3-12M558.5 142.1l-1.2-9.1M597.7 120l1.1 8.9M597.7 120l17.9 1M597.7 120l17-7.2M597.7 120l-19.9 10.2M864.7 590.2l7.1 3.3M864.7 590.2l-8.6 16.7M871.8 593.5l-15.7 13.3M856.1 606.8l-12.3 14.3M856.1 606.8l-19.4 10.9M843.8 621.1l-7.1-3.3M836.7 617.7l-15.7 4.4M810.3 643.6l-16.4 3.8M810.3 643.6l-2.5-8.2M794 647.4l13.8-12M794 647.4l-15.3 11.2M794 647.4l-17.8 3M742.4 662.3l2.9 7.9M742.4 662.3l-15.7 8.5M745.3 670.2l-18.6 0.6M726.6 670.8l-19.3 8.1M726.6 670.8l-22.2 0.2M778.7 658.7l-2.5-8.2M581.6 668l-3.4-10M581.6 668l17.6-1.1M558.3 649.3l-17.4-2.3M578.2 658l21 8.9M665.7 683.5l-3.6-8.1M707.4 678.9l-2.9-7.9M599.2 666.9l21.7 7.3M617.4 664.2l3.4 10M620.8 674.2l21.8 5.4M642.6 679.7l19.5-4.3M662.1 675.4l19.7-6.3M540.9 647.1l-2.3-9.8M540.9 647.1l-16.3-2M503.4 619.9l2.2 11.5M503.4 619.9l-15.7-3.6M441.1 549.7l-14.2-7.2M441.1 549.7l-1.3 12.7M469.8 587.1l0.2 12M469.8 587.1l-15.5-5.7M426.9 542.5l-10.7-6.7M426.9 542.5l-9.4-19.4M426.9 542.5l13 19.9M416.2 535.8l1.2-12.7M417.5 523.1l-10.1-21.4M487.6 616.3l-17.7-17.2M439.9 562.4l14.5 19M470 599.1l-15.6-17.7M386.9 372.2l-5.8 14.4M386.9 372.2l-5.9-8.8M386.9 372.2l8.7-16.9M381 386.6l1.8 23.4M386.3 433.2l-3.5-23.2M386.3 433.2l4.2-14.6M386.3 433.2l5.4 23.7M382.8 410l7.7 8.6M407.3 501.7l10.7 6.7M407.3 501.7l-9.5-7.3M407.3 501.7l-8.6-22.2M397.8 494.4l0.9-14.9M401 464.3l-2.3 15.1M401 464.3l-9.2-7.4M398.7 479.5l-6.9-22.6M391.8 456.9l-8.1-8.5M395.6 335.1l-5.5-8.7M395.6 335.1l3.3-22.6M390.1 326.4l8.8-13.9M398.9 312.5l5-22.3M398.9 312.5l10.2-13.7M410.6 268.8l-6.7 21.5M410.6 268.8l12-13.7M404 290.2l5.1 8.6M446.1 221.8l-3.2-7M446.1 221.8l11.6-18.9M446.1 221.8l-10 20.3M457.7 203l13.5-16.1M457.7 203l16.7-9.1M419.3 247.3l3.4 7.7M427.4 263.5l-4.8-8.4M422.7 255.1l13.4-13M503.6 164.1l-17.7 7.5M503.6 164.1l19.4-6.2M503.6 164.1l3.7 7.4M471.2 186.8l3.1 7.1M538.6 145.8l-15.7 12.2M538.6 145.8l-0.9-8.4M538.6 145.8l18.7-12.8M615.6 121l-0.8-8.2M615.6 121l17.2-6.7M614.7 112.8l18 1.5M632.7 114.3l17.1-5.3M577.8 130.2l-20.5 2.9M577.8 130.2l-0.9-8.2"/>
<path stroke="#b3c800" d="M555 555l12.8-10.6M518.9 482.2l-10.1 17.6M518.9 482.2l-18.4-2.5M591.8 574.5l-18.6-9.4M591.8 574.5l19 8.5M535.7 519.8l9.3 17.9M535.7 519.8l-8.7-18.5M535.7 519.8l-9 17.1M535.7 519.8l-18.3-1.2M505 443l-17.9-3M505 443l-11.5 17.1M486.6 362.5l-14.2 13.1M486.6 362.5l-17.1-7.2M567.8 544.4l5.4 20.8M567.8 544.4l-22.7-6.7M527 501.3l-9.6 17.3M527 501.3l-18.1-1.5M511.6 462.8l-11 17M511.6 462.8l-18.1-2.6M484.1 342.6l-14.6 12.8M484.1 342.6l-16.5-7.1M487.1 440l-5.5-20.1M481.6 419.9l-5.5-24.1M476.1 395.9l-3.7-20.2"/>
<path stroke="#c8c800" d="M555 555l18.2 10.2M555 555l-9.9-17.3M499.8 516.7l9.1-16.9M483 476.9l17.5 2.9M483 476.9l10.4-16.7M470.1 436.8l17 3.2M470.1 436.8l11.5-16.9M536.5 554.4l8.6-16.7M545.1 537.8l-18.4-0.9M526.7 536.9l-9.3-18.3M517.4 518.6l-8.5-18.7M508.9 499.8l-8.3-20.1M508.9 499.8l-17.9-2.8M487.1 440l6.4 20.1M487.1 440l-11 17M481.6 419.9l-17.6-7M500.6 479.8l-7.1-19.6M500.6 479.8l-9.6 17.3M493.5 460.1l-17.4-3.1M476.1 395.9l-12.1 17.1M472.4 375.6l-2.8-20.3"/>
<path stroke="#b6b600" d="M555 555l-1.1 16.4M555 555l-18.5-0.6M590.9 605.6l19.4-6.8M590.9 605.6l0.3-15M553.2 586.9l19-5.5M553.2 586.9l0.6-15.5M553.2 586.9l-17.8-16.3M518.6 553l16.9 17.5M518.6 553l17.9 1.4M518.6 553l8.1-16.1M518.6 553l-9.8-17.8M499.8 516.7l-8 16.1M499.8 516.7l9 18.5M499.8 516.7l17.6 1.8M499.8 516.7l-17.4-3M499.8 516.7l-8.8-19.7M483 476.9l-6.9-19.9M483 476.9l-16.6-3.3M483 476.9l-9.2 16.9M483 476.9l7.9 20.2M470.1 436.8l-10.2 16.7M470.1 436.8l6 20.2M470.1 436.8l-6.2-23.9M470.1 436.8l-17.2-6.9M459.2 388.9l16.9 7M459.2 388.9l13.2-13.2M459.2 388.9l-3.2-20.3M459.2 388.9l-15.6-7M459.2 388.9l4.8 24M459.2 388.9l-11.8 17M453.7 348.5l2.2 20.1M453.7 348.5l15.8 6.9M453.7 348.5l13.9-13M573.2 565.2l-1 16.1M573.2 565.2l-19.3 6.2M572.2 581.3l-18.4-10M572.2 581.3l18.9 9.2M572.2 581.3l-0.4 15.4M553.8 571.4l-18.4-0.8M553.8 571.4l-17.4-17M610.3 598.8l-19.1-8.2M610.3 598.8l20.2 7.7M610.3 598.8l0.5 15.2M591.2 590.5l-19.3 6.2M669.7 618.2l-19.7-5.4M650 612.8l-19.5-6.3M630.5 606.5l-19.7 7.5M535.5 570.5l1-16.1M536.5 554.4l-9.8-17.5M501.4 550.9l7.4-15.7M526.7 536.9l-17.9-1.7M491.8 532.8l17 2.4M491.8 532.8l-9.5-19.1M508.8 535.2l8.6-16.7M459.9 453.5l16.2 3.5M459.9 453.5l6.6 20M459.9 453.5l-7-23.6M476.1 457l-9.7 16.5M466.5 473.5l7.4 20.3M482.4 513.7l-8.5-19.9M482.4 513.7l8.6-16.7M473.8 493.8l17.1 3.3M466.7 315l-0.1-19.1M466.7 315l1 20.5M466.7 315l-14.3 12.9M472.4 375.6l-16.5-7M440.9 361.7l15 6.9M455.9 368.6l-12.4 13.3M455.9 368.6l13.6-13.2M469.6 355.4l-1.9-19.9M467.6 335.5l-15.3-7.6M463.9 412.9l-11 17M463.9 412.9l-16.5-7M452.9 429.9l-5.5-24.1"/>
<path stroke="#92a400" d="M485 248.3l15.3 0.7M746.1 615.7l-14.7 12.7M482 284.5l-14.6-7.4M509.8 215.4l-12.8 16.1M731.4 628.3l-19.1-2M712.3 626.3l-23-3.8M689.3 622.5l-19.5-4.3M500.3 249.1l-17.3 17M500.3 249.1l-3.3-17.6"/>
<path stroke="#a4a400" d="M485 248.3l-1.9 17.8M485 248.3l-15.9 10.7M485 248.3l12-16.8M485 548.1l16.4 2.9M485 548.1l15.7 18.5M485 548.1l6.8-15.2M485 548.1l-10-18.6M450.9 469.8l6.9 20.4M450.9 469.8l-7.6 15.8M450.9 469.8l9-16.3M450.9 469.8l15.6 3.7M450.9 469.8l-16.4-6.4M450.9 469.8l-7.7-23.3M429.3 375l11.6-13.4M429.3 375l14.3 6.9M429.3 375l3.1 23.9M590.9 605.6l-19.1-8.9M590.9 605.6l-18.9 5.4M590.9 605.6l19.9 8.4M590.9 605.6l0.6 14.6M553.2 586.9l-0.1 14.6M553.2 586.9l18.6 9.9M553.2 586.9l-18.3-1M670.4 632.2l18.8-9.7M670.4 632.2l-0.7-14M670.4 632.2l-19.7-4.9M631.1 621.3l0.8 13.6M631.1 621.3l19.6 6.1M631.1 621.3l18.9-8.4M631.1 621.3l-0.6-14.8M631.1 621.3l-20.2-7.3M631.1 621.3l-19.5 6.9M517.4 584l17.6 1.9M517.4 584l0.2-15.1M518.6 553l-17.2-2.1M518.6 553l-1 15.9M465.9 510.1l-8-19.9M465.9 510.1l-15-4.3M465.9 510.1l-6.2 15.4M465.9 510.1l9.1 19.3M465.9 510.1l16.5 3.6M465.9 510.1l7.9-16.3M452.1 307.8l14.6 7.3M452.1 307.8l14.5-11.9M452.1 307.8l0.5-18.9M452.1 307.8l-13.2-6.7M452.1 307.8l0.3 20.2M452.1 307.8l-13.8 13.1M454 270.4l13.3 6.6M453.7 348.5l-12.8 13.2M453.7 348.5l-1.4-20.5M453.7 348.5l-14.7-7.2M437 422.8l6.2 23.7M437 422.8l15.9 7.1M437 422.8l10.4-16.9M437 422.8l-4.7-23.9M437 422.8l-15-7.1M437 422.8l-9.5 17M712.3 626.3l-18.8 10.5M553.2 601.5l18.7-4.7M553.2 601.5l18.8 9.6M553.2 601.5l-18.2-15.6M571.8 596.7l0.1 14.3M572 611l19.5 9.1M689.3 622.5l4.2 14.3M669.7 618.2l-19 9.1M631.8 634.9l18.9-7.5M650.7 627.3l-0.7-14.5M610.8 614l0.8 14.2M610.8 614l-19.4 6.2M611.6 628.2l-20.1-8M535.5 570.5l-0.5 15.4M535.5 570.5l-17.9-1.6M535.1 600.2l-0.1-14.3M535 585.9l-17.4-17M501.4 550.9l16.2 18M501.4 550.9l-0.7 15.7M501.4 550.9l-9.6-18.1M517.6 568.9l-17-2.4M483 266.1l-15.7 11M483 266.1l-14-7.1M491.8 532.8l-16.9-3.4M457.9 490.2l-6.9 15.6M457.9 490.2l-14.6-4.6M457.9 490.2l8.6-16.7M457.9 490.2l16 3.6M474.9 529.4l7.4-15.7M459.9 453.5l-16.6-7M467.3 277.1l1.7-18M467.3 277.1l-0.8 18.8M467.3 277.1l-14.8 11.7M466.5 295.9l-14-7.1M440.9 361.7l2.6 20.2M440.9 361.7l-14-7.1M440.9 361.7l-1.9-20.4M443.5 381.9l3.9 24M443.5 381.9l-11.2 17M426.9 354.6l12.1-13.4M452.3 327.9l-13.3 13.3M452.3 327.9l-14-7.1M439 341.2l-0.7-20.4M434.5 463.4l8.7-16.9M443.2 446.5l9.7-16.5M443.2 446.5l-15.7-6.7M447.4 405.9l-15-6.9"/>
<path stroke="#929200" d="M485 248.3l-7.3-10.7M632.8 647.2l-1-12.4M632.8 647.2l18.8-6.7M632.8 647.2l-20.3-6.2M553.7 615.1l-0.5-13.6M553.7 615.1l18.3-4M553.7 615.1l19.2 9.9M553.7 615.1l1 12.5M553.7 615.1l-18.6-14.9M553.7 615.1l-18-1.1M485 548.1l-1.1 15.4M485 548.1l-15.5-3.6M429.3 375l-12.8-6.7M429.3 375l-2.4-20.4M429.3 375l-11.1 16.7M427.2 295l11.7 6.1M716.4 639.8l15-11.4M716.4 639.8l-4.1-13.5M716.4 639.8l19 1.4M716.4 639.8l-22.9-2.9M716.4 639.8l-18.9 10M670.4 632.2l-18.9 8.3M670.4 632.2l23.1 4.6M670.4 632.2l4 13.8M592.5 633.6l-19.6-8.7M592.5 633.6l20 7.5M592.5 633.6l19.1-5.4M592.5 633.6l-1-13.4M517.4 584l17.7 16.2M517.4 584l-16.7-17.4M517.4 584l0.1 14.4M517.4 584l-17.3-2.5M454.9 540.1l14.6 4.3M454.9 540.1l4.9-14.6M483.6 578l0.2-14.5M437 500.9l8.3 19.9M437 500.9l13.9 4.9M437 500.9l6.3-15.3M437 500.9l-9.5-21.9M454 270.4l15-11.4M454 270.4l-14 12M454 270.4l-1.5 18.4M454 270.4l7.9-21.8M454 270.4l-6.9-10.2M425.8 334.4l0.1-19.9M425.8 334.4l-10.9 13.6M425.8 334.4l1.1 20.2M425.8 334.4l13.2 6.9M425.8 334.4l12.6-13.5M419.6 456.5l7.9 22.5M419.6 456.5l14.9 6.9M419.6 456.5l7.9-16.7M408.7 408.5l9.5-16.7M408.7 408.5l13.4 7.2M471.2 227.7l6.4 9.9M471.2 227.7l18.7-6.7M731.4 628.3l18.9 0.9M731.4 628.3l4 12.9M768.7 629.2l-18.3 0.1M750.3 629.3l-15 11.9M553.2 601.5l-18.1-1.3M572 611l0.9 13.9M631.8 634.9l19.7 5.6M631.8 634.9l-19.4 6.2M631.8 634.9l-20.3-6.7M650.7 627.3l0.9 13.2M651.6 640.5l22.8 5.5M651.6 640.5l4 13.1M572.8 624.9l1.2 12.2M572.8 624.9l-18.1 2.7M572.8 624.9l18.7-4.7M612.5 641l-0.9-12.8M693.5 636.8l4 12.9M693.5 636.8l-19.1 9.2M697.4 649.8l-23-3.8M535.1 600.2l0.6 13.8M535.1 600.2l-17.6-1.8M500.6 566.6l-16.8-3.1M500.6 566.6l-0.6 14.9M535.7 614l-18.2-15.6M483.8 563.4l-15.2-3.9M483.8 563.4l-14.4-19M483.8 563.4l16.2 18M468.6 559.6l0.8-15.1M469.4 544.5l-9.7-18.9M469.4 544.5l5.5-15M517.5 598.4l-17.4-17M445.4 520.9l5.6-15.1M445.4 520.9l14.4 4.7M450.9 505.8l-7.6-20.1M450.9 505.8l8.8 19.7M443.3 485.6l-15.7-6.7M443.3 485.6l-8.8-22.3M459.7 525.5l15.2 3.9M469 259.1l-7.1-10.5M469 259.1l8.6-21.4M440.1 282.4l12.5 6.4M440.1 282.4l-1.2 18.6M452.5 288.8l-13.6 12.2M438.9 301.1l-13 13.4M438.9 301.1l-0.6 19.8M425.8 314.5l12.5 6.4M416.5 368.3l-1.6-20.4M416.5 368.3l10.4-13.7M416.5 368.3l1.7 23.5M414.9 347.9l12 6.7M427.6 479l6.9-15.6M434.5 463.4l-7-23.6M418.1 391.8l14.2 7.2M418.1 391.8l3.9 24M432.4 398.9l-10.4 16.8M413.3 432.6l8.7-16.9M413.3 432.6l14.2 7.2M422 415.7l5.5 24.1M462 248.6l15.7-11M477.6 237.7l19.3-6.2M477.6 237.7l12.3-16.7M497 231.5l-7-10.5M489.9 221l-6.1-9.8M489.9 221l13.2-16M503.1 205l13.8-14.9"/>
<path stroke="#00a477" d="M772.7 190.1l20 12.6M772.7 190.1l2.6 15.5M772.7 190.1l-17.3 6.5M812 216.5l-2.9-18.5M812 216.5l16.2-4M896.6 359.4l9.5 20M792.8 202.7l16.3-4.7M906.1 379.4l-6.9 20.7M899.1 400.1l-8.8 21.8M890.4 421.9l-9.7 20.6"/>
<path stroke="#00a454" d="M772.7 190.1l-3.1-14.5M896.6 442.8l-10.4 20.7M896.6 442.8l9.5-21.6M730.9 168.8l3.6 17.1M769.7 175.7l-17.6 3.1M869.6 463.1l16.6 0.5M880.7 442.5l5.5 21.1"/>
<path stroke="#00a465" d="M772.7 190.1l16.6-5.2M772.7 190.1l-20.7-11.4M896.6 442.8l-6.2-21M896.6 442.8l-15.9-0.4M792.8 202.7l-3.4-17.9M899.1 400.1l7 21.1M890.4 421.9l15.7-0.6M755.5 196.6l-3.4-17.9M752.1 178.8l-17.6 7.1"/>
<path stroke="#192400" d="M879.6 185.3l-9.5-4.1M879.6 185.3l8.1 13.2M929.9 250.3l5.9 16.2M929.9 250.3l-4.6-2.5M954.4 322.3l3.6 1.8M954.4 322.3l-2.4-17.8M954.4 322.3l6.4 20.5M907 216.1l-5.7-2.1M907 216.1l7 14.5M870.1 181.2l-5.8-9.9M952 304.5l-4.1-1.8M952 304.5l-7.4-19.3M944.6 285.1l-8.7-18.6M893.8 200.2l7.5 13.8M893.8 200.2l-6.1-1.8M925.3 247.8l-6.3-15M914 230.5l5.1 2.3M960.8 342.9l1.3 19.1M960.8 342.9l-4.1-1.7"/>
<path stroke="#1d2400" d="M879.6 185.3l-15.3-13.9M879.6 185.3l14.3 14.9M879.6 185.3l-9.5-11.9M813 136.3l-18.6-9.3M813 136.3l17.9 10.5M964.5 401.9l1.1-19.1M964.5 401.9l-2.5 19M848 158.5l16.2 12.8M848 158.5l-17.1-11.7M907 216.1l-13.2-15.9M907 216.1l12 16.7M965.2 363.8l-4.4-20.9M965.2 363.8l-3.1-1.8M864.3 171.4l-10.1-11.3M864.3 171.4l5.8 2.1M958 324.1l-6-19.6M958 324.1l2.8 18.8M939.5 268.4l5.1 16.7M939.5 268.4l-3.6-1.9M963.4 344.9l-2.7-2M962 381.1l3.6 1.7M962.1 362l3.5 20.8"/>
<path stroke="#0e1200" d="M879.6 185.3l8.2 5.3M929.9 250.3l9.6 18.2M929.9 250.3l-10.8-17.5M947.8 287.2l4.3 17.2M947.8 287.2l-3.2-2.1M952 304.5l2.7 2.1M893.8 200.2l-6.1-9.6M893.8 200.2l7.6 6"/>
<path stroke="#00926a" d="M904.9 319l-12.5 0.7M904.9 319l-12.3-18.9M904.9 319l-3.4 20M878.9 281.8l15-1M878.9 281.8l0.5-19.3M896.6 359.4l15-0.8M892.6 300.1l1.3-19.4M828.2 212.6l17.9 15.4M846.1 228l17.7 17.2M863.8 245.2l15.6 17.3M901.5 339.1l10.2 19.6"/>
<path stroke="#00925a" d="M904.9 319l2-19.6M904.9 319l10.8 19.4M843.3 209.7l-15.2 2.8M843.3 209.7l2.8 18.3M878.6 244.1l-14.8 1.1M914 399.5l-8-20.1M914 399.5l-14.9 0.6M892.6 300.1l14.3-0.6M789.4 184.9l19.7 13.2M809.1 198.1l19.1 14.5M846.1 228l15.5-1.7M893.9 280.8l-14.5-18.2M863.8 245.2l-2.2-18.9M901.5 339.1l14.3-0.6M915.7 338.4l-4.1 20.2M911.7 358.7l-5.6 20.7"/>
<path stroke="#008041" d="M904.9 319l11.4-0.4M907.3 280.5l-13.4 0.3M843.3 209.7l-18.6-15M843.3 209.7l18.3 16.6M878.6 244.1l15.1 17.8M878.6 244.1l-16.9-17.7M906.8 299.5l9.4 19.2M916.3 318.7l-0.5 19.7M893.9 280.8l-0.2-18.9M879.4 262.5l14.3-0.6"/>
<path stroke="#314900" d="M946.2 477l0.7-19.2M946.2 477l-8 2.5M747.2 120.2l14.3-1.5M747.2 120.2l-5.7-7.3M747.2 120.2l-22.4-7.6M761.6 118.7l5.7 7.8M946.9 457.7l5.9 0.8M952.8 439.1l0.1 19.5M938.2 495l-8.8 2.2M938.2 495l-0-15.5M724.8 112.7l-17.1 1.2"/>
<path stroke="#394900" d="M946.2 477l6.7-18.4M946.2 477l-8 18M928.9 512.5l9.3-17.5M928.9 512.5l-10.6 17M702 107l22.8 5.7M702 107l5.8 6.9M761.6 118.7l-20.1-5.8M741.5 112.9l-16.7-0.3M938.2 495l5.5 0.7M938.2 495l-3.3 18.5M724.8 112.7l-6-6.4"/>
<path stroke="#2b3700" d="M946.2 477l6.3-3M946.2 477l-2.5 18.7M775.3 119l-13.7-0.3M775.3 119l6.1 6.9M958.1 439.8l-5.3 18.7M958.1 439.8l3.9-18.9M755.6 112.3l6 6.4M800.4 134.4l-5.9-7.4M781.3 125.9l13.1 1.1M952.8 458.5l5.5-3.2M952.8 458.5l-0.4 15.4"/>
<path stroke="#00c891" d="M839.4 481.8l-5-17.9M839.4 481.8l12.6-19.8M839.4 481.8l-19.2-1.8M820.2 480l-14.2 19M659.2 226.4l18.9-11.6M678.1 214.8l19.7-11.1"/>
<path stroke="#00b671" d="M839.4 481.8l18.1 1.3M694.5 185.3l3.2 18.3M694.5 185.3l21.7 8.9M852 462l5.5 21.1M857.5 483.1l12.1-20M869.6 463.1l11.1-20.6M734.5 185.8l-18.3 8.4"/>
<path stroke="#00c866" d="M839.4 481.8l4.2 17.5M811 519.6l-5-20.7M655.3 207.5l-19.1 12.2M655.3 207.5l19.6-11.7M843.6 499.3l-17.9 1.8M806 499l-15.3 18.5M636.1 219.7l23 6.8"/>
<path stroke="#00c87c" d="M839.4 481.8l-13.7 19.2M655.3 207.5l3.9 18.9M655.3 207.5l22.8 7.3M820.2 480l5.5 21.1M825.7 501l-19.7-2.1M678.1 214.8l-3.2-19M697.8 203.7l-22.8-7.9"/>
<path stroke="#7bb600" d="M708 611.4l18.5-12.5M708 611.4l-4.6-16.2M669 603l14.8-12.1M669 603l-5-17.5M516.5 250.5l-16.1-1.4M516.5 250.5l-17.8 16.6M516.5 250.5l-3.8-18.1M726.4 599l0.8 15.1M688.6 607.7l-4.7-16.8M688.6 607.7l14.8-12.5M498.7 267.1l16.5 1.7M498.7 267.1l-0.7 18.8M512.6 232.4l16.6 1.6"/>
<path stroke="#81a400" d="M708 611.4l19.2 2.6M708 611.4l4.3 14.9M708 611.4l-18.7 11.1M746.1 615.7l-18.9-1.6M746.1 615.7l18.6 0.5M509.8 215.4l2.8 17M509.8 215.4l16.1 1.1M727.2 614.1l4.2 14.3M727.2 614.1l-14.9 12.2M500.3 249.1l12.3-16.6M497 231.5l15.6 1M539.7 201.6l-16.3-1.3M525.9 216.5l-2.5-16.3"/>
<path stroke="#8fb600" d="M708 611.4l-19.4-3.7M630.1 590.7l19.4 6.7M482.5 322.8l-0.7-19.4M669 603l19.5 4.7M669 603l-19.5-5.7M482 284.5l16.7-17.4M482 284.5l16 1.4M688.6 607.7l0.7 14.8M688.6 607.7l-18.8 10.5M500.3 249.1l-1.6 18M498.7 267.1l-15.6-1M481.8 303.5l16.1-17.6"/>
<path stroke="#00ffb9" d="M666.7 453.5l14.7-14.6M666.7 453.5l23 5.1M666.7 453.5l-5.5-22.8M655.7 407.8l-17.6 17.3M655.7 407.8l-23.1-6M689.7 458.6l5.5 22.2M661.2 430.7l-23-5.6M632.6 401.8l-5.4-23.1M627.3 378.7l-5.5-24.1M621.8 354.6l-5.1-22.7"/>
<path stroke="#00ff9e" d="M666.7 453.5l5.5 22.4M666.7 453.5l-23-5.5M609.8 395.8l22.9 6M609.8 395.8l17.5-17.1M598.8 347.8l23 6.8M689.7 458.6l-17.5 17.3M661.2 430.7l-17.5 17.3M643.7 448l-5.5-22.9M638.2 425.1l-5.5-23.3M627.3 378.7l-23.2-7M621.8 354.6l-17.7 17.1"/>
<path stroke="#00ff82" d="M666.7 453.5l-14.7 14.4M620.8 442.3l17.4-17.1M609.8 395.8l5.3 23.3M609.8 395.8l-5.7-24.1M598.8 347.8l5.3 23.9M672.2 475.9l-20.2-8M652 467.8l-8.3-19.8M638.2 425.1l-23.1-6M615.1 419.1l17.5-17.3"/>
<path stroke="#494900" d="M561 658.4l3.1 7.8M561 658.4l-16.6-1.3M387.6 349.2l-6.2-5.9M796.1 654.8l14.3-11.2M796.1 654.8l20.7-8.4M796.1 654.8l-14.9 9.9M796.1 654.8l-2.1-7.4M796.1 654.8l-17.4 3.9M646.3 686.8l-21.9-4.5M646.3 686.8l19.4-3.3M646.3 686.8l-3.6-7.1M407.7 261.3l2.9 7.5M407.7 261.3l-7.5 21.1M407.7 261.3l11.5-13.9M519.5 151l-18.2 6.7M519.5 151l-1.5-7.3M519.5 151l18.2-13.6M892.5 581.1l7.8-17.1M892.5 581.1l-5.9-2M892.5 581.1l-14.5 14.6M862.5 609.4l9.2-16M862.5 609.4l-6.4-2.6M862.5 609.4l15.5-13.7M862.5 609.4l-18.7 11.6M862.5 609.4l-12.6 14M823.9 631.2l6.7 3.1M729.3 677.9l18.4-1.5M729.3 677.9l15.9-7.7M729.3 677.9l-2.7-7M729.3 677.9l-19.4 7.2M729.3 677.9l-22 1.1M760.8 661.2l2.8 7M602.8 676l-21.2-8M602.8 676l-17.8-1M602.8 676l3.8 6.3M602.8 676l21.6 6.3M602.8 676l18-1.8M685.2 678.2l-19.4 5.2M685.2 678.2l2.6 7M528.5 654.2l15.8 2.9M528.5 654.2l-3.9-9.2M426.5 554.7l-10.2-18.9M426.5 554.7l-10-7.1M426.5 554.7l1 11.2M426.5 554.7l13.4 7.7M426.5 554.7l13.7 19.6M407.3 516.2l8.9 19.6M407.3 516.2l-8.9-7.5M407.3 516.2l-0.6 12.2M407.3 516.2l-9.5-21.8M490.4 627l15.1 4.3M490.4 627l-2.8-10.7M490.4 627l-18.3-16.4M455.2 592.7l14.8 6.4M455.2 592.7l-0.9-11.3M455.2 592.7l-15.1-18.4M455.2 592.7l16.9 17.9M379.2 424.6l7.1 8.6M379.2 424.6l3.6-14.5M379.2 424.6l-2.6-23.3M379.2 424.6l-5.7-8.8M379.2 424.6l-2.2 15.1M379.2 424.6l4.5 23.8M375.7 377.9l5.3 8.7M375.7 377.9l5.3-14.4M375.7 377.9l0.8 23.4M390 471.9l-0.3 14.6M390 471.9l7.8 22.5M390 471.9l-6.3-23.5M390 471.9l-7.6-8.5M394.3 304.1l-4.2 22.3M394.3 304.1l5.9-21.8M394.3 304.1l-9.7 16.6M394.3 304.1l-4.6-5.8M455.2 196.5l-14.4 12.1M455.2 196.5l-12.3 18.3M455.2 196.5l2.5 6.5M455.2 196.5l13.9-15.9M455.2 196.5l16.1-9.7M432.1 234.2l10.9-19.4M432.1 234.2l-2.9-6.6M432.1 234.2l-12.8 13.2M484.1 165.9l1.8 5.7M484.1 165.9l17.2-8.2M597.7 120l-0.6-7.2M597.7 120l-20.8 1.9M632 106.9l-17.7-0.5M632 106.9l-17.3 5.8M632 106.9l0.7 7.3M632 106.9l17.9 2M632 106.9l17.9-4.6M556.7 125.6l-19 11.9M556.7 125.6l0.6 7.4M556.7 125.6l20.2-3.6M871.8 593.5l14.9-14.4M871.8 593.5l6.3 2.3M900.3 564l-13.7 15.1M900.3 564l13.1-16.6M900.3 564l6.1 1.2M886.6 579.1l-8.6 16.7M924.7 530.8l-11.3 16.6M913.4 547.5l-7 17.7M843.8 621.1l6.2 2.4M843.8 621.1l-13.2 13.3M850 623.5l-19.4 10.9M810.3 643.6l20.3-9.2M810.3 643.6l6.5 2.8M830.6 634.4l-13.8 12M781.2 664.7l-17.6 3.4M781.2 664.7l-2.5-6.1M747.8 676.4l-2.5-6.2M747.8 676.4l15.8-8.2M745.3 670.2l18.3-2.1M763.6 668.1l15.1-9.5M581.6 668l3.4 7M581.6 668l-17.5-1.9M585 675.1l-21-8.9M564.1 666.1l-19.7-9M624.4 682.3l-3.6-8.1M624.4 682.3l18.2-2.6M668.2 689.5l-2.5-6M709.9 685.1l-2.6-6.2M665.7 683.5l22 1.7M665.7 683.5l-23.1-3.8M687.8 685.2l19.6-6.3M540.9 647.1l3.4 10M544.4 657.1l-19.7-12M416.2 535.8l0.3 11.8M416.2 535.8l-9.5-7.4M427.5 565.8l12.6 8.4M398.4 508.7l-8.7-22.2M398.4 508.7l-0.6-14.3M524.6 645.1l-15.7-3.7M524.6 645.1l-19.1-13.7M509 641.4l-3.4-10M505.5 631.3l-17.9-15M487.6 616.3l-15.5-5.7M439.9 562.4l0.3 11.9M470 599.1l2.2 11.5M454.3 581.4l-14.2-7.2M381 386.6l-0-23.2M381 386.6l-4.5 14.6M381 363.5l-5.4-5.7M381 363.5l0.4-20.1M386.3 433.2l-2.7 15.2M382.8 410l-6.3-8.8M389.7 486.5l8.1 7.9M377 439.7l6.7 8.7M383.7 448.4l-1.3 15M390.1 326.4l-8.7 16.9M390.1 326.4l-5.5-5.7M410.6 268.8l-10.4 13.6M410.6 268.8l8.6-21.4M404 290.2l-3.8-7.9M400.2 282.3l-10.5 16M440.8 208.6l2.2 6.1M442.9 214.8l14.8-11.8M442.9 214.8l-13.7 12.8M416.8 241l2.4 6.3M429.2 227.5l-9.9 19.8M381.4 343.3l3.3-22.6M469.1 180.6l16.7-9M469.1 180.6l2.1 6.2M503.6 164.1l-2.3-6.4M485.9 171.6l15.4-13.9M485.9 171.6l-14.6 15.2M501.3 157.7l16.7-14M667.9 104.9l17.1-2.5M667.9 104.9l-18 4.1M667.9 104.9l-18-2.6M614.3 106.4l0.4 6.4M614.7 112.8l-17.7 0M597.1 112.8l-20.1 9.1M649.9 109l0-6.6M518 143.7l19.6-6.3M537.7 137.4l19.6-4.4M537.7 137.4l-1-6.5M557.3 133l19.7-11.1M576.9 121.9l-0.4-6.4"/>
<path stroke="#94db00" d="M494.2 402.8l19.2 6.9M494.2 402.8l13.7-17.1M518.9 482.2l21.3 7.6M518.9 482.2l13.3-12.6M581 533.1l-13.2 11.3M581 533.1l5.1 21.2M581 533.1l-23-6.2M505 443l13.8-13.1M505 443l20.2 7M586.1 554.4l13.6-11.6M558 526.9l-9.2-18.3M558 526.9l13.5-11.7M540.3 489.8l8.5 18.8M513.3 409.8l-14.1 13.2M518.8 429.9l-19.6-6.9M511.6 462.8l13.6-12.8M511.6 462.8l20.6 6.9M490 382.7l14.2-17.1M490 382.7l17.9 3.1"/>
<path stroke="#abdb00" d="M494.2 402.8l5 20.1M518.9 482.2l-7.3-19.5M505 443l-5.8-20M505 443l6.6 19.8M540.3 489.8l-13.3 11.5M548.8 508.5l-21.8-7.3"/>
<path stroke="#9dc800" d="M494.2 402.8l-4.2-20.2M494.2 402.8l-12.6 17.1M494.2 402.8l-18.1-7M630.1 590.7l-19.3-7.6M518.9 482.2l8 19M482.5 322.8l1.6 19.7M591.8 574.5l-5.7-20.2M591.8 574.5l13.3-11M535.7 519.8l22.3 7.1M535.7 519.8l13.1-11.3M486.6 362.5l3.3 20.1M486.6 362.5l-2.5-20M567.8 544.4l18.4 9.9M567.8 544.4l-9.8-17.5M586.1 554.4l-13 10.8M610.8 583l-5.7-19.5M610.8 583l13.4-11.3M545.1 537.8l12.9-10.9M499.2 423l-12.1 17.1M499.2 423l-17.6-3.1M481.8 303.5l16.3 1.5M490 382.7l-13.9 13.2M490 382.7l-17.6-7"/>
<path stroke="#00edac" d="M625.5 273.2l19.4 6M625.5 273.2l4.6 21.3M625.5 273.2l18.7-13.8M712.6 463.3l-17.4 17.5M712.6 463.3l5.7 22.1M634.9 316.5l-23.1-7M634.9 316.5l-18.2 15.4M763.9 493.3l-23.1-3.8M740.8 489.5l-22.5-4.1M630.1 294.6l-18.4 14.9"/>
<path stroke="#00ed92" d="M625.5 273.2l-18.5 14.6M723.7 506.9l17.1-17.5M723.7 506.9l-5.4-21.5M598.8 347.8l17.9-15.8M672.2 475.9l23 4.9M695.3 480.8l23.1 4.6M740.8 489.5l6.1 21.6M630.1 294.6l-23-6.8M607.1 287.8l4.7 21.7M611.7 309.5l4.9 22.5"/>
<path stroke="#00ed79" d="M625.5 273.2l-19.2-5.4M677.7 497.8l17.6-17M723.7 506.9l-22.9-4.2M723.7 506.9l23.3 4.2M589 303l22.8 6.5M598.8 347.8l-5.1-22.6M695.3 480.8l5.5 21.9M718.3 485.4l-17.5 17.3M607.1 287.8l-0.7-19.9M611.7 309.5l-18.1 15.7M616.7 332l-23-6.8"/>
<path stroke="#00db87" d="M625.5 273.2l-4.3-20.6M769.7 514.5l15.6-18.1M769.7 514.5l-5.8-21.2M806 499l-20.8-2.6M763.9 493.3l-16.9 17.8M644.3 259.4l-23-6.8M621.2 252.6l18.8-13.5M640.1 239.2l19.1-12.7"/>
<path stroke="#568000" d="M600.2 139.5l1.9 12.1M600.2 139.5l21.5 1M851.7 577.5l-1 13.3M851.7 577.5l14.7-0M851.7 577.5l-16.7 17.7M866.3 577.5l0.8-13.8M835 595.2l-16.6 3.3M835 595.2l0.7-13.7M602.1 151.6l-18.2-2.2M616.8 130.8l21.7 1.8M616.8 130.8l4.9 9.7"/>
<path stroke="#648000" d="M600.2 139.5l-16.3 9.9M600.2 139.5l16.6-8.7M600.2 139.5l-21.1 0.5M817.2 611.5l17.8-16.3M817.2 611.5l1.2-13M568 160.5l15.9-11.1M850.6 590.8l-15.7 4.4M833.3 607.8l1.6-12.7M818.4 598.5l-18.1 15.6M583.9 149.4l-20.9 1.3M583.9 149.4l-4.8-9.4"/>
<path stroke="#566d00" d="M600.2 139.5l-1.5-10.6M879.7 576.2l-13.4 1.2M879.7 576.2l1.5-13.2M633.7 123.4l-16.9 7.4M633.7 123.4l17-6.1M850.6 590.8l15.7-13.3M866.3 577.5l-1.6 12.7M893.7 561.4l-12.5 1.6M616.8 130.8l-18.1-1.9M616.8 130.8l-1.3-9.8"/>
<path stroke="#0068c8" d="M779.9 257.1l18.6 15.7M848.6 324.1l-15.7-17.7M848.6 324.1l-6.9 20.8M816.2 289.2l-0.1-19.6M816.2 289.2l17.3-2.6M833.7 366l17.5-2.1M833.7 366l8.8 19.4M798.5 272.7l-0.5-19.2M798.5 272.7l17.7-3.1M832.9 306.3l16.8-2.3M832.9 306.3l0.6-19.7M841.7 344.9l16.9-1.9M841.7 344.9l9.5 19.1"/>
<path stroke="#005adb" d="M779.9 257.1l0.5 18.6M814.5 408.7l-8.1-18.7M833.7 366l-9.1 21.3M742.6 277.1l18.9-10.5M780.4 275.7l-18.8-9M806.5 390l18.2-2.7M816.1 368.6l8.5 18.7M761.7 285.7l-0.1-19"/>
<path stroke="#007ec8" d="M779.9 257.1l-1-17.9M779.9 257.1l18-3.5M779.9 257.1l-19.2-9.6M848.6 324.1l10 18.9M867.7 362l-16.5 1.9M850.5 404.8l-7.9-19.4M798 253.5l18.2 16.1M816.1 269.6l17.4 17M858.6 342.9l-7.4 21M851.2 363.9l8.5 19.4M851.2 363.9l-8.6 21.4M859.7 383.4l-17.2 2"/>
<path stroke="#0071db" d="M779.9 257.1l-18.3 9.6M814.5 408.7l10.1-21.4M814.5 408.7l-21.3-3.6M742.6 277.1l-19.9-8.7M742.6 277.1l-0.6-19.6M824.7 387.3l8.3 19.5M824.7 387.3l17.9-1.9M761.6 266.7l-0.8-19.2M761.6 266.7l-19.5-9.2"/>
<path stroke="#009ca4" d="M847.7 247.4l-15.8 1.3M847.7 247.4l1.6 18.3M878.8 320.8l0.6-19.8M878.8 320.8l9.5 19.1M831.9 248.7l17.4 17M879.4 301.1l-14.4 1.3M879.4 301.1l-14.5-18.2M864.9 282.9l-15.6-17.3M888.3 340l-5.6 20.7"/>
<path stroke="#00a49a" d="M847.7 247.4l-17.3-15.9M847.7 247.4l16.2 16.8M812 216.5l-17 2.2M812 216.5l2 16.7M878.8 320.8l13.6-1.1M878.9 281.8l0.5 19.3M878.9 281.8l-14 1.1M896.6 359.4l-8.3-19.4M896.6 359.4l-13.9 1.2M831.9 248.7l-1.6-17.2M814 233.2l16.3-1.8M892.4 319.8l-13-18.7M892.4 319.8l-4.1 20.2M863.9 264.2l1 18.7M863.9 264.2l-14.6 1.5"/>
<path stroke="#00a489" d="M847.7 247.4l-1.6-19.4M882.7 400.7l16.5-0.6M812 216.5l-19.2-13.8M812 216.5l18.3 14.9M878.9 281.8l-15-17.6M896.6 359.4l4.9-20.4M896.6 359.4l-6.3 20.6M792.8 202.7l2.3 16M792.8 202.7l-17.4 2.8M830.3 231.4l-2.2-18.9M830.3 231.4l15.8-3.5M892.4 319.8l9.1 19.3M879.4 301.1l13.2-1M901.5 339.1l-13.2 0.9M890.3 380l15.7-0.6M890.3 380l8.8 20.1"/>
<path stroke="#009279" d="M847.7 247.4l16.1-2.1M878.9 281.8l13.7 18.3M892.4 319.8l0.2-19.6M863.9 264.2l-0.1-19M863.9 264.2l15.5-1.7"/>
<path stroke="#0052c8" d="M848.6 324.1l-16.4 2.1M816.2 289.2l-17.7-16.5M816.2 289.2l16.7 17.1M833.7 366l8-21.1M798.5 272.7l0.1 19M798.5 272.7l-18.1 2.9M832.2 326.2l0.8-19.9M832.2 326.2l9.6 18.7M815.9 308.7l17-2.4M841.7 344.9l-17 2.3"/>
<path stroke="#0072b6" d="M848.6 324.1l1.2-20M848.6 324.1l15.6-1.8M815.3 250.7l0.8 18.9M850 284.6l-16.5 2M849.8 304.1l-16.2-17.5M816.1 269.6l17.1-2.4M833.2 267.2l0.3 19.4"/>
<path stroke="#253700" d="M813 136.3l-12.7-1.9M813 136.3l6.5 8.3M964.5 401.9l-2.5-20.8M964.5 401.9l-4.2-0.9M848 158.5l6.1 9.4M848 158.5l-10.8-2.9M958.1 439.8l-5.4-0.8M958.1 439.8l-0.8-19.8M761.6 118.7l19.8 7.2M800.4 134.4l-19-8.5M854.2 167.9l10.1 3.5M830.9 146.8l6.3 8.8M830.9 146.8l-11.4-2.2M962 381.1l0.1-19.1M962 420.9l-4.7-0.9M962 420.9l-1.7-19.9"/>
<path stroke="#202400" d="M813 136.3l-12.6-9.6M813 136.3l6.6 0.5M964.5 401.9l3-4.7M964.5 401.9l1.3 15.3M775.3 119l-13.7-8M775.3 119l6.1-0.8M848 158.5l6.2 1.6M848 158.5l-10.8-10.7M965.2 363.8l0.4 19M958.1 439.8l4.7-3.6M794.5 127l-13.1-8.8M794.5 127l6-0.3M830.9 146.8l-11.3-10M830.9 146.8l6.3 1M965.6 382.8l1.9 14.4M962 420.9l3.8-3.7M962 420.9l0.8 15.3M958.3 455.3l-5.9 18.6"/>
<path stroke="#035b00" d="M834.3 177l-4.1-12M834.3 177l13 0.1M943.1 319.8l-7.7-0.7M903.8 244.8l11.8 17.8M903.8 244.8l-3.9-16.5M903.8 244.8l8.4 0.2M926.1 281.1l-10.5-18.5M926.1 281.1l9.2 19.1M871.8 208.4l12 1.6M871.8 208.4l-5.6-15.6M943.8 358.6l0.4-19.5M943.8 358.6l-1.8 19.7M830.3 165l-14.1 0.6M847.4 177.1l6.3 15M915.6 262.6l-3.3-17.6M935.4 319.1l-0.1-18.8M935.4 319.1l8.7 20M927.1 299.6l8.2 0.6M899.9 228.3l-11.3-2.2M888.6 226.1l-4.7-16M866.2 192.8l-12.5-0.8M947.5 399.1l-5.4-20.8M944.1 339l-8.2-0.6"/>
<path stroke="#006d09" d="M834.3 177l-14.1 1.3M834.3 177l19.3 15M903.8 244.8l2.5 17.4M938.8 398.1l-6.1-20.1M938.8 398.1l-6 21.8M797.3 155.5l-15.2 2.6M797.3 155.5l4.3 12.2M871.8 208.4l-18.1-16.4M943.8 358.6l-7.8-20.1M943.8 358.6l-8.7-0.3M820.3 178.3l-4.1-12.7M801.6 167.7l14.6-2M935.4 319.1l0.6 19.4M932.8 378.1l9.3 0.2M935.1 358.3l6.9 20.1"/>
<path stroke="#036d00" d="M834.3 177l-18.2-11.4M757.5 138.8l4.5 11.1M938.8 398.1l8.6 1M938.8 398.1l4.4 20M938.8 398.1l3.2-19.8M797.3 155.5l-19.6-9M797.3 155.5l18.9 10.2M925 441.6l11.3-1.6M777.7 146.5l4.4 11.6M777.7 146.5l-15.6 3.4M943.2 418.2l-10.4 1.7M936.3 440l-3.5-20"/>
<path stroke="#006d14" d="M834.3 177l5.1 15.7M903.8 244.8l-11.9-0.9M926.5 318.7l8.9 0.4M926.5 318.7l0.6-19.1M926.5 318.7l9.5 19.8M871.8 208.4l-13.6 0M871.8 208.4l4.1 17.2M917.5 299.3l9.6 0.3M917.3 280.5l-11-18.3M917.3 280.5l9.8 19.1M906.3 262.3l-14.4-18.3M839.4 192.7l14.3-0.6M888.6 226.1l3.4 17.9M888.6 226.1l-12.7-0.4M853.7 192.1l4.5 16.4M926.4 338.3l9.5 0.2M936 338.5l-0.9 19.8M932.8 378.1l2.3-19.8"/>
<path stroke="#1b6d00" d="M757.5 138.8l-4.9-9.9M757.5 138.8l15-3.2M757.5 138.8l-21.9-9.2M928.5 481.4l-11.3 1.4M928.5 481.4l-0.9-19.7M772.5 135.6l5.2 10.9M917.2 482.8l1.6 16.1M918.8 499l-12.1 1.2M938.1 460l-10.6 1.7M938.1 460l-1.8-20M735.6 129.6l4.9 10.8M735.6 129.6l-17.3 2.4"/>
<path stroke="#0f6d00" d="M757.5 138.8l20.2 7.7M757.5 138.8l-17 1.6M797.3 155.5l14.5-1.4M797.3 155.5l-4.9-11.3M777.7 146.5l14.7-2.3M943.2 418.2l-6.9 21.8M917.2 482.8l10.4-21.1M927.6 461.7l8.7-21.7"/>
<path stroke="#124900" d="M943.1 319.8l-0.6-18.4M943.1 319.8l6.3 1.1M943.1 319.8l8.2 20.1M859.3 178.5l-11.9-1.4M859.3 178.5l6.9 14.3M919.4 246l-7.2-1M919.4 246l4.2 17.1M894.5 212.8l5.4 15.5M894.5 212.8l-10.7-2.8M954.6 400.1l-4.5-20.8M830.3 165l12.5 0.8M842.8 165.8l4.6 11.3M942.4 301.4l-7.2-1.2M942.4 301.4l-8.7-19.3M899.9 228.3l7.7 0.7M907.6 229l4.7 16M933.8 282.1l-10.1-18.9M877.6 195l6.2 15.1M877.6 195l-11.4-2.1M951.2 339.9l-7.1-0.9M951.2 339.9l0.2 19.5"/>
<path stroke="#0c5b00" d="M943.1 319.8l-7.8-19.6M943.1 319.8l1.1 19.3M943.8 358.6l6.4 20.7M943.8 358.6l7.6 0.8M830.3 165l17.1 12.1M830.3 165l-18.5-11M847.4 177.1l18.8 15.7M816.2 165.7l-4.4-11.6M915.6 262.6l8 0.5M883.8 210l-17.6-17.2M947.5 399.1l-4.2 19.1M947.5 399.1l2.7-19.8M944.1 339l7.3 20.3M942 378.3l8.1 0.9"/>
<path stroke="#005b07" d="M903.8 244.8l-15.3-18.7M926.1 281.1l-8.8-0.6M926.1 281.1l1 18.5M871.8 208.4l16.7 17.6M915.6 262.6l1.7 17.9M915.6 262.6l-9.3-0.4M935.4 319.1l-8.3-19.4"/>
<path stroke="#00adb6" d="M882.7 400.7l-7-19.4M882.7 400.7l-15.6 2.1M777.4 221.9l17.6-3.2M777.4 221.9l-19.6-9.3M795 218.8l19 14.5M795 218.8l1.7 17.1M831.9 248.7l-17.9-15.4M888.3 340l-14.4 1.3M875.7 381.3l7-20.7M875.7 381.3l-8.6 21.4"/>
<path stroke="#00b6ab" d="M882.7 400.7l7.7-20.7M882.7 400.7l-9 20.6M777.4 221.9l-2.1-16.4M737.6 204.4l20.1 8.3M795 218.8l-19.7-13.2M775.3 205.6l-17.6 7.1M875.7 381.3l14.6-1.3M882.7 360.7l7.7 19.4M873.7 421.3l-16.3 2M873.7 421.3l-6.6-18.6"/>
<path stroke="#00b698" d="M882.7 400.7l7.7 21.2M863.4 441.8l10.3-20.5M737.6 204.4l17.8-7.7M775.3 205.6l-19.9-9M873.7 421.3l16.7 0.5M873.7 421.3l7 21.1M757.8 212.7l-2.3-16"/>
<path stroke="#0089db" d="M814.5 408.7l18.4-1.9M814.5 408.7l7.3 18.6M814.5 408.7l-13.3 16M702.5 260.4l20.2 8M741.1 238.6l1 18.9M832.9 406.8l9.6-21.4M760.8 247.4l-18.7 10.1M722.7 268.4l-0.7-19.4M722.7 268.4l19.4-10.9M722 249l20.1 8.5"/>
<path stroke="#008018" d="M938.8 398.1l-11.5 0.7M766.1 162.2l16-4.1M766.1 162.2l-4.1-12.3M925 441.6l-4.6-20.9M925 441.6l-13.4 0.8M786 171l-3.9-12.9M782 158.1l19.6 9.5M820.3 178.3l-18.7-10.7M820.3 178.3l19.2 14.4M932.8 378.1l-5.5 20.7M927.3 398.8l5.5 21.1M932.8 419.9l-12.4 0.7"/>
<path stroke="#249200" d="M851 548.3l15.9 0.9M851 548.3l0.7 15M851 548.3l-15.5 18.6M643.6 143.1l22 4.2M643.6 143.1l2.4 13.6M867 549.2l-1-16M867 549.2l14.3-15.7M665.5 147.3l-4.9-11.3M623.8 153.4l22.2 3.4"/>
<path stroke="#05a400" d="M851 548.3l-1.6-15.7M816.6 553l17.6-1.9M648.5 171.8l-2.6-15.1M648.5 171.8l-22.2-4M849.4 532.6l16.6 0.6M849.4 532.6l-15.2 18.5M864 517.1l2 16M834.3 551l-2-16M668 161.6l-22-4.9M626.3 167.8l2.9 15.7"/>
<path stroke="#149200" d="M851 548.3l14.9-15.2M879.9 517.3l1.4 16.3M879.9 517.3l14.8-0.2M892.7 500.8l2 16.3M866 533.1l15.3 0.4M665.5 147.3l17.2-6.4M665.5 147.3l-19.5 9.5"/>
<path stroke="#16a400" d="M851 548.3l-16.8 2.7M816.6 553l1.5 16.2M834.3 551l-16.1 18.1M607 180.3l19.3-12.5M646 156.7l-19.7 11.1"/>
<path stroke="#049200" d="M904.4 483.7l-11.7 17M687.5 153l17.9-5.5M687.5 153l-22-5.7M687.5 153l-4.8-12.1M879.9 517.3l12.8-16.5M879.9 517.3l-13.9 15.9M723.1 143.3l-17.7 4.2M705.4 147.5l-22.7-6.7M665.5 147.3l2.5 14.3"/>
<path stroke="#00920b" d="M904.4 483.7l-14.3 0.3M687.5 153l21.8 7.2M879.9 517.3l-2.2-16.5M723.1 143.3l4.1 12.1M892.7 500.8l-15 0.1M892.7 500.8l-2.6-16.7M705.4 147.5l21.8 8M705.4 147.5l3.9 12.6"/>
<path stroke="#048000" d="M904.4 483.7l12.8-0.9M904.4 483.7l2.4 16.4M925 441.6l2.5 20.1M723.1 143.3l17.4-2.9M762 149.9l-21.5-9.5M892.7 500.8l14.1-0.6M917.2 482.8l-1.7-20M915.5 462.9l12-1.2M744.8 152l-4.3-11.6"/>
<path stroke="#00800a" d="M904.4 483.7l11.2-20.9M925 441.6l-9.5 21.3M925 441.6l7.8-21.6M723.1 143.3l21.7 8.7M782 158.1l-20-8.2M762 149.9l-17.2 2.1"/>
<path stroke="#00921b" d="M904.4 483.7l-3.1-20.2M766.1 162.2l-21.3-10.2M890.1 484.1l11.2-20.6M915.5 462.9l-14.3 0.6M915.5 462.9l-3.9-20.5M748.7 164.9l-3.9-12.9M727.1 155.4l-17.8 4.7M727.1 155.4l17.7-3.4"/>
<path stroke="#475b00" d="M906.6 545.8l-12.9 15.6M906.6 545.8l11.8-16.3M667.8 112.5l17.1-3.4M667.8 112.5l-17.1 4.8M893.7 561.4l1.2-13.5M684.9 109l22.8 4.8M684.9 109l5.7 7.3"/>
<path stroke="#3e5b00" d="M906.6 545.8l-11.7 2.1M906.6 545.8l1.3-14.6M667.8 112.5l22.8 3.9M667.8 112.5l5 8.1M928.9 512.5l0.5-15.3M928.9 512.5l-9.7 2.1M907.9 531.2l10.5-1.8M919.2 514.6l-0.9 14.8M724.8 112.7l5.6 7.8M707.7 113.8l-17.1 2.5"/>
<path stroke="#414900" d="M906.6 545.8l-6.3 18.2M906.6 545.8l6.8 1.7M667.8 112.5l0-7.6M928.9 512.5l6 1M928.9 512.5l-4.2 18.3M702 107l16.8-0.7M702 107l-17 2.1M702 107l-17-4.6M918.3 529.5l6.4 1.4M918.3 529.5l-4.9 18M684.9 109l-17.1-4.1M684.9 109l0-6.6"/>
<path stroke="#00e1ed" d="M757.5 471.4l15.2-15.3M757.5 471.4l-7.6-19M664.4 285.7l-14.8 15.2M664.4 285.7l-0.7-20M772.6 456.1l21.3 3.1M772.6 456.1l-22.7-3.7M727.4 448.3l22.5 4.1M649.6 300.9l19.8 6.9M649.6 300.9l4.9 22.4M663.8 265.7l19.7 6.9"/>
<path stroke="#00eddf" d="M757.5 471.4l21.6 3.4M757.5 471.4l-22.2-3.8M712.6 463.3l14.8-15M664.4 285.7l-19.5-6.5M634.9 316.5l14.7-15.7M772.6 456.1l6.5 18.6M735.3 467.6l-7.8-19.3M735.3 467.6l14.6-15.2M644.9 279.2l4.7 21.7M644.9 279.2l18.8-13.5"/>
<path stroke="#00edc5" d="M757.5 471.4l6.4 21.9M757.5 471.4l-16.6 18.1M712.6 463.3l22.6 4.3M634.9 316.5l-4.8-22M735.3 467.6l5.6 21.9M735.3 467.6l-16.9 17.8M644.9 279.2l-14.8 15.4M644.9 279.2l-0.7-19.8M649.6 300.9l-19.5-6.3M644.3 259.4l19.5 6.3"/>
<path stroke="#0069ff" d="M724.8 394l14-15.1M714.7 346.5l5.2 23.7M714.7 346.5l-5.5-23.3M738.8 378.9l9.4 18.8M738.8 378.9l-18.9-8.8M719.9 370.1l13.8-15"/>
<path stroke="#0084ff" d="M724.8 394l23.4 3.7M724.8 394l-4.9-23.8M714.7 346.5l-14.7 15.5M714.7 346.5l-20.1-8.2M748.2 397.7l-14.7 15.9M719.9 370.1l-14.9 15.7M719.9 370.1l-19.9-8.2M709.2 323.1l-14.6 15.1"/>
<path stroke="#00a0ff" d="M724.8 394l8.7 19.6M724.8 394l-14.3 15.1M724.8 394l-19.7-8.2M685.1 377.7l14.9-15.7M674.3 330.3l20.3 7.9M705.1 385.8l-5.1-23.8M688.9 315.1l5.7 23.2M700 362l-20.3-8.1M700 362l-5.4-23.7M679.7 353.9l14.8-15.6"/>
<path stroke="#639200" d="M782.8 615.7l18.5-14.9M782.8 615.7l-0-13.8M537.7 185.9l17.3 1.1M568 160.5l18 1.8M568 160.5l2.2 13.7M801.3 600.7l17.1-2.3M586 162.2l-2.1-12.9M552.6 172.7l17.6 1.5M552.6 172.7l2.4 14.4"/>
<path stroke="#729200" d="M782.8 615.7l17.5-1.6M782.8 615.7l-18.1 0.5M537.7 185.9l-14.3 14.3M537.7 185.9l14.9-13.3M568 160.5l-15.4 12.2M801.3 600.7l-1 13.4"/>
<path stroke="#728000" d="M782.8 615.7l4.5 12.1M817.2 611.5l16.2-3.7M817.2 611.5l-16.9 2.6M817.2 611.5l-12.7 14M568 160.5l-5-9.8M568 160.5l-20.8 2.1M800.3 614.1l4.2 11.4M800.3 614.1l-13 13.7M552.6 172.7l-5.4-10.1"/>
<path stroke="#829200" d="M782.8 615.7l-14.1 13.5M537.7 185.9l-20.7 4.1M537.7 185.9l-5.6-10.5M746.1 615.7l4.2 13.6M509.8 215.4l13.6-15.2M509.8 215.4l-19.9 5.6M509.8 215.4l-6.7-10.4M764.7 616.2l4 13M764.7 616.2l-14.3 13.1M523.4 200.2l-20.3 4.8M523.4 200.2l-6.4-10.1M552.6 172.7l-20.5 2.8"/>
<path stroke="#05b600" d="M779.2 554.4l1.8 16.8M779.2 554.4l19.1-0.3M610.1 196.6l-18.8-4.2M610.1 196.6l-3-16.4M610.1 196.6l-15.4 13.4M816.6 553l-18.4 1.1M780.9 571.2l17.3-17.1M591.3 192.4l3.3 17.6M607 180.3l22.1 3.3"/>
<path stroke="#06c800" d="M779.2 554.4l-17 16M550.8 255.5l18.1 3.5M734.7 549l5.2 18.7M579.6 224.3l-14.6 15.2M579.6 224.3l15.1-14.3M762.1 570.4l-4.9-18.1M739.8 567.7l17.4-15.4M568.9 259l-4-19.5M564.9 239.5l18.3 3.7"/>
<path stroke="#00c810" d="M779.2 554.4l16.3-16.9M779.2 554.4l-21.9-2.2M610.1 196.6l3.4 17.6M734.7 549l22.5 3.2M579.6 224.3l3.7 18.9M579.6 224.3l18.7 3.9M795.5 537.5l2.7 16.6M613.5 214.2l-18.8-4.2M598.2 228.2l-3.6-18.2"/>
<path stroke="#00c825" d="M779.2 554.4l-4.4-19.5M795.5 537.5l18.7-0.8M795.5 537.5l-20.7-2.6M774.8 534.9l-17.6 17.3M583.2 243.2l15-15M613.5 214.2l-15.3 14M613.5 214.2l19.1-12.8"/>
<path stroke="#36db00" d="M608.6 508.6l4.9 22M608.6 508.6l-14 12.6M659.2 566.8l14.6-13.3M659.2 566.8l-5.5-20.2M516.9 328.3l18.4 3.2M516.9 328.3l16.8-17.3M522.5 368.6l15.5-16.9M522.5 368.6l20.3 6.8M613.5 530.5l14.9-13.3M613.5 530.5l19.9 8.3M678.9 572.7l-5.1-19.1M633.4 538.9l20.3 7.7M538 351.7l-18.7-3.4M519.3 348.4l16-16.8M532.7 290.7l1 20.3"/>
<path stroke="#07ed00" d="M608.6 508.6l14.3-13.1M576 429.9l-15.1 13.5M576 429.9l-21.6-6.5M576 429.9l7.6 20.2M554.3 335.1l-1.8-20.6M554.3 335.1l-16.3 16.6M648.3 525.4l20 7.4M648.3 525.4l-19.9-8.1M591.5 470l8.4 19.5M591.5 470l-8-19.9M563.8 382.3l-21-6.9M563.8 382.3l-15.6 17.2M622.9 495.5l5.5 21.8M622.9 495.5l-23-5.9M642.8 504l-14.4 13.3M560.8 443.4l22.7 6.7M554.4 423.3l15.2-17.2M599.9 489.5l14.4-13.3M538 351.7l20.7 6.8M558.7 358.6l-16 16.8M548.2 399.5l21.3 6.6"/>
<path stroke="#20ed00" d="M608.6 508.6l19.7 8.7M608.6 508.6l-8.7-19M591.5 470l-23-6.4M591.5 470l-14.8 13.6M560.8 443.4l-6.5-20.1M560.8 443.4l7.7 20.2M554.4 423.3l-6.1-23.8M599.9 489.5l-23.2-5.9M583.5 450.1l-15 13.5M538 351.7l4.7 23.7M542.7 375.4l5.5 24.1"/>
<path stroke="#3aed00" d="M608.6 508.6l-23.4-5.6M533.4 416.6l20.9 6.7M533.4 416.6l14.8-17.1M546.2 456.7l14.6-13.3M546.2 456.7l22.3 6.9M585.3 503l14.6-13.5M585.3 503l-8.5-19.4M560.8 443.4l-21.3-6.6M539.5 436.8l14.8-13.4M568.6 463.6l8.2 20M527.5 392.6l15.3-17.2M527.5 392.6l20.8 6.9"/>
<path stroke="#06db00" d="M688.4 539.5l-20-6.7M688.4 539.5l5.2 19.6M688.4 539.5l-14.6 14.1M554.3 335.1l-19.1-3.6M734.7 549l-17.9 14.9M551.4 294.3l1.2 20.2M551.4 294.3l-0.6-19.7M668.4 532.8l5.4 20.8M693.6 559.1l18.1-14.4M711.7 544.8l5.1 19.1M552.6 314.5l-17.3 17.1M568.9 259l-18.1 15.6M569.1 278.3l-18.3-3.8"/>
<path stroke="#00ed13" d="M688.4 539.5l-5.3-20.5M576 429.9l22.2 6.3M576 429.9l-6.4-23.7M554.3 335.1l17-16.3M554.3 335.1l4.4 23.5M648.3 525.4l14.7-13.5M648.3 525.4l-5.5-21.4M591.5 470l22.8 6.2M591.5 470l14.5-13.7M563.8 382.3l-5.1-23.7M563.8 382.3l5.8 23.8M668.4 532.8l-5.4-20.9M668.4 532.8l14.7-13.8M622.9 495.5l19.9 8.5M622.9 495.5l-8.6-19.3M598.2 436.2l-14.6 13.9M606 456.3l-22.5-6.2M552.6 314.5l18.8 4.4"/>
<path stroke="#00db11" d="M688.4 539.5l23.3 5.2M734.7 549l-23-4.2M551.4 294.3l18.6 4.2M551.4 294.3l17.7-15.9M552.6 314.5l17.4-16.1M568.9 259l0.2 19.4M568.9 259l14.3-15.7"/>
<path stroke="#00db29" d="M688.4 539.5l17.8-15.9M734.7 549l17.8-16.8M734.7 549l-5.3-20.6M587.4 263.1l-18.5-4.1M587.4 263.1l-18.3 15.2M587.4 263.1l-4.2-19.9M711.7 544.8l-5.5-21.1M711.7 544.8l17.7-16.3M757.2 552.2l-4.8-20M588 282.8l-18.9-4.5M570 298.4l-0.8-20.1M602.1 247.6l-18.9-4.4"/>
<path stroke="#87c800" d="M630.1 590.7l-5.8-18.9M630.1 590.7l14.5-11.4M482.5 322.8l15.5-17.8M482.5 322.8l16.8 2.5M486.6 362.5l17.5 3M486.6 362.5l14.6-17.3M586.1 554.4l19 9.2M605.1 563.5l19.1 8.2M644.6 579.2l5 18.1M664.1 585.5l-14.6 11.8M497.9 285.9l0.1 19.1M499.3 325.4l-15.1 17.2M501.2 345.2l-17.1-2.7"/>
<path stroke="#a2b600" d="M630.1 590.7l-19.8 8.1M630.1 590.7l0.4 15.8M482.5 322.8l-15.9-7.8M482.5 322.8l-14.9 12.7M591.8 574.5l-19.6 6.8M591.8 574.5l-0.7 16M669 603l0.7 15.2M669 603l-19 9.8M482 284.5l1-18.4M482 284.5l-0.2 18.9M482 284.5l-15.4 11.4M610.8 583l-0.5 15.7M610.8 583l-19.6 7.5M649.5 597.3l0.5 15.5M649.5 597.3l-19 9.2M481.8 303.5l-15.2 11.6M481.8 303.5l-15.3-7.6"/>
<path stroke="#7f8000" d="M632.8 647.2l-18.6 5.2M632.8 647.2l3.1 12.6M632.8 647.2l22.7 6.3M427.2 295l12.9-12.5M427.2 295l-1.3 19.5M427.2 295l-11.7 13M427.2 295l6.3-22.5M427.2 295l-6.8-9.3M754.1 641.4l14.6-12.3M754.1 641.4l-3.7-12.2M754.1 641.4l-18.7-0.2M754.1 641.4l-15.1 11M754.1 641.4l18.8-0.9M716.4 639.8l3.8 12M556.2 639l17.8-2M556.2 639l-1.6-11.4M556.2 639l-19.4-12.9M592.5 633.6l-18.4 3.5M592.5 633.6l1.6 11.8M596 656l18.2-3.6M596 656l-1.9-10.6M678.3 658.2l22.7 2.9M678.3 658.2l19.1-8.4M678.3 658.2l-3.9-12.2M678.3 658.2l-22.8-4.6M678.3 658.2l-19.6 7.2M518.3 611.8l-16.6-3.3M518.3 611.8l18.6 14.3M518.3 611.8l17.3 2.2M518.3 611.8l-0.9-13.4M518.3 611.8l-17.9-16.3M454.9 540.1l-13.6-5M454.9 540.1l-0.6 14.8M454.9 540.1l13.8 19.4M454.9 540.1l-9.5-19.3M483.6 578l-15-18.4M483.6 578l-14.9-4.1M483.6 578l0.7 13.6M483.6 578l16.8 17.6M483.6 578l16.4 3.5M437 500.9l-4.8 14.6M437 500.9l-15-6.8M404.9 321.4l9.6 6.3M425.8 334.4l-11.2-6.7M405.2 361.7l-0.8-20.3M405.2 361.7l11.2 6.6M405.2 361.7l9.6-13.8M405.2 361.7l0.9 23.4M419.6 456.5l-13.2-7.3M419.6 456.5l-6.3 15.3M419.6 456.5l-6.3-23.9M408.7 408.5l-2.5-23.4M408.7 408.5l-11.3-6.5M408.7 408.5l-7.8 16.7M408.7 408.5l4.6 24.1M441.3 250.8l-7.8 21.7M441.3 250.8l5.8 9.5M441.3 250.8l14.5-11.9M471.2 227.7l-9.3 20.9M471.2 227.7l-5.5-9.1M471.2 227.7l-15.5 11.1M471.2 227.7l12.6-16.5M497.2 195.6l-18.6 6.8M497.2 195.6l-13.5 15.6M497.2 195.6l5.9 9.5M497.2 195.6l19.7-5.5M497.2 195.6l14.5-15.3M527.1 166.1l4.9 9.3M527.1 166.1l20.1-3.6M527.1 166.1l-15.4 14.2M804.4 625.5l-17.2 2.3M787.3 627.8l-18.6 1.4M787.3 627.8l-14.5 12.8M768.7 629.2l4.2 11.4M720.1 651.7l15.2-10.5M720.1 651.7l18.9 0.7M720.1 651.7l-19.1 9.3M720.1 651.7l-22.7-2M735.4 641.2l3.6 11.2M575.9 648.2l-1.8-11.1M575.9 648.2l18.2-2.8M574.1 637.1l-19.4-9.5M574.1 637.1l20 8.3M554.7 627.6l-17.8-1.5M554.7 627.6l-19-13.6M614.2 652.4l-20.2-7M614.2 652.4l-1.7-11.4M614.2 652.4l21.6 7.4M594.1 645.4l18.4-4.4M635.9 659.8l19.6-6.3M701.1 661l-3.6-11.3M674.4 646l-18.9 7.6M655.5 653.6l3.2 11.8M501.7 608.5l-1.3-13M536.9 626.2l-1.2-12.2M441.3 535.1l13 19.8M441.3 535.1l-9.1-19.6M441.3 535.1l4.1-14.3M454.3 555l14.3 4.6M454.3 555l14.5 18.9M468.6 559.6l0.1 14.3M484.4 591.6l16.1 4M517.5 598.4l-17-2.9M500.4 595.6l-0.4-14.1M432.2 515.6l13.2 5.3M432.2 515.6l-10.2-21.4M440.1 282.4l-6.6-10M440.1 282.4l7.1-22.1M404.4 341.4l10.2-13.7M404.4 341.4l10.5 6.5M425.8 314.5l-11.3 13.2M425.8 314.5l-10.4-6.5M414.5 327.7l0.9-19.7M414.5 327.7l0.3 20.3M416.5 368.3l-10.4 16.8M422 494.1l-8.7-22.3M422 494.1l5.5-15.1M406.4 449.2l7 22.6M406.4 449.2l-5.5-24.1M406.4 449.2l6.9-16.6M413.4 471.8l14.2 7.2M395.6 378.5l10.5 6.6M418.1 391.8l-12-6.7M406.1 385.1l-8.7 16.9M400.9 425.2l12.4 7.5M462 248.6l-14.8 11.7M462 248.6l-6.2-9.7M433.5 272.5l13.7-12.2M433.5 272.5l-13.1 13.2M447.1 260.3l8.6-21.4M465.8 218.6l-10 20.3M465.8 218.6l18-7.4M478.6 202.3l5.2 8.9M483.8 211.2l19.3-6.2M517 190.1l15.1-14.6M517 190.1l-5.2-9.8M563 150.7l-15.8 11.9M532.1 175.5l15.1-12.9M532.1 175.5l-20.3 4.8M547.2 162.6l-4.7-9"/>
<path stroke="#00f2ff" d="M645 361.7l20 7.9M645 361.7l14.6-15.8M696 424l8.4 19.8M696 424l-20.1-8.1M704.4 443.8l14.7-15.1M704.4 443.8l23 4.5M675.9 415.9l-5.5-23.2M675.9 415.9l14.7-15.1M665.1 369.6l5.4 23.1M665.1 369.6l-5.4-23.7M654.6 323.2l5.1 22.7"/>
<path stroke="#00fff0" d="M645 361.7l5.3 23M645 361.7l-5.2-22.8M696 424l-14.6 14.8M712.6 463.3l-8.2-19.5M655.7 407.8l20.2 8.2M655.7 407.8l14.7-15.1M634.9 316.5l19.7 6.7M681.4 438.8l23 4.9M681.4 438.8l-5.5-22.9M665.1 369.6l-14.7 15.1M670.4 392.7l-20.1-8M639.9 338.9l14.7-15.7M639.9 338.9l19.8 7"/>
<path stroke="#00ffd5" d="M645 361.7l-17.8 17M645 361.7l-23.3-7.1M712.6 463.3l-22.9-4.7M655.7 407.8l5.5 23M655.7 407.8l-5.4-23M634.9 316.5l5 22.4M681.4 438.8l8.3 19.7M681.4 438.8l-20.2-8.1M704.4 443.8l-14.7 14.8M661.2 430.7l14.7-14.8M650.3 384.7l-17.7 17.1M650.3 384.7l-23.1-6M639.9 338.9l-18.1 15.7M639.9 338.9l-23.2-7"/>
<path stroke="#0061ed" d="M703.4 300.3l19.3 8M771 401.4l22.2 3.7M771 401.4l-22.8-3.7M742.6 277.1l-19.4 11.2M806.5 390l-13.3 15.1M793.2 405.1l-8.5-18.7M762 382.6l-13.8 15.1M722.7 308.2l-13.5 14.9M722.7 308.2l0.5-19.9M728.3 331.4l-19.1-8.3M723.2 288.3l19.1 8.3"/>
<path stroke="#007bed" d="M703.4 300.3l5.8 22.9M703.4 300.3l19.8-11.9M771 401.4l8.4 19.6M771 401.4l-14.3 15.9M793.2 405.1l8 19.6M793.2 405.1l-13.8 15.9M748.2 397.7l8.5 19.6M709.2 323.1l-20.3-8M723.2 288.3l-20.2-8.3M723.2 288.3l-0.5-19.9"/>
<path stroke="#0094ed" d="M703.4 300.3l-14.5 14.8M703.4 300.3l-19.4-7.5M703.4 300.3l-0.4-20.2M787.2 440.5l-7.8-19.5M741.9 433.1l14.8-15.8M801.2 424.7l-21.8-3.6M733.5 413.6l23.2 3.7M779.4 421l-14.5 15.9M779.4 421l-22.7-3.7M764.9 436.9l-8.2-19.6M703 280l19.7-11.6"/>
<path stroke="#00ed2c" d="M576 429.9l16.6-17M554.3 335.1l21.9 6.2M637.4 481.9l-14.5 13.6M637.4 481.9l5.4 22.1M637.4 481.9l-23.1-5.7M563.8 382.3l22.7 6.7M563.8 382.3l17.2-17.4M657.5 490.1l-14.7 13.9M663 511.9l20.1 7.2M663 511.9l-20.2-7.9M683.1 519l23.1 4.6M629 462.2l-14.7 13.9M614.3 476.2l-8.3-19.9M598.2 436.2l7.8 20.1M570 298.4l1.4 20.4M571.4 318.8l4.9 22.4M592.6 412.9l-23.1-6.8M558.7 358.6l17.6-17.3M558.7 358.6l22.3 6.4M569.6 406.1l16.9-17.1"/>
<path stroke="#31c800" d="M550.8 255.5l-18.5 15.7M550.8 255.5l-17.5-2.8M550.8 255.5l-4.5-19M744.5 585.2l-4.7-17.6M698.6 577.7l-5-18.6M698.6 577.7l18.2-13.8M693.6 559.1l-14.7 13.6M721.7 582.1l-5-18.2M721.7 582.1l18.1-14.4M532.3 271.2l18.5 3.3M532.3 271.2l0.4 19.5M546.3 236.4l18.6 3.1"/>
<path stroke="#1bc800" d="M550.8 255.5l-0 19.1M550.8 255.5l14.1-16M579.6 224.3l-18.7-3.4M762.1 570.4l-22.3-2.7M716.8 563.9l23 3.8M564.9 239.5l-4.1-18.6"/>
<path stroke="#00d0db" d="M700.8 223.3l0.9 18.2M828.5 445.7l-13.8 16.1M814.7 461.8l-20.7-2.6M814.7 461.8l-6.3-18.6M663.8 265.7l19.1-12.7M701.7 241.4l-18.9 11.6M701.7 241.4l19.4-10.9"/>
<path stroke="#00dbce" d="M700.8 223.3l-18.8 11.1M800 477.6l14.6-15.8M800 477.6l-6.1-18.4M663.1 246.4l0.7 19.3M663.1 246.4l19.7 6.6M834.3 463.9l-19.7-2.1M793.9 459.2l-14.9 15.5M701.7 241.4l-19.7-7.1M682.8 253.1l-0.8-18.7"/>
<path stroke="#00c8bd" d="M700.8 223.3l18.6-10M828.5 445.7l5.8 18.2M863.4 441.8l-17 2.1M863.4 441.8l-6-18.5M737.6 204.4l1.9 16.7M834.3 463.9l12.1-20M719.4 213.3l20.2 7.8M719.4 213.3l1.7 17.2"/>
<path stroke="#00bec8" d="M700.8 223.3l20.3 7.2M828.5 445.7l17.9-1.8M846.4 443.9l-6.4-18.6M846.4 443.9l11-20.5M857.4 423.4l9.7-20.6M757.8 212.7l1.8 17.1M757.8 212.7l-18.2 8.4M739.6 221l-18.5 9.5"/>
<path stroke="#00c8a7" d="M700.8 223.3l-22.7-8.5M700.8 223.3l-3-19.6M863.4 441.8l-11.5 20.2M737.6 204.4l-18.3 8.9M834.3 463.9l17.6-1.9M834.3 463.9l-14.2 16M846.4 443.9l5.5 18.1M719.4 213.3l-21.6-9.6M719.4 213.3l-3.2-19"/>
<path stroke="#6fa400" d="M537.7 185.9l2.1 15.6M746.1 615.7l-0.6-14.7M746.1 615.7l18.3-13.7M745.5 601l-18.3 13.1M764.7 616.2l-0.2-14.2M764.7 616.2l18.1-14.3M512.6 232.4l13.3-16M539.7 201.6l-13.9 14.9"/>
<path stroke="#00b622" d="M610.1 196.6l22.5 4.8M846.9 516.2l-14.6 18.8M648.5 171.8l3.3 17.1M648.5 171.8l23 6M829.4 518.2l2.9 16.8M832.3 535l-18.1 1.6M632.6 201.4l-3.4-17.9M629.2 183.5l22.7 5.4"/>
<path stroke="#00b60e" d="M610.1 196.6l19.1-13.1M816.6 553l15.7-17.9M816.6 553l-2.4-16.3M648.5 171.8l-19.4 11.7M814.2 536.7l-16 17.4"/>
<path stroke="#00a40d" d="M687.5 153l-19.5 8.7M879.9 517.3l-15.9-0.1M648.5 171.8l19.5-10.2M849.4 532.6l14.6-15.5M849.4 532.6l-17.1 2.4"/>
<path stroke="#00a41f" d="M687.5 153l3.6 15.4M846.9 516.2l2.5 16.4M846.9 516.2l17.1 0.9M861.2 500.3l2.8 16.8M877.7 500.8l12.4-16.8M877.7 500.8l-13.6 16.3M709.3 160.1l-18.2 8.3M668 161.6l23.1 6.8M668 161.6l3.5 16.2"/>
<path stroke="#515b00" d="M667.8 112.5l-18-3.5M879.7 576.2l-15 13.9M879.7 576.2l14-14.8M879.7 576.2l-7.9 17.3M879.7 576.2l6.9 2.9M633.7 123.4l-1-9.1M893.7 561.4l6.6 2.6M893.7 561.4l-7 17.7M650.7 117.3l-18-3M650.7 117.3l-0.9-8.3"/>
<path stroke="#0013db" d="M780.3 294.8l-0.6 19.6M815 328.6l-17.9 2.8M779.7 314.5l18.4-3M779.7 314.5l17.4 17M798.1 311.5l-1 20M797 331.4l9.8 18.4M797 331.4l-8.6 21.4M806.8 349.9l-18.4 3"/>
<path stroke="#002bdb" d="M780.3 294.8l17.8 16.6M780.3 294.8l18.3-3.1M780.3 294.8l-19 10.6M780.3 294.8l-18.6-9.1M815 328.6l-16.9-17.2M815 328.6l1-19.9M815 328.6l-8.1 21.2M815 328.6l9.8 18.6M797.8 371.4l9.1-21.5M797.8 371.4l18.3-2.7M798.1 311.5l0.5-19.7M798.1 311.5l17.9-2.8M806.8 349.9l17.9-2.7M806.8 349.9l9.3 18.8M761.3 305.4l0.4-19.7"/>
<path stroke="#0042db" d="M780.3 294.8l0.1-19.2M815 328.6l17.2-2.5M833.7 366l-9-18.8M833.7 366l-17.6 2.6M797.8 371.4l8.7 18.6M742.6 277.1l19.1 8.6M798.6 291.8l-18.2-16.1M798.6 291.8l17.4 17M780.4 275.7l-18.7 10.1M832.2 326.2l-7.4 21M824.7 347.2l-8.6 21.4M806.5 390l9.6-21.4"/>
<path stroke="#003dc8" d="M816.2 289.2l-17.6 2.6M816.2 289.2l-0.3 19.5M832.2 326.2l-16.2-17.5"/>
<path stroke="#009ab6" d="M815.3 250.7l16.6-2.1M815.3 250.7l-1.3-17.5M815.3 250.7l-18.6-14.9M777.4 221.9l19.4 13.9M878.8 320.8l-13.8-18.4M878.8 320.8l-14.6 1.4M878.8 320.8l-4.9 20.4M850 284.6l15 17.8M850 284.6l14.9-1.7M850 284.6l-0.7-18.9M867.7 362l8 19.3M867.7 362l15-1.4M867.7 362l6.2-20.8M831.9 248.7l1.3 18.6M814 233.2l-17.3 2.6M865 302.4l-0.8 19.9M864.2 322.3l9.7 19M849.3 265.6l-16.1 1.6M875.7 381.3l-16 2M882.7 360.7l-8.8-19.4"/>
<path stroke="#0086b6" d="M815.3 250.7l-17.4 2.8M815.3 250.7l17.9 16.5M850 284.6l-0.2 19.5M850 284.6l-16.8-17.3M867.7 362l-9.1-19.1M849.8 304.1l15.2-1.7M849.8 304.1l14.4 18.2M864.2 322.3l-5.5 20.6M873.9 341.3l-15.2 1.6"/>
<path stroke="#00a9c8" d="M777.4 221.9l1.5 17.2M777.4 221.9l-17.8 7.8M828.5 445.7l11.5-20.4M850.5 404.8l-10.5 20.6M850.5 404.8l6.9 18.6M850.5 404.8l16.6-2M741.1 238.6l18.4-8.8M741.1 238.6l-1.6-17.5M741.1 238.6l-20-8.1M778.9 239.1l17.8-3.3M778.9 239.1l-19.4-9.4M840 425.3l17.4-2M867.1 402.8l-7.4-19.4M759.5 229.7l-20-8.7"/>
<path stroke="#294900" d="M786.8 134.1l13.5 0.2M786.8 134.1l-5.5-8.2M747.2 120.2l20 6.3M800.4 134.4l6.1 9.2M781.3 125.9l-14 0.6M946.9 457.7l5.9-18.6M952.8 439.1l4.5-19"/>
<path stroke="#224900" d="M786.8 134.1l-19.6-7.6M786.8 134.1l19.6 9.4M825.3 154.2l11.9 1.4M825.3 154.2l-5.7-9.6M957.6 360.4l-0.7 19.8M945.9 438.1l6.8 1M954.6 400.1l2.7 20M954.6 400.1l5.7 0.9M854.2 167.9l-11.4-2.1M842.8 165.8l-5.5-10.2M819.6 144.6l-13.1-1.1M952.8 439.1l-1.8-19.9M951 419.1l6.3 0.9M960.3 401l-3.5-20.8"/>
<path stroke="#205b00" d="M786.8 134.1l-14.3 1.5M786.8 134.1l5.5 10M945.9 438.1l5-19M945.9 438.1l-7.8 21.9M752.6 128.9l19.9 6.7M806.4 143.5l5.3 10.5M806.4 143.5l-14.1 0.6"/>
<path stroke="#2a5b00" d="M747.2 120.2l5.3 8.6M945.9 438.1l1 19.6M928.5 481.4l0.9 15.8M928.5 481.4l9.7-2M713.3 122.1l17.1-1.6M752.6 128.9l14.7-2.3M752.6 128.9l-22.2-8.4M767.3 126.5l5.2 9.1M946.9 457.7l-8.8 2.2M938.2 479.4l-0-19.5M735.6 129.6l-5.2-9.1"/>
<path stroke="#345b00" d="M747.2 120.2l-16.8 0.3M713.3 122.1l-5.6-8.2M713.3 122.1l-22.6-5.7M946.9 457.7l-8.7 21.7M929.4 497.2l8.8-17.8M929.4 497.2l-10.2 17.4M907.9 531.2l11.3-16.6M730.4 120.5l-22.7-6.7"/>
<path stroke="#193700" d="M859.3 178.5l10.7 2.7M859.3 178.5l-5.2-10.6M954.4 322.3l-5-1.4M940 283.6l7.9 19.2M940 283.6l-9.6-19.1M919.4 246l5.9 1.7M919.4 246l-5.4-15.5M894.5 212.8l6.9 1.2M894.5 212.8l-6.8-14.4M957.6 360.4l-0.9-19.2M870.1 181.2l7.6 13.7M942.4 301.4l5.5 1.4M947.9 302.7l1.5 18.2M949.4 320.9l7.3 20.3M901.4 214l6.2 15M887.7 198.4l-10.1-3.5M925.3 247.8l5.1 16.7M914 230.5l-6.5-1.5M956.7 341.2l-5.4-1.3"/>
<path stroke="#1a4900" d="M859.3 178.5l-16.6-12.7M859.3 178.5l18.3 16.5M825.3 154.2l17.4 11.6M825.3 154.2l-18.9-10.7M894.5 212.8l13.1 16.2M894.5 212.8l-16.9-17.8M957.6 360.4l-6.3-20.5M957.6 360.4l-6.1-1M954.6 400.1l-3.7 19.1M954.6 400.1l2.2-19.9M942.4 301.4l7 19.5M949.4 320.9l1.8 19M923.6 263.1l6.8 1.3M956.9 380.2l-6.7-0.9M956.9 380.2l-5.4-20.8"/>
<path stroke="#165b00" d="M825.3 154.2l4.9 10.8M825.3 154.2l-13.5-0.2M945.9 438.1l-2.7-19.9M945.9 438.1l-9.6 1.9M954.6 400.1l-7.2-0.9M772.5 135.6l19.9 8.5M811.8 154l-19.4-9.9M947.5 399.1l3.5 20M951 419.1l-7.7-0.9M950.1 379.3l1.3-19.9"/>
<path stroke="#00923b" d="M766.1 162.2l3.6 13.4M805.3 181l-15.9 3.9M914 399.5l13.3-0.7M914 399.5l6.4 21.1M896.6 442.8l15.1-0.5M769.7 175.7l16.3-4.6M769.7 175.7l-21-10.8M786 171l3.4 13.9M920.4 420.6l-14.3 0.6M911.6 442.4l-5.5-21.1"/>
<path stroke="#00922b" d="M766.1 162.2l19.9 8.8M766.1 162.2l-17.4 2.7M805.3 181l-19.3-9.9M730.9 168.8l17.8-3.9M730.9 168.8l-3.8-13.3M901.3 463.5l10.4-21.2M920.4 420.6l-8.8 21.8M748.7 164.9l-21.6-9.5"/>
<path stroke="#008026" d="M805.3 181l15-2.6M805.3 181l-3.7-13.3M925 358.1l1.4-19.9M925 358.1l7.7 20M925 358.1l10 0.1M786 171l15.6-3.4M820.3 178.3l4.5 16.4M839.4 192.7l18.8 15.7M932.8 378.1l-12.4 0.7M927.3 398.8l-6.9 21.8"/>
<path stroke="#00924a" d="M805.3 181l3.9 17.1M925 358.1l-13.4 0.5M914 399.5l6.3-20.7M914 399.5l-7.9 21.8M769.7 175.7l19.7 9.2M809.1 198.1l15.7-3.4M824.8 194.7l3.4 17.9M911.7 358.7l8.7 20.1M920.3 378.8l-14.3 0.6"/>
<path stroke="#008033" d="M805.3 181l19.5 13.8M907.3 280.5l-0.5 19M907.3 280.5l-13.7-18.6M926.5 318.7l-10.2-0M843.3 209.7l-3.9-17M843.3 209.7l14.9-1.3M878.6 244.1l13.4-0.1M878.6 244.1l-2.7-18.4M925 358.1l-9.3-19.7M925 358.1l-4.7 20.6M906.8 299.5l10.7-0.1M917.5 299.3l-1.3 19.3M916.3 318.7l10.2 19.6M839.4 192.7l-14.6 2M893.6 261.9l-1.7-17.9M858.2 208.5l3.4 17.9M875.9 225.7l-14.3 0.6M926.4 338.3l-10.7 0.2M927.3 398.8l-7-20.1"/>
<path stroke="#1f3700" d="M954.4 322.3l-6.5-19.6M954.4 322.3l2.3 18.9M940 283.6l-4.2-17.1M957.6 360.4l4.4 20.7M957.6 360.4l4.5 1.6M800.4 134.4l19.2 10.2M870.1 181.2l-15.9-13.3M870.1 181.2l17.6 17.2M854.2 167.9l-17-12.3M837.2 155.6l-17.6-11M935.8 266.5l-5.4-2M901.4 214l-13.7-15.5M901.4 214l12.6 16.6M962 381.1l-1.7 19.9M962 381.1l-5.2-0.9M962.1 362l-5.4-20.8M957.3 420l3-19"/>
<path stroke="#133700" d="M940 283.6l2.4 17.8M940 283.6l-6.3-1.5M919.4 246l-11.9-17M919.4 246l11 18.4M933.8 282.1l-3.3-17.6"/>
<path stroke="#152400" d="M940 283.6l4.5 1.6M947.9 302.7l-3.3-17.6M935.8 266.5l-10.5-18.7M925.3 247.8l-11.3-17.2"/>
<path stroke="#006d20" d="M907.3 280.5l10.2 18.8M907.3 280.5l10 0M907.3 280.5l-1-18.3M926.5 318.7l-8.9-19.3M926.5 318.7l-0 19.6M917.5 299.3l-0.2-18.8M906.3 262.3l-12.7-0.4M891.9 243.9l-16-18.3M858.2 208.5l17.7 17.2M926.4 338.3l8.6 20"/>
<path stroke="#0a4900" d="M926.1 281.1l7.7 0.9M926.1 281.1l-2.5-18M935.3 300.2l-1.5-18.2M899.9 228.3l12.4 16.7M899.9 228.3l-16-18.2M912.3 245l11.4 18.1"/>
<path stroke="#00804f" d="M878.6 244.1l0.8 18.4M906.8 299.5l-13-18.7"/>
<path stroke="#0015ed" d="M797.8 371.4l-9.3-18.5M752.5 363.9l13.3-14.8M741.7 316.6l18.6 8.8M779.7 314.5l-19.4 10.9M779.7 314.5l-18.4-9M788.4 352.8l-12.9 14.7M788.4 352.8l-22.7-3.7M775.5 367.6l-9.8-18.4M765.7 349.1l-18.4-9M765.7 349.1l-5.4-23.7M747.3 340.1l13-14.7M760.3 325.4l1-20"/>
<path stroke="#002eed" d="M797.8 371.4l-22.3-3.8M797.8 371.4l-13.1 15M752.5 363.9l23 3.6M752.5 363.9l9.5 18.7M752.5 363.9l-5.1-23.8M752.5 363.9l-18.7-8.8M741.7 316.6l5.7 23.5M741.7 316.6l-13.3 14.8M741.7 316.6l19.6-11.2M741.7 316.6l0.7-20M775.5 367.6l9.2 18.8M775.5 367.6l-13.5 15.1M747.3 340.1l-13.6 15M747.3 340.1l-19-8.7M761.3 305.4l-19-8.8"/>
<path stroke="#0093c8" d="M867.7 362l-8 21.3M850.5 404.8l-17.5 2M850.5 404.8l9.2-21.4M741.1 238.6l19.6 8.9M778.9 239.1l19 14.4M778.9 239.1l-18.2 8.3M796.8 235.8l1.2 17.7M760.8 247.4l-1.2-17.7"/>
<path stroke="#00b8db" d="M828.5 445.7l-6.6-18.4M828.5 445.7l-20.2-2.5M787.2 440.5l21.1 2.8M702.5 260.4l-0.7-19M702.5 260.4l-19.6-7.3M840 425.3l-18.1 1.9M821.9 427.3l-13.6 16M793.9 459.2l14.4-15.9M701.7 241.4l20.3 7.6M721.1 230.5l0.9 18.5"/>
<path stroke="#00b684" d="M863.4 441.8l6.2 21.2M863.4 441.8l17.2 0.7M737.6 204.4l-3.1-18.5M737.6 204.4l-21.4-10.1M852 462l17.6 1.1M755.5 196.6l-21-10.8M697.8 203.7l18.5-9.5"/>
<path stroke="#488000" d="M851.7 577.5l15.5-13.8M851.7 577.5l-16 3.9M602.1 151.6l19.7-11.1M638.6 132.6l-16.8 8M638.6 132.6l17.1-6.7"/>
<path stroke="#3b8000" d="M851.7 577.5l0.1-14.2M881.6 549.1l-14.5 14.6M881.6 549.1l13.8-16.2M643.6 143.1l-5-10.6M643.6 143.1l-21.8-2.6M867 549.2l0.1 14.5M867.1 563.7l-15.3-0.4M638.6 132.6l22.1 3.4M655.7 125.8l4.9 10.1"/>
<path stroke="#2d8000" d="M881.6 549.1l-14.6 0.1M881.6 549.1l-0.3-15.5M677.8 130l-17.1 5.9M643.6 143.1l17.1-7.2M881.3 533.5l14.1-0.6M894.7 517l0.7 15.9M700.5 135.8l-4.9-10.5"/>
<path stroke="#3e6d00" d="M881.6 549.1l-0.4 14M881.6 549.1l13.2-1.1M867.1 563.7l14-0.6M894.8 547.9l13.1-16.7M894.8 547.9l0.5-15M690.6 116.4l-17.8 4.2M690.6 116.4l5 9M672.8 120.5l-17.1 5.3"/>
<path stroke="#00b649" d="M874.4 483.9l-16.9-0.8M846.9 516.2l-3.4-17M694.5 185.3l-3.4-16.9M694.5 185.3l-23-7.5M857.5 483.1l3.7 17.2M861.2 500.3l-17.6-1.1M843.6 499.3l-14.2 19M651.9 189l23.1 6.8M671.5 177.8l3.4 17.9"/>
<path stroke="#00a430" d="M874.4 483.9l-13.2 16.5M874.4 483.9l3.2 17M874.4 483.9l15.7 0.2M730.9 168.8l-21.6-8.6M861.2 500.3l16.5 0.5M890.1 484.1l-3.9-20.5M709.3 160.1l3.5 16.2M691.1 168.4l-19.5 9.5"/>
<path stroke="#00b65d" d="M874.4 483.9l-4.8-20.8M694.5 185.3l18.3-9M694.5 185.3l-19.6 10.4M857.5 483.1l-13.9 16.2M734.5 185.8l-21.7-9.5M716.2 194.2l-3.4-17.9"/>
<path stroke="#00a442" d="M874.4 483.9l11.8-20.3M896.6 442.8l4.7 20.7M730.9 168.8l21.2 10M730.9 168.8l-18.1 7.6M886.2 463.6l15.1-0.1M752.1 178.8l-3.4-13.9M712.8 176.4l-21.8-8"/>
<path stroke="#00b636" d="M846.9 516.2l14.3-15.9M846.9 516.2l-17.5 2M829.4 518.2l-15.2 18.4M632.6 201.4l19.3-12.5M651.9 189l19.7-11.1"/>
<path stroke="#326d00" d="M907.9 516l-0.1 15.3M907.9 516l11.3-1.4M713.3 122.1l-17.7 3.3M677.8 130l-5-9.5M677.8 130l-22.1-4.2M929.4 497.2l-10.5 1.7M907.9 531.2l-12.5 1.6M919.2 514.6l-0.4-15.7M672.8 120.5l22.8 4.8"/>
<path stroke="#276d00" d="M907.9 516l10.9-17M907.9 516l-12.6 16.9M928.5 481.4l-9.7 17.6M928.5 481.4l9.6-21.4M713.3 122.1l22.3 7.5M713.3 122.1l5 9.9M677.8 130l17.8-4.7M752.6 128.9l-17 0.7M718.3 132l-22.7-6.7"/>
<path stroke="#1f8000" d="M907.9 516l-1.2-15.9M907.9 516l-13.3 1M677.8 130l4.9 10.8M677.8 130l22.8 5.8M881.3 533.5l13.4-16.5M660.7 135.9l22 4.9M718.3 132l-17.8 3.8"/>
<path stroke="#0048ed" d="M771 401.4l13.7-15M771 401.4l-9-18.8M752.5 363.9l-13.7 15M741.7 316.6l-19-8.4M742.6 277.1l-0.3 19.5M806.5 390l-21.8-3.6M784.7 386.4l-22.7-3.7M738.8 378.9l23.2 3.7M733.8 355.1l-5.4-23.7M722.7 308.2l5.7 23.2M722.7 308.2l19.7-11.6M742.3 296.6l19.4-10.9"/>
<path stroke="#00dbb6" d="M800 477.6l20.1 2.4M800 477.6l-20.9-2.9M663.1 246.4l-18.9 13M663.1 246.4l18.9-12.1M820.2 480l-5.5-18.1M779.1 474.7l6.1 21.6M779.1 474.7l-15.2 18.5M682 234.4l-22.8-7.9M682 234.4l-3.9-19.6"/>
<path stroke="#00db9f" d="M800 477.6l6 21.4M800 477.6l-14.8 18.8M663.1 246.4l-23.1-7.3M663.1 246.4l-3.9-20M785.2 496.4l-21.3-3.1M644.3 259.4l-4.2-20.3"/>
<path stroke="#00c8ed" d="M787.2 440.5l-14.6 15.6M787.2 440.5l6.7 18.7M741.9 433.1l-14.5 15.2M741.9 433.1l8 19.3M664.4 285.7l4.9 22M664.4 285.7l19.5 7M664.4 285.7l19.1-13M702.5 260.4l-19 12.3M772.6 456.1l-7.7-19.2M749.9 452.4l15-15.5M669.4 307.7l14.6-15M684 292.7l-0.5-20.1M682.8 253.1l0.7 19.6"/>
<path stroke="#00aeed" d="M787.2 440.5l14-15.8M787.2 440.5l-22.3-3.6M741.9 433.1l23 3.9M702.5 260.4l0.6 19.6M688.9 315.1l-19.5-7.3M688.9 315.1l-4.9-22.4M684 292.7l19.1-12.7M683.5 272.7l19.5 7.4"/>
<path stroke="#00d7ff" d="M696 424l23.1 4.6M696 424l14.5-15M696 424l-5.4-23.1M741.9 433.1l-22.8-4.4M685.1 377.7l-20-8M685.1 377.7l-14.7 15M685.1 377.7l5.5 23.2M674.3 330.3l-4.9-22.6M674.3 330.3l-19.7-7.1M674.3 330.3l-14.6 15.6M719.1 428.6l-8.6-19.6M719.1 428.6l8.3 19.7M710.5 409l-19.9-8.2M665.1 369.6l14.7-15.8M670.4 392.7l20.2 8.1M669.4 307.7l-14.8 15.5M659.7 345.9l20.1 8"/>
<path stroke="#00bbff" d="M741.9 433.1l-8.4-19.5M685.1 377.7l19.9 8.1M685.1 377.7l-5.4-23.8M674.3 330.3l14.6-15.2M674.3 330.3l5.4 23.5M733.5 413.6l-14.4 15.1M733.5 413.6l-23-4.5M710.5 409l-5.5-23.2M690.6 400.8l14.4-15.1"/>
<path stroke="#539200" d="M818.9 584.5l-17.6 16.3M818.9 584.5l-0.5 14M801.3 600.7l-18.5 1.1M801.3 600.7l-0.4-14.5M818.4 598.5l17.3-17M602.1 151.6l-16.1 10.6M586 162.2l-15.8 11.9"/>
<path stroke="#439200" d="M818.9 584.5l16.8-3M604.4 165.2l-2.3-13.6M604.4 165.2l-18.4-3M851.8 563.3l-16.1 18.1M835.7 581.4l-0.2-14.5M602.1 151.6l21.7 1.8M621.7 140.5l2.1 12.8"/>
<path stroke="#339200" d="M818.9 584.5l16.6-17.5M604.4 165.2l19.4-11.9M643.6 143.1l-19.7 10.2M867 549.2l-15.2 14.1M851.8 563.3l-16.3 3.6"/>
<path stroke="#4ba400" d="M818.9 584.5l-18 1.8M782.1 587l-17.7 15M782.1 587l0.6 14.9M572.9 189.2l-2.8-15M572.9 189.2l-17.9-2.2M763.6 586.6l0.9 15.4M782.7 601.9l18.1-15.6M586 162.2l2.5 14.4M588.5 176.7l-18.3-2.5M555 187l2.5 16.3"/>
<path stroke="#3aa400" d="M818.9 584.5l-0.7-15.3M782.1 587l18.7-0.8M604.4 165.2l-15.9 11.4M572.9 189.2l15.5-12.5M572.9 189.2l-15.4 14.1M800.9 586.2l-1-15.7M800.9 586.2l17.3-17.1"/>
<path stroke="#54b600" d="M744.5 585.2l-18.1 13.7M744.5 585.2l1 15.7M516.5 250.5l16.9 2.1M542.6 218.4l-13.4 15.7M542.6 218.4l14.9-15.1M726.4 599l-4.7-16.8M745.5 601l18-14.4M533.3 252.7l-4.1-18.6M529.2 234.1l17.1 2.4"/>
<path stroke="#40b600" d="M744.5 585.2l19 1.3M744.5 585.2l-22.8-3.1M782.1 587l-18.6-0.4M542.6 218.4l3.7 18M542.6 218.4l18.2 2.5M557.5 203.3l18.5 2.8M557.5 203.3l3.3 17.6"/>
<path stroke="#2db600" d="M744.5 585.2l17.6-14.9M782.1 587l-1.2-15.9M572.9 189.2l18.4 3.2M572.9 189.2l3 16.9M780.9 571.2l-17.4 15.4M763.6 586.6l-1.4-16.2M546.3 236.4l14.5-15.5M575.9 206.1l-15.1 14.8"/>
<path stroke="#28a400" d="M782.1 587l17.7-16.4M604.4 165.2l2.7 15M604.4 165.2l22 2.6M835.5 567l-1.2-15.9M835.5 567l-17.4 2.2M799.8 570.6l18.3-1.4M591.3 192.4l-2.9-15.7M588.5 176.7l18.6 3.6M623.8 153.4l2.5 14.5"/>
<path stroke="#19b600" d="M816.6 553l-16.8 17.6M579.6 224.3l-3.6-18.2M780.9 571.2l-18.8-0.8M780.9 571.2l18.9-0.6M798.2 554.1l1.6 16.5M591.3 192.4l15.7-12.1M591.3 192.4l-15.4 13.7M594.6 210l-18.7-3.9"/>
<path stroke="#00c83b" d="M811 519.6l18.4-1.4M811 519.6l-15.5 17.8M811 519.6l3.2 17M617.2 232.9l-3.7-18.7M617.2 232.9l-19-4.7M795.5 537.5l-4.8-20M613.5 214.2l22.7 5.4"/>
<path stroke="#00c851" d="M811 519.6l14.7-18.6M811 519.6l-20.3-2.2M617.2 232.9l18.9-13.3M655.3 207.5l-22.7-6.1M655.3 207.5l-3.4-18.5M829.4 518.2l-3.7-17.2M774.8 534.9l16-17.5M632.6 201.4l3.6 18.2"/>
<path stroke="#7cdb00" d="M581 533.1l18.7 9.6M581 533.1l-9.5-17.9M618.7 551.6l-13.6 11.9M562.4 496.7l-22.2-6.9M562.4 496.7l-13.6 11.8M599.7 542.7l5.4 20.8M540.3 489.8l-8-20.1M540.3 489.8l13.8-12.9M548.8 508.5l22.7 6.7M513.3 409.8l5.5 20.1M513.3 409.8l-5.5-24.1M518.8 429.9l6.3 20.1M525.2 450l7.1 19.6M504.1 365.5l3.7 20.2M504.1 365.5l-2.9-20.3"/>
<path stroke="#65db00" d="M581 533.1l13.6-12M618.7 551.6l-19-8.9M618.7 551.6l20.1 8M562.4 496.7l9 18.5M562.4 496.7l-8.4-19.8M533.4 416.6l-20.1-6.8M533.4 416.6l-14.6 13.3M546.2 456.7l-21.1-6.7M546.2 456.7l-14 13M516.9 328.3l-15.7 17M522.5 368.6l-18.3-3.1M522.5 368.6l-14.6 17.1M613.5 530.5l-13.8 12.2M599.7 542.7l-5.1-21.6M594.6 521.1l-23.2-5.9M571.5 515.2l13.8-12.2M513.3 409.8l14.2-17.1M518.8 429.9l20.7 6.9M539.5 436.8l-14.3 13.3M532.2 469.7l21.8 7.3M504.1 365.5l15.2-17.2M507.8 385.7l19.6 6.9M501.2 345.2l18.1 3.1"/>
<path stroke="#4ddb00" d="M618.7 551.6l-5.2-21.1M618.7 551.6l14.7-12.8M659.2 566.8l-20.3-7.2M562.4 496.7l22.8 6.3M562.4 496.7l14.3-13.1M533.4 416.6l-6-24M546.2 456.7l7.8 20.2M516.9 328.3l2.4 20.1M516.9 328.3l-1.5-20.5M522.5 368.6l-3.1-20.3M522.5 368.6l5 24M613.5 530.5l-18.9-9.4M594.6 521.1l-9.4-18.1M633.4 538.9l5.4 20.8M653.7 546.6l-14.8 13.1M533.7 311l-18.3-3.2"/>
<path stroke="#72c800" d="M618.7 551.6l5.5 20.1M514.7 287.8l-16.8-1.9M514.7 287.8l-16.6 17.2M624.3 571.7l20.3 7.5M624.3 571.7l14.6-12M683.9 590.9l-19.8-5.3M644.6 579.2l19.5 6.3M515.2 268.8l-17.3 17M498.1 305l1.2 20.4M498.1 305l17.3 2.8M499.3 325.4l2 19.9"/>
<path stroke="#00ed5f" d="M677.7 497.8l-5.5-21.9M677.7 497.8l23.1 4.9M637.4 481.9l14.6-14M723.7 506.9l-17.5 16.7M589 303l18.1-15.2M589 303l4.7 22.2M598.8 347.8l-22.5-6.5M598.8 347.8l-17.8 17.2M672.2 475.9l-14.7 14.2M657.5 490.1l-5.5-22.2M700.8 502.7l5.4 21M607.1 287.8l-19.1-5M593.7 325.2l-17.4 16.1"/>
<path stroke="#00ed46" d="M677.7 497.8l-20.2-7.7M677.7 497.8l-14.7 14.1M677.7 497.8l5.4 21.3M637.4 481.9l20.1 8.2M637.4 481.9l-8.4-19.6M589 303l-1-20.3M589 303l-19-4.6M589 303l-17.6 15.8M657.5 490.1l5.5 21.8M683.1 519l17.7-16.3M629 462.2l-23-6M571.4 318.8l22.3 6.4M576.3 341.3l4.7 23.7M586.5 389l-5.5-24.1"/>
<path stroke="#1edb00" d="M648.3 525.4l-14.9 13.5M648.3 525.4l5.4 21.2M551.4 294.3l-18.7-3.5M551.4 294.3l-17.7 16.7M668.4 532.8l-14.7 13.8M628.4 517.3l5.1 21.6M693.6 559.1l-19.8-5.5M693.6 559.1l23.2 4.8M673.8 553.6l-20.1-7M552.6 314.5l-18.9-3.5M550.8 274.6l-18.1 16.2M538 351.7l-2.7-20.2M535.3 331.5l-1.6-20.5"/>
<path stroke="#5cc800" d="M659.2 566.8l-14.6 12.4M659.2 566.8l4.9 18.7M698.6 577.7l-14.7 13.2M698.6 577.7l4.8 17.5M514.7 287.8l0.5-18.9M514.7 287.8l0.7 20M516.9 328.3l-17.6-2.9M683.9 590.9l-5-18.2M703.4 595.2l18.3-13.1M644.6 579.2l-5.7-19.5M664.1 585.5l14.8-12.8M532.3 271.2l-17.1-2.4M515.2 268.8l18.1-16.2M499.3 325.4l16.1-17.6"/>
<path stroke="#47c800" d="M659.2 566.8l19.7 5.9M698.6 577.7l-19.7-5M698.6 577.7l23.2 4.4M514.7 287.8l17.6-16.5M514.7 287.8l18 3M532.3 271.2l1-18.6M533.3 252.7l13-16.2M532.7 290.7l-17.3 17.1"/>
<path stroke="#00db58" d="M769.7 514.5l5.1 20.4M769.7 514.5l-17.2 17.7M723.7 506.9l5.7 21.5M587.4 263.1l18.9 4.8M617.2 232.9l4 19.7M752.5 532.2l-5.5-21.1M729.4 528.4l17.6-17.3M588 282.8l18.3-14.9M606.3 267.9l-4.2-20.2M602.1 247.6l19.1 5"/>
<path stroke="#00db6f" d="M769.7 514.5l21.1 3M769.7 514.5l-22.7-3.4M617.2 232.9l22.9 6.2M790.7 517.4l-5.5-21.1M606.3 267.9l14.9-15.2M640.1 239.2l-3.9-19.5"/>
<path stroke="#004dff" d="M714.7 346.5l19 8.6M714.7 346.5l13.6-15.1M738.8 378.9l-5-23.8"/>
<path stroke="#54ed00" d="M533.4 416.6l6.1 20.1M546.2 456.7l-6.7-19.9M554 476.9l14.5-13.4M554 476.9l22.7 6.7"/>
<path stroke="#00ff4b" d="M620.8 442.3l8.2 20M620.8 442.3l-22.6-6.1M620.8 442.3l-14.8 14M598.2 436.2l16.9-17.1M592.6 412.9l-6.1-23.9"/>
<path stroke="#00ff67" d="M620.8 442.3l22.9 5.8M620.8 442.3l-5.7-23.1M609.8 395.8l-17.1 17.1M609.8 395.8l-23.3-6.8M652 467.8l-23-5.6M629 462.2l14.7-14.2M592.6 412.9l22.5 6.2M586.5 389l17.6-17.3M581 364.9l23.1 6.8"/>
<path stroke="#68b600" d="M516.5 250.5l-1.2 18.3M516.5 250.5l12.8-16.4M726.4 599l19.1 2M726.4 599l-23-3.8M683.9 590.9l19.5 4.3M525.9 216.5l3.3 17.6"/>
<path stroke="#00db40" d="M587.4 263.1l0.6 19.7M587.4 263.1l14.7-15.5M617.2 232.9l-15.1 14.7M774.8 534.9l-22.3-2.7M706.2 523.7l23.2 4.8M752.5 532.2l-23.1-3.8M588 282.8l-18 15.6M602.1 247.6l-3.9-19.4"/>
<path stroke="#00a1db" d="M702.5 260.4l19.5-11.4M741.1 238.6l-19.1 10.4M832.9 406.8l7.1 18.6M832.9 406.8l-11.1 20.5M821.9 427.3l-20.7-2.6M808.3 443.3l-7.1-18.6"/>
<path stroke="#5da400" d="M542.6 218.4l-2.9-16.9M542.6 218.4l-16.8-1.9M745.5 601l18.9 1M764.4 602l18.3-0.1M539.7 201.6l15.3-14.5M539.7 201.6l17.8 1.7M570.1 174.1l-15.1 12.9"/>
<path stroke="#118000" d="M723.1 143.3l-4.8-11.3M723.1 143.3l-22.5-7.5M917.2 482.8l-10.4 17.3M906.8 500.1l-12.1 16.9M705.4 147.5l-4.8-11.7M740.5 140.4l-22.2-8.4M682.7 140.8l17.9-5"/>
<path stroke="#4a6d00" d="M633.7 123.4l4.9 9.2M633.7 123.4l22 2.5M866.3 577.5l14.8-14.4M881.2 563l13.7-15.1M672.8 120.5l-22.1-3.3M655.7 125.8l-5-8.6"/>
<path stroke="#008aa4" d="M865 302.4l-0.1-19.5"/>
<path stroke="#00ff30" d="M598.2 436.2l-5.5-23.3"/>
</svg>
<div class="a" style="left:0;top:0;width:1024px;height:26px;background:#e6e6e6;border-bottom:1px solid #9a9a9a"></div>
<svg class="a" style="left:6px;top:4px" width="22" height="18" viewBox="0 0 22 18"><ellipse cx="10" cy="10.400" rx="8.900" ry="3.500" transform="rotate(10 10 10.400)" fill="#e31818" stroke="#8a0c0c" stroke-width=".6"/><path d="M5.200 8.800C5.500 6 6 3.800 7 3c1.500-.8 2.500.3 3.500 0s2.500-.8 3.500 0c1 1.500 1.300 4 1.400 6.500-3 1.200-7.500.8-10.200-.7z" fill="#ea2020" stroke="#8a0c0c" stroke-width=".5"/><path d="M5.300 7.800c2.500 1.600 7 2 10 1.200" fill="none" stroke="#1a1a1a" stroke-width="1.300"/></svg>
<div class="t" style="left:31px;top:6.5px;font-size:13.5px;transform:scaleX(.963);transform-origin:0 0">Applications</div>
<div class="t" style="left:114px;top:6.5px;font-size:13.5px;transform:scaleX(.963);transform-origin:0 0">Actions</div>
<svg class="a" style="left:165px;top:2px" width="126" height="22" viewBox="0 0 126 22">
<defs><radialGradient id="gl" cx="35%" cy="30%" r="75%"><stop offset="0" stop-color="#5fa0e0"/><stop offset="1" stop-color="#12408f"/></radialGradient><radialGradient id="pi" cx="35%" cy="30%" r="75%"><stop offset="0" stop-color="#7fb0f0"/><stop offset="1" stop-color="#3a5ca8"/></radialGradient></defs>
<circle cx="11" cy="9.3" r="7.8" fill="url(#gl)" stroke="#1a3060" stroke-width=".7"/><path d="M6.500 5.500c2-2.500 5-2.500 6.500-1s-.5 4.500-3 4.500-4-1-3.500-3.500z" fill="#6fc47a"/><ellipse cx="10.500" cy="9.500" rx="9.500" ry="3" fill="none" stroke="#666" stroke-width="1" transform="rotate(-8 10.500 9.500)"/>
<ellipse cx="15.600" cy="14.800" rx="6" ry="4.200" transform="rotate(-22 15.600 14.800)" fill="#f4f4f8" stroke="#333" stroke-width="1"/><path d="M13 13.500l4.500-2" stroke="#99a" stroke-width=".8"/>
<path d="M25.500 12.500L32 8l14 4v2.500L37 19.500 26 15.500z" fill="#d8b77c" stroke="#7a6038" stroke-width=".7"/><path d="M26 13l11 3.500 9-4.200" fill="none" stroke="#a8854e" stroke-width=".8"/>
<path d="M29.500 5L42 1.500l4.800 6L35 11z" fill="#f6f6f6" stroke="#777" stroke-width=".7"/><circle cx="38.500" cy="6.300" r="2.700" fill="#3f86c8"/><path d="M37 5.500c1-1 2.500-.5 2.500.5s-1.500 1.500-2.500.8z" fill="#7fd08a"/>
<path d="M53 6.500L67 3l5 9-14.500 4z" fill="#e4e4e4" stroke="#666" stroke-width=".7"/><path d="M51.400 4.500L66 1.300l6 10.200L57 15.500z" fill="#fafafa" stroke="#555" stroke-width=".7"/><path d="M56 6.500l9-2M57 8.500l9-2M58 10.500l9-2" stroke="#bbb" stroke-width=".7"/>
<path d="M52 12.800l18.500 6.200" stroke="#7d84ad" stroke-width="2.400" stroke-linecap="round"/><path d="M53 13.100l5 1.700" stroke="#c9a23c" stroke-width="2.400"/>
<rect x="79.300" y="1.300" width="14.700" height="11" fill="#48527f" stroke="#2a3050" stroke-width=".7"/><rect x="82" y="4" width="2.800" height="7.500" fill="#e8643c"/><rect x="85.800" y="3" width="2.600" height="8.500" fill="#4fae5c"/><rect x="89.400" y="6" width="2.600" height="5.500" fill="#3f7fd8"/>
<path d="M77.300 12.800L89 10.500l5.800 6L83 20.200z" fill="#f8f8f8" stroke="#444" stroke-width=".8"/><path d="M80.800 13.500l7.200-1.400 3.400 3.500-7.300 2z" fill="#3f8ae8"/>
<path d="M100.600 6L117 2l4.800 6.200L106 12.500z" fill="#f4f4f6" stroke="#888" stroke-width=".7"/><path d="M100.600 6L117 2l1.200 1.600L102 7.800z" fill="#b8d8ec"/><path d="M105 7l1.500 2M109.500 5.800l1.600 2.100M114 4.700l1.600 2.100" stroke="#ccc" stroke-width=".6"/>
<circle cx="109.200" cy="14.600" r="6.300" fill="url(#pi)" stroke="#2a3c70" stroke-width=".7"/><path d="M109.200 14.600l1-6.200a6.300 6.300 0 0 1 4.800 3.600z" fill="#e8603a"/><path d="M109.200 14.600l5.800-2.600a6.300 6.300 0 0 1 .5 2.800z" fill="#4fb060"/>
</svg>
<svg class="a" style="left:822px;top:1px" width="6" height="24"><path d="M0 24L6 18M0 20L6 14M0 16L6 10M0 12L6 6M0 8L6 2" stroke="#aaa" stroke-width="1"/></svg>
<div class="a" style="left:831px;top:2px;width:22px;height:22px;border-radius:50%;background:radial-gradient(circle at 40% 35%,#e84040,#a80c0c);border:1px solid #6a0a0a"></div>
<div class="t b" style="left:831px;top:4px;width:22px;text-align:center;font-size:17px;color:#fff">!</div>
<div class="t" style="left:859px;top:7px;font-size:13.3px;white-space:pre">Wed Jan 10,  5:49 PM</div>
<svg class="a" style="left:998px;top:3px" width="16" height="20" viewBox="0 0 16 20"><path d="M1 7h4l6-6v18l-6-6H1z" fill="#9a9a9a" stroke="#555"/><path d="M11 1c3 5 3 13 0 18" fill="#777" stroke="#555"/></svg>

<div class="a" style="left:0;top:743px;width:1024px;height:25px;background:#e6e6e6;border-top:1px solid #fff"></div>
<div class="a" style="left:1px;top:745px;width:30px;height:23px;border:1px solid;border-color:#fff #8c8c8c #8c8c8c #fff;background:#e6e6e6"></div>
<svg class="a" style="left:6px;top:748px" width="20" height="16" viewBox="0 0 20 16"><path d="M1 8l9-6 9 4-9 7z" fill="#c8a060" stroke="#654"/><path d="M7 5l6-3 5 3-6 4z" fill="#3c78c8"/><path d="M9 6l4-2 2 2-4 2z" fill="#5fbf4f"/><path d="M2 11l7 4 4-2" fill="#eee" stroke="#777"/></svg>
<svg class="a" style="left:33px;top:746px" width="7" height="22"><path d="M0 20L6 14M0 16L6 10M0 12L6 6M0 8L6 2" stroke="#999" stroke-width="1"/></svg>

<div class="a" style="left:41px;top:745px;width:112px;height:23px;border:1px solid;border-color:#fff #8c8c8c #8c8c8c #fff;background:#e6e6e6;overflow:hidden"></div>
<div class="a" style="left:45px;top:749px;width:14px;height:12px;background:#555;border:2px solid;border-color:#ccc #888 #777 #bbb"></div><div class="a" style="left:48px;top:752px;width:5px;height:1px;background:#ddd"></div>
<div class="t" style="left:64px;top:750px;font-size:13px;width:87px;overflow:hidden">delphine@loca</div>
<div class="a" style="left:153px;top:745px;width:112px;height:23px;border:1px solid;border-color:#8c8c8c #fff #fff #8c8c8c;background:#d4d4d4;overflow:hidden"></div>
<div class="a" style="left:158px;top:748px;width:12px;height:15px;background:#fff;border:1px solid #666;border-radius:0 3px 0 0"></div>
<div class="t" style="left:176px;top:750px;font-size:13px;width:87px;overflow:hidden">KWMeshVisu</div>
<div class="a" style="left:265px;top:745px;width:112px;height:23px;border:1px solid;border-color:#fff #8c8c8c #8c8c8c #fff;background:#e6e6e6;overflow:hidden"></div>
<div class="a" style="left:269px;top:749px;width:14px;height:12px;background:#555;border:2px solid;border-color:#ccc #888 #777 #bbb"></div><div class="a" style="left:272px;top:752px;width:5px;height:1px;background:#ddd"></div>
<div class="t" style="left:288px;top:750px;font-size:13px;width:87px;overflow:hidden">delphine@loca</div>
<div class="a" style="left:377px;top:745px;width:112px;height:23px;border:1px solid;border-color:#fff #8c8c8c #8c8c8c #fff;background:#e6e6e6;overflow:hidden"></div>
<svg class="a" style="left:380px;top:748px" width="17" height="15" viewBox="0 0 17 15"><path d="M1 5c2-2 5-1 7 0l6-3 2 2-4 4c-2 4-8 5-10 3z" fill="#7a6a50" stroke="#332"/><circle cx="5" cy="6" r="1.2" fill="#fff"/><path d="M12 5l4 3" stroke="#222" stroke-width="1.500"/></svg>
<div class="t" style="left:400px;top:750px;font-size:13px;width:87px;overflow:hidden">The GIMP</div>
<div class="a" style="left:914px;top:744px;width:110px;height:24px;background:#9b9b9b"></div>
<div class="a" style="left:915px;top:745px;width:26px;height:22px;background:#4a66b0;border:2px solid #1c2c5c;box-shadow:inset 0 0 0 1px #fff"></div>
<div class="a" style="left:942px;top:745px;width:1px;height:23px;background:#ddd"></div><div class="a" style="left:968px;top:745px;width:1px;height:23px;background:#ddd"></div>
<div class="a" style="left:996px;top:745px;width:1px;height:23px;background:#ddd"></div>

</div>
</body></html>
